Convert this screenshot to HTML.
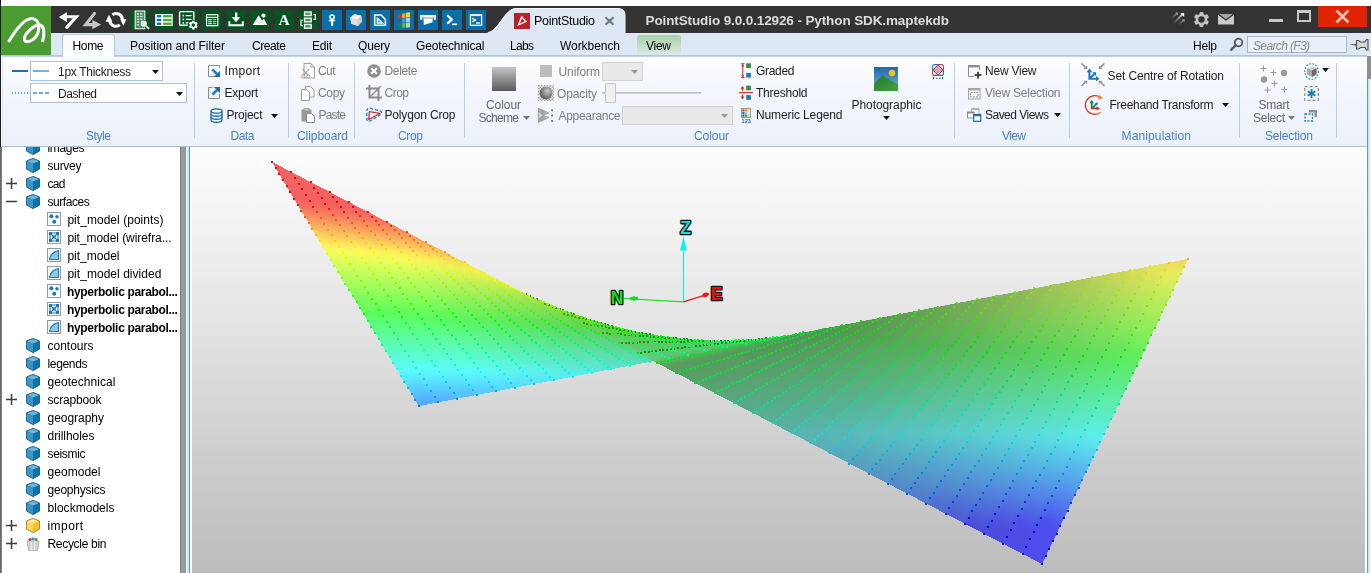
<!DOCTYPE html><html><head><meta charset="utf-8"><title>PointStudio</title><style>
html,body{margin:0;padding:0}
body{width:1371px;height:573px;position:relative;overflow:hidden;background:#fff;font-family:"Liberation Sans",sans-serif;font-size:12px}
.b,.i,.t{position:absolute}
.i{overflow:visible}
.t{white-space:pre;line-height:16px;height:16px}
</style></head><body>
<div class="b" style="left:192px;top:151px;width:1173px;height:422px;background:linear-gradient(#fdfdfd 0%,#e4e4e4 40%,#cfcfcf 70%,#bcbcbc 100%)"></div>
<svg class="i" style="left:192px;top:151px" width="1173" height="422" viewBox="0 0 1173 422"><defs><filter id="bl" x="-5%" y="-5%" width="110%" height="110%"><feGaussianBlur stdDeviation="3"/></filter><clipPath id="cp"><polygon points="80.0,11.0 314.8,133.6 322.1,137.4 329.5,141.0 336.8,144.5 344.1,147.9 351.5,151.1 358.8,154.2 366.1,157.2 373.5,160.0 380.8,162.8 388.1,165.3 395.5,167.8 402.8,170.1 410.1,172.3 417.5,174.4 424.8,176.3 432.1,178.1 439.5,179.8 446.8,181.3 454.1,182.7 461.5,184.0 468.8,185.2 476.1,186.2 483.4,187.1 490.8,187.8 498.1,188.5 505.4,189.0 512.8,189.3 520.1,189.6 527.4,189.7 534.7,189.6 542.1,189.5 549.4,189.2 556.7,188.8 564.1,188.2 571.4,187.5 578.7,186.7 586.0,185.8 593.4,184.7 600.7,183.5 608.0,182.2 996.0,108.0 850.0,413.0 461.0,209.0 227.0,255.0"/></clipPath></defs>
<g id="sf" shape-rendering="crispEdges">
<polygon points="80.0,11.0 99.2,21.0 102.9,26.8 83.7,17.1" fill="#ef6464"/>
<polygon points="83.7,17.1 102.9,26.8 106.6,32.6 87.3,23.2" fill="#ef6464"/>
<polygon points="87.3,23.2 106.6,32.6 110.3,38.3 91.0,29.3" fill="#f06363"/>
<polygon points="91.0,29.3 110.3,38.3 113.9,44.1 94.7,35.4" fill="#f16363"/>
<polygon points="94.7,35.4 113.9,44.1 117.6,49.8 98.4,41.5" fill="#f26262"/>
<polygon points="98.4,41.5 117.6,49.8 121.3,55.6 102.0,47.6" fill="#f36161"/>
<polygon points="102.0,47.6 121.3,55.6 125.0,61.3 105.7,53.7" fill="#f46a61"/>
<polygon points="105.7,53.7 125.0,61.3 128.6,67.1 109.4,59.8" fill="#f67d60"/>
<polygon points="109.4,59.8 128.6,67.1 132.3,72.9 113.1,65.9" fill="#f7905f"/>
<polygon points="113.1,65.9 132.3,72.9 136.0,78.6 116.8,72.0" fill="#f8a45f"/>
<polygon points="116.8,72.0 136.0,78.6 139.7,84.4 120.4,78.1" fill="#f9b85e"/>
<polygon points="120.4,78.1 139.7,84.4 143.3,90.1 124.1,84.2" fill="#facd5d"/>
<polygon points="124.1,84.2 143.3,90.1 147.0,95.9 127.8,90.3" fill="#fbe25d"/>
<polygon points="127.8,90.3 147.0,95.9 150.7,101.6 131.4,96.4" fill="#fcf75c"/>
<polygon points="131.4,96.4 150.7,101.6 154.4,107.4 135.1,102.5" fill="#f0fc5c"/>
<polygon points="135.1,102.5 154.4,107.4 158.0,113.2 138.8,108.6" fill="#e1fc5c"/>
<polygon points="138.8,108.6 158.0,113.2 161.7,118.9 142.5,114.7" fill="#d3fc5c"/>
<polygon points="142.5,114.7 161.7,118.9 165.4,124.7 146.2,120.8" fill="#c4fc5c"/>
<polygon points="146.2,120.8 165.4,124.7 169.1,130.4 149.8,126.9" fill="#b5fc5c"/>
<polygon points="149.8,126.9 169.1,130.4 172.7,136.2 153.5,133.0" fill="#a6fc5c"/>
<polygon points="153.5,133.0 172.7,136.2 176.4,141.9 157.2,139.1" fill="#97fc5c"/>
<polygon points="157.2,139.1 176.4,141.9 180.1,147.7 160.9,145.2" fill="#88fc5c"/>
<polygon points="160.9,145.2 180.1,147.7 183.8,153.5 164.5,151.3" fill="#79fc5c"/>
<polygon points="164.5,151.3 183.8,153.5 187.4,159.2 168.2,157.4" fill="#6afc5c"/>
<polygon points="168.2,157.4 187.4,159.2 191.1,165.0 171.9,163.5" fill="#5cfc5c"/>
<polygon points="171.9,163.5 191.1,165.0 194.8,170.7 175.6,169.6" fill="#5cfc6d"/>
<polygon points="175.6,169.6 194.8,170.7 198.5,176.5 179.2,175.7" fill="#5cfc7d"/>
<polygon points="179.2,175.7 198.5,176.5 202.1,182.2 182.9,181.8" fill="#5cfc8e"/>
<polygon points="182.9,181.8 202.1,182.2 205.8,188.0 186.6,187.9" fill="#5cfc9e"/>
<polygon points="186.6,187.9 205.8,188.0 209.5,193.8 190.2,194.0" fill="#5cfcaf"/>
<polygon points="190.2,194.0 209.5,193.8 213.2,199.5 193.9,200.1" fill="#5cfcbf"/>
<polygon points="193.9,200.1 213.2,199.5 216.8,205.3 197.6,206.2" fill="#5cfcd0"/>
<polygon points="197.6,206.2 216.8,205.3 220.5,211.0 201.3,212.3" fill="#5cfce0"/>
<polygon points="201.3,212.3 220.5,211.0 224.2,216.8 204.9,218.4" fill="#5cfcf0"/>
<polygon points="204.9,218.4 224.2,216.8 227.9,222.5 208.6,224.5" fill="#5cf8fc"/>
<polygon points="208.6,224.5 227.9,222.5 231.5,228.3 212.3,230.6" fill="#5ae9fc"/>
<polygon points="212.3,230.6 231.5,228.3 235.2,234.1 216.0,236.7" fill="#59dafc"/>
<polygon points="216.0,236.7 235.2,234.1 238.9,239.8 219.6,242.8" fill="#58cbfc"/>
<polygon points="219.6,242.8 238.9,239.8 242.6,245.6 223.3,248.9" fill="#56bbfc"/>
<polygon points="223.3,248.9 242.6,245.6 246.2,251.3 227.0,255.0" fill="#55abfc"/>
<polygon points="99.2,21.0 118.5,31.1 122.2,36.5 102.9,26.8" fill="#f06464"/>
<polygon points="102.9,26.8 122.2,36.5 125.8,41.9 106.6,32.6" fill="#f16363"/>
<polygon points="106.6,32.6 125.8,41.9 129.5,47.3 110.3,38.3" fill="#f26363"/>
<polygon points="110.3,38.3 129.5,47.3 133.2,52.8 113.9,44.1" fill="#f36262"/>
<polygon points="113.9,44.1 133.2,52.8 136.9,58.2 117.6,49.8" fill="#f36161"/>
<polygon points="117.6,49.8 136.9,58.2 140.5,63.6 121.3,55.6" fill="#f46a61"/>
<polygon points="121.3,55.6 140.5,63.6 144.2,69.0 125.0,61.3" fill="#f57c60"/>
<polygon points="125.0,61.3 144.2,69.0 147.9,74.4 128.6,67.1" fill="#f68e5f"/>
<polygon points="128.6,67.1 147.9,74.4 151.6,79.8 132.3,72.9" fill="#f7a15f"/>
<polygon points="132.3,72.9 151.6,79.8 155.2,85.2 136.0,78.6" fill="#f8b45e"/>
<polygon points="136.0,78.6 155.2,85.2 158.9,90.7 139.7,84.4" fill="#f9c75e"/>
<polygon points="139.7,84.4 158.9,90.7 162.6,96.1 143.3,90.1" fill="#fadb5d"/>
<polygon points="143.3,90.1 162.6,96.1 166.3,101.5 147.0,95.9" fill="#fbf05c"/>
<polygon points="147.0,95.9 166.3,101.5 169.9,106.9 150.7,101.6" fill="#f6fc5c"/>
<polygon points="150.7,101.6 169.9,106.9 173.6,112.3 154.4,107.4" fill="#e8fc5c"/>
<polygon points="154.4,107.4 173.6,112.3 177.3,117.7 158.0,113.2" fill="#dafc5c"/>
<polygon points="158.0,113.2 177.3,117.7 181.0,123.1 161.7,118.9" fill="#ccfc5c"/>
<polygon points="161.7,118.9 181.0,123.1 184.6,128.5 165.4,124.7" fill="#befc5c"/>
<polygon points="165.4,124.7 184.6,128.5 188.3,134.0 169.1,130.4" fill="#b0fc5c"/>
<polygon points="169.1,130.4 188.3,134.0 192.0,139.4 172.7,136.2" fill="#a1fc5c"/>
<polygon points="172.7,136.2 192.0,139.4 195.6,144.8 176.4,141.9" fill="#93fc5c"/>
<polygon points="176.4,141.9 195.6,144.8 199.3,150.2 180.1,147.7" fill="#85fc5c"/>
<polygon points="180.1,147.7 199.3,150.2 203.0,155.6 183.8,153.5" fill="#77fc5c"/>
<polygon points="183.8,153.5 203.0,155.6 206.7,161.0 187.4,159.2" fill="#69fc5c"/>
<polygon points="187.4,159.2 206.7,161.0 210.3,166.4 191.1,165.0" fill="#5cfc5d"/>
<polygon points="191.1,165.0 210.3,166.4 214.0,171.9 194.8,170.7" fill="#5cfc6d"/>
<polygon points="194.8,170.7 214.0,171.9 217.7,177.3 198.5,176.5" fill="#5cfc7d"/>
<polygon points="198.5,176.5 217.7,177.3 221.4,182.7 202.1,182.2" fill="#5cfc8c"/>
<polygon points="202.1,182.2 221.4,182.7 225.0,188.1 205.8,188.0" fill="#5cfc9c"/>
<polygon points="205.8,188.0 225.0,188.1 228.7,193.5 209.5,193.8" fill="#5cfcac"/>
<polygon points="209.5,193.8 228.7,193.5 232.4,198.9 213.2,199.5" fill="#5cfcbb"/>
<polygon points="213.2,199.5 232.4,198.9 236.1,204.3 216.8,205.3" fill="#5cfccb"/>
<polygon points="216.8,205.3 236.1,204.3 239.7,209.8 220.5,211.0" fill="#5cfcda"/>
<polygon points="220.5,211.0 239.7,209.8 243.4,215.2 224.2,216.8" fill="#5cfcea"/>
<polygon points="224.2,216.8 243.4,215.2 247.1,220.6 227.9,222.5" fill="#5cfcfa"/>
<polygon points="227.9,222.5 247.1,220.6 250.8,226.0 231.5,228.3" fill="#5bf0fc"/>
<polygon points="231.5,228.3 250.8,226.0 254.4,231.4 235.2,234.1" fill="#5ae2fc"/>
<polygon points="235.2,234.1 254.4,231.4 258.1,236.8 238.9,239.8" fill="#58d3fc"/>
<polygon points="238.9,239.8 258.1,236.8 261.8,242.2 242.6,245.6" fill="#57c5fc"/>
<polygon points="242.6,245.6 261.8,242.2 265.4,247.6 246.2,251.3" fill="#56b6fc"/>
<polygon points="118.5,31.1 137.8,41.1 141.4,46.2 122.2,36.5" fill="#f16363"/>
<polygon points="122.2,36.5 141.4,46.2 145.1,51.3 125.8,41.9" fill="#f26262"/>
<polygon points="125.8,41.9 145.1,51.3 148.8,56.4 129.5,47.3" fill="#f36262"/>
<polygon points="129.5,47.3 148.8,56.4 152.4,61.4 133.2,52.8" fill="#f46161"/>
<polygon points="133.2,52.8 152.4,61.4 156.1,66.5 136.9,58.2" fill="#f56b61"/>
<polygon points="136.9,58.2 156.1,66.5 159.8,71.6 140.5,63.6" fill="#f67c60"/>
<polygon points="140.5,63.6 159.8,71.6 163.5,76.6 144.2,69.0" fill="#f68e5f"/>
<polygon points="144.2,69.0 163.5,76.6 167.1,81.7 147.9,74.4" fill="#f7a05f"/>
<polygon points="147.9,74.4 167.1,81.7 170.8,86.8 151.6,79.8" fill="#f8b25e"/>
<polygon points="151.6,79.8 170.8,86.8 174.5,91.9 155.2,85.2" fill="#f9c45e"/>
<polygon points="155.2,85.2 174.5,91.9 178.2,96.9 158.9,90.7" fill="#fad75d"/>
<polygon points="158.9,90.7 178.2,96.9 181.8,102.0 162.6,96.1" fill="#fbea5d"/>
<polygon points="162.6,96.1 181.8,102.0 185.5,107.1 166.3,101.5" fill="#fbfc5c"/>
<polygon points="166.3,101.5 185.5,107.1 189.2,112.1 169.9,106.9" fill="#edfc5c"/>
<polygon points="169.9,106.9 189.2,112.1 192.8,117.2 173.6,112.3" fill="#e0fc5c"/>
<polygon points="173.6,112.3 192.8,117.2 196.5,122.3 177.3,117.7" fill="#d3fc5c"/>
<polygon points="177.3,117.7 196.5,122.3 200.2,127.4 181.0,123.1" fill="#c5fc5c"/>
<polygon points="181.0,123.1 200.2,127.4 203.9,132.4 184.6,128.5" fill="#b8fc5c"/>
<polygon points="184.6,128.5 203.9,132.4 207.5,137.5 188.3,134.0" fill="#aafc5c"/>
<polygon points="188.3,134.0 207.5,137.5 211.2,142.6 192.0,139.4" fill="#9dfc5c"/>
<polygon points="192.0,139.4 211.2,142.6 214.9,147.6 195.6,144.8" fill="#90fc5c"/>
<polygon points="195.6,144.8 214.9,147.6 218.6,152.7 199.3,150.2" fill="#82fc5c"/>
<polygon points="199.3,150.2 218.6,152.7 222.2,157.8 203.0,155.6" fill="#75fc5c"/>
<polygon points="203.0,155.6 222.2,157.8 225.9,162.8 206.7,161.0" fill="#67fc5c"/>
<polygon points="206.7,161.0 225.9,162.8 229.6,167.9 210.3,166.4" fill="#5cfc5e"/>
<polygon points="210.3,166.4 229.6,167.9 233.3,173.0 214.0,171.9" fill="#5cfc6d"/>
<polygon points="214.0,171.9 233.3,173.0 236.9,178.1 217.7,177.3" fill="#5cfc7c"/>
<polygon points="217.7,177.3 236.9,178.1 240.6,183.1 221.4,182.7" fill="#5cfc8b"/>
<polygon points="221.4,182.7 240.6,183.1 244.3,188.2 225.0,188.1" fill="#5cfc9a"/>
<polygon points="225.0,188.1 244.3,188.2 247.9,193.3 228.7,193.5" fill="#5cfca8"/>
<polygon points="228.7,193.5 247.9,193.3 251.6,198.3 232.4,198.9" fill="#5cfcb7"/>
<polygon points="232.4,198.9 251.6,198.3 255.3,203.4 236.1,204.3" fill="#5cfcc6"/>
<polygon points="236.1,204.3 255.3,203.4 259.0,208.5 239.7,209.8" fill="#5cfcd5"/>
<polygon points="239.7,209.8 259.0,208.5 262.6,213.6 243.4,215.2" fill="#5cfce4"/>
<polygon points="243.4,215.2 262.6,213.6 266.3,218.6 247.1,220.6" fill="#5cfcf3"/>
<polygon points="247.1,220.6 266.3,218.6 270.0,223.7 250.8,226.0" fill="#5cf7fc"/>
<polygon points="250.8,226.0 270.0,223.7 273.7,228.8 254.4,231.4" fill="#5aeafc"/>
<polygon points="254.4,231.4 273.7,228.8 277.3,233.8 258.1,236.8" fill="#59dcfc"/>
<polygon points="258.1,236.8 277.3,233.8 281.0,238.9 261.8,242.2" fill="#58cffc"/>
<polygon points="261.8,242.2 281.0,238.9 284.7,244.0 265.4,247.6" fill="#57c1fc"/>
<polygon points="137.8,41.1 157.0,51.2 160.7,55.9 141.4,46.2" fill="#f26262"/>
<polygon points="141.4,46.2 160.7,55.9 164.3,60.7 145.1,51.3" fill="#f36262"/>
<polygon points="145.1,51.3 164.3,60.7 168.0,65.4 148.8,56.4" fill="#f46161"/>
<polygon points="148.8,56.4 168.0,65.4 171.7,70.1 152.4,61.4" fill="#f56f61"/>
<polygon points="152.4,61.4 171.7,70.1 175.4,74.8 156.1,66.5" fill="#f67f60"/>
<polygon points="156.1,66.5 175.4,74.8 179.0,79.6 159.8,71.6" fill="#f7905f"/>
<polygon points="159.8,71.6 179.0,79.6 182.7,84.3 163.5,76.6" fill="#f7a05f"/>
<polygon points="163.5,76.6 182.7,84.3 186.4,89.0 167.1,81.7" fill="#f8b25e"/>
<polygon points="167.1,81.7 186.4,89.0 190.1,93.7 170.8,86.8" fill="#f9c35e"/>
<polygon points="170.8,86.8 190.1,93.7 193.7,98.5 174.5,91.9" fill="#fad55d"/>
<polygon points="174.5,91.9 193.7,98.5 197.4,103.2 178.2,96.9" fill="#fbe75d"/>
<polygon points="178.2,96.9 197.4,103.2 201.1,107.9 181.8,102.0" fill="#fcf95c"/>
<polygon points="181.8,102.0 201.1,107.9 204.7,112.7 185.5,107.1" fill="#f1fc5c"/>
<polygon points="185.5,107.1 204.7,112.7 208.4,117.4 189.2,112.1" fill="#e4fc5c"/>
<polygon points="189.2,112.1 208.4,117.4 212.1,122.1 192.8,117.2" fill="#d8fc5c"/>
<polygon points="192.8,117.2 212.1,122.1 215.8,126.8 196.5,122.3" fill="#cbfc5c"/>
<polygon points="196.5,122.3 215.8,126.8 219.4,131.6 200.2,127.4" fill="#befc5c"/>
<polygon points="200.2,127.4 219.4,131.6 223.1,136.3 203.9,132.4" fill="#b2fc5c"/>
<polygon points="203.9,132.4 223.1,136.3 226.8,141.0 207.5,137.5" fill="#a5fc5c"/>
<polygon points="207.5,137.5 226.8,141.0 230.5,145.8 211.2,142.6" fill="#98fc5c"/>
<polygon points="211.2,142.6 230.5,145.8 234.1,150.5 214.9,147.6" fill="#8cfc5c"/>
<polygon points="214.9,147.6 234.1,150.5 237.8,155.2 218.6,152.7" fill="#7ffc5c"/>
<polygon points="218.6,152.7 237.8,155.2 241.5,159.9 222.2,157.8" fill="#72fc5c"/>
<polygon points="222.2,157.8 241.5,159.9 245.1,164.7 225.9,162.8" fill="#66fc5c"/>
<polygon points="225.9,162.8 245.1,164.7 248.8,169.4 229.6,167.9" fill="#5cfc5f"/>
<polygon points="229.6,167.9 248.8,169.4 252.5,174.1 233.3,173.0" fill="#5cfc6d"/>
<polygon points="233.3,173.0 252.5,174.1 256.2,178.8 236.9,178.1" fill="#5cfc7b"/>
<polygon points="236.9,178.1 256.2,178.8 259.8,183.6 240.6,183.1" fill="#5cfc89"/>
<polygon points="240.6,183.1 259.8,183.6 263.5,188.3 244.3,188.2" fill="#5cfc97"/>
<polygon points="244.3,188.2 263.5,188.3 267.2,193.0 247.9,193.3" fill="#5cfca5"/>
<polygon points="247.9,193.3 267.2,193.0 270.8,197.8 251.6,198.3" fill="#5cfcb3"/>
<polygon points="251.6,198.3 270.8,197.8 274.5,202.5 255.3,203.4" fill="#5cfcc1"/>
<polygon points="255.3,203.4 274.5,202.5 278.2,207.2 259.0,208.5" fill="#5cfccf"/>
<polygon points="259.0,208.5 278.2,207.2 281.9,211.9 262.6,213.6" fill="#5cfcdd"/>
<polygon points="262.6,213.6 281.9,211.9 285.5,216.7 266.3,218.6" fill="#5cfceb"/>
<polygon points="266.3,218.6 285.5,216.7 289.2,221.4 270.0,223.7" fill="#5cfcf9"/>
<polygon points="270.0,223.7 289.2,221.4 292.9,226.1 273.7,228.8" fill="#5bf2fc"/>
<polygon points="273.7,228.8 292.9,226.1 296.6,230.8 277.3,233.8" fill="#5ae5fc"/>
<polygon points="277.3,233.8 296.6,230.8 300.2,235.6 281.0,238.9" fill="#59d8fc"/>
<polygon points="281.0,238.9 300.2,235.6 303.9,240.3 284.7,244.0" fill="#58cbfc"/>
<polygon points="157.0,51.2 176.2,61.2 179.9,65.6 160.7,55.9" fill="#f36161"/>
<polygon points="160.7,55.9 179.9,65.6 183.6,70.0 164.3,60.7" fill="#f46561"/>
<polygon points="164.3,60.7 183.6,70.0 187.3,74.4 168.0,65.4" fill="#f57460"/>
<polygon points="168.0,65.4 187.3,74.4 190.9,78.8 171.7,70.1" fill="#f68460"/>
<polygon points="171.7,70.1 190.9,78.8 194.6,83.2 175.4,74.8" fill="#f7935f"/>
<polygon points="175.4,74.8 194.6,83.2 198.3,87.6 179.0,79.6" fill="#f8a35f"/>
<polygon points="179.0,79.6 198.3,87.6 202.0,91.9 182.7,84.3" fill="#f8b35e"/>
<polygon points="182.7,84.3 202.0,91.9 205.6,96.3 186.4,89.0" fill="#f9c45e"/>
<polygon points="186.4,89.0 205.6,96.3 209.3,100.7 190.1,93.7" fill="#fad55d"/>
<polygon points="190.1,93.7 209.3,100.7 213.0,105.1 193.7,98.5" fill="#fbe65d"/>
<polygon points="193.7,98.5 213.0,105.1 216.6,109.5 197.4,103.2" fill="#fcf75c"/>
<polygon points="197.4,103.2 216.6,109.5 220.3,113.9 201.1,107.9" fill="#f3fc5c"/>
<polygon points="201.1,107.9 220.3,113.9 224.0,118.2 204.7,112.7" fill="#e7fc5c"/>
<polygon points="204.7,112.7 224.0,118.2 227.7,122.6 208.4,117.4" fill="#dbfc5c"/>
<polygon points="208.4,117.4 227.7,122.6 231.3,127.0 212.1,122.1" fill="#cffb5c"/>
<polygon points="212.1,122.1 231.3,127.0 235.0,131.4 215.8,126.8" fill="#c3fb5c"/>
<polygon points="215.8,126.8 235.0,131.4 238.7,135.8 219.4,131.6" fill="#b7fa5c"/>
<polygon points="219.4,131.6 238.7,135.8 242.3,140.2 223.1,136.3" fill="#abfa5c"/>
<polygon points="223.1,136.3 242.3,140.2 246.0,144.6 226.8,141.0" fill="#9ff95c"/>
<polygon points="226.8,141.0 246.0,144.6 249.7,148.9 230.5,145.8" fill="#93f95c"/>
<polygon points="230.5,145.8 249.7,148.9 253.4,153.3 234.1,150.5" fill="#87f95c"/>
<polygon points="234.1,150.5 253.4,153.3 257.0,157.7 237.8,155.2" fill="#7bf85c"/>
<polygon points="237.8,155.2 257.0,157.7 260.7,162.1 241.5,159.9" fill="#70f85c"/>
<polygon points="241.5,159.9 260.7,162.1 264.4,166.5 245.1,164.7" fill="#64f85c"/>
<polygon points="245.1,164.7 264.4,166.5 268.0,170.9 248.8,169.4" fill="#5cf860"/>
<polygon points="248.8,169.4 268.0,170.9 271.7,175.2 252.5,174.1" fill="#5cf86d"/>
<polygon points="252.5,174.1 271.7,175.2 275.4,179.6 256.2,178.8" fill="#5cf87a"/>
<polygon points="256.2,178.8 275.4,179.6 279.1,184.0 259.8,183.6" fill="#5cf887"/>
<polygon points="259.8,183.6 279.1,184.0 282.7,188.4 263.5,188.3" fill="#5cf894"/>
<polygon points="263.5,188.3 282.7,188.4 286.4,192.8 267.2,193.0" fill="#5cf8a0"/>
<polygon points="267.2,193.0 286.4,192.8 290.1,197.2 270.8,197.8" fill="#5cf8ad"/>
<polygon points="270.8,197.8 290.1,197.2 293.8,201.6 274.5,202.5" fill="#5cf8ba"/>
<polygon points="274.5,202.5 293.8,201.6 297.4,205.9 278.2,207.2" fill="#5cf9c8"/>
<polygon points="278.2,207.2 297.4,205.9 301.1,210.3 281.9,211.9" fill="#5cf9d5"/>
<polygon points="281.9,211.9 301.1,210.3 304.8,214.7 285.5,216.7" fill="#5cf9e2"/>
<polygon points="285.5,216.7 304.8,214.7 308.4,219.1 289.2,221.4" fill="#5cfaef"/>
<polygon points="289.2,221.4 308.4,219.1 312.1,223.5 292.9,226.1" fill="#5cf8fa"/>
<polygon points="292.9,226.1 312.1,223.5 315.8,227.9 296.6,230.8" fill="#5bedfb"/>
<polygon points="296.6,230.8 315.8,227.9 319.5,232.2 300.2,235.6" fill="#5ae1fb"/>
<polygon points="300.2,235.6 319.5,232.2 323.1,236.6 303.9,240.3" fill="#59d6fc"/>
<polygon points="176.2,61.2 195.5,71.3 199.2,75.3 179.9,65.6" fill="#f56d61"/>
<polygon points="179.9,65.6 199.2,75.3 202.8,79.4 183.6,70.0" fill="#f57c60"/>
<polygon points="183.6,70.0 202.8,79.4 206.5,83.4 187.3,74.4" fill="#f68a60"/>
<polygon points="187.3,74.4 206.5,83.4 210.2,87.5 190.9,78.8" fill="#f7995f"/>
<polygon points="190.9,78.8 210.2,87.5 213.9,91.5 194.6,83.2" fill="#f8a85f"/>
<polygon points="194.6,83.2 213.9,91.5 217.5,95.5 198.3,87.6" fill="#f9b75e"/>
<polygon points="198.3,87.6 217.5,95.5 221.2,99.6 202.0,91.9" fill="#f9c75e"/>
<polygon points="202.0,91.9 221.2,99.6 224.9,103.6 205.6,96.3" fill="#fad75d"/>
<polygon points="205.6,96.3 224.9,103.6 228.5,107.7 209.3,100.7" fill="#fae65d"/>
<polygon points="209.3,100.7 228.5,107.7 232.2,111.7 213.0,105.1" fill="#faf65c"/>
<polygon points="213.0,105.1 232.2,111.7 235.9,115.8 216.6,109.5" fill="#f2fa5c"/>
<polygon points="216.6,109.5 235.9,115.8 239.6,119.8 220.3,113.9" fill="#e7f95c"/>
<polygon points="220.3,113.9 239.6,119.8 243.2,123.8 224.0,118.2" fill="#dbf85c"/>
<polygon points="224.0,118.2 243.2,123.8 246.9,127.9 227.7,122.6" fill="#cff85c"/>
<polygon points="227.7,122.6 246.9,127.9 250.6,131.9 231.3,127.0" fill="#c4f75c"/>
<polygon points="231.3,127.0 250.6,131.9 254.2,136.0 235.0,131.4" fill="#b9f75c"/>
<polygon points="235.0,131.4 254.2,136.0 257.9,140.0 238.7,135.8" fill="#aef65c"/>
<polygon points="238.7,135.8 257.9,140.0 261.6,144.0 242.3,140.2" fill="#a3f65c"/>
<polygon points="242.3,140.2 261.6,144.0 265.3,148.1 246.0,144.6" fill="#98f55c"/>
<polygon points="246.0,144.6 265.3,148.1 268.9,152.1 249.7,148.9" fill="#8df55c"/>
<polygon points="249.7,148.9 268.9,152.1 272.6,156.2 253.4,153.3" fill="#82f45c"/>
<polygon points="253.4,153.3 272.6,156.2 276.3,160.2 257.0,157.7" fill="#78f45c"/>
<polygon points="257.0,157.7 276.3,160.2 279.9,164.2 260.7,162.1" fill="#6df45c"/>
<polygon points="260.7,162.1 279.9,164.2 283.6,168.3 264.4,166.5" fill="#62f45c"/>
<polygon points="264.4,166.5 283.6,168.3 287.3,172.3 268.0,170.9" fill="#5cf461"/>
<polygon points="268.0,170.9 287.3,172.3 291.0,176.4 271.7,175.2" fill="#5cf46d"/>
<polygon points="271.7,175.2 291.0,176.4 294.6,180.4 275.4,179.6" fill="#5cf378"/>
<polygon points="275.4,179.6 294.6,180.4 298.3,184.5 279.1,184.0" fill="#5cf484"/>
<polygon points="279.1,184.0 298.3,184.5 302.0,188.5 282.7,188.4" fill="#5cf490"/>
<polygon points="282.7,188.4 302.0,188.5 305.6,192.5 286.4,192.8" fill="#5cf49c"/>
<polygon points="286.4,192.8 305.6,192.5 309.3,196.6 290.1,197.2" fill="#5cf4a7"/>
<polygon points="290.1,197.2 309.3,196.6 313.0,200.6 293.8,201.6" fill="#5cf4b3"/>
<polygon points="293.8,201.6 313.0,200.6 316.7,204.7 297.4,205.9" fill="#5cf5bf"/>
<polygon points="297.4,205.9 316.7,204.7 320.3,208.7 301.1,210.3" fill="#5cf5cb"/>
<polygon points="301.1,210.3 320.3,208.7 324.0,212.7 304.8,214.7" fill="#5cf5d8"/>
<polygon points="304.8,214.7 324.0,212.7 327.7,216.8 308.4,219.1" fill="#5cf6e4"/>
<polygon points="308.4,219.1 327.7,216.8 331.3,220.8 312.1,223.5" fill="#5cf6f0"/>
<polygon points="312.1,223.5 331.3,220.8 335.0,224.9 315.8,227.9" fill="#5bf2f7"/>
<polygon points="315.8,227.9 335.0,224.9 338.7,228.9 319.5,232.2" fill="#5ae7f7"/>
<polygon points="319.5,232.2 338.7,228.9 342.3,232.9 323.1,236.6" fill="#59ddf8"/>
<polygon points="195.5,71.3 214.8,81.3 218.4,85.0 199.2,75.3" fill="#f68560"/>
<polygon points="199.2,75.3 218.4,85.0 222.1,88.7 202.8,79.4" fill="#f7935f"/>
<polygon points="202.8,79.4 222.1,88.7 225.8,92.4 206.5,83.4" fill="#f7a15f"/>
<polygon points="206.5,83.4 225.8,92.4 229.4,96.1 210.2,87.5" fill="#f8af5e"/>
<polygon points="210.2,87.5 229.4,96.1 233.1,99.8 213.9,91.5" fill="#f8bd5e"/>
<polygon points="213.9,91.5 233.1,99.8 236.8,103.5 217.5,95.5" fill="#f8cb5d"/>
<polygon points="217.5,95.5 236.8,103.5 240.4,107.2 221.2,99.6" fill="#f8d95d"/>
<polygon points="221.2,99.6 240.4,107.2 244.1,110.9 224.9,103.6" fill="#f8e75d"/>
<polygon points="224.9,103.6 244.1,110.9 247.8,114.6 228.5,107.7" fill="#f8f55c"/>
<polygon points="228.5,107.7 247.8,114.6 251.5,118.3 232.2,111.7" fill="#eff75c"/>
<polygon points="232.2,111.7 251.5,118.3 255.1,122.0 235.9,115.8" fill="#e4f65c"/>
<polygon points="235.9,115.8 255.1,122.0 258.8,125.7 239.6,119.8" fill="#d9f55c"/>
<polygon points="239.6,119.8 258.8,125.7 262.5,129.4 243.2,123.8" fill="#cff45c"/>
<polygon points="243.2,123.8 262.5,129.4 266.1,133.1 246.9,127.9" fill="#c4f45c"/>
<polygon points="246.9,127.9 266.1,133.1 269.8,136.8 250.6,131.9" fill="#baf35c"/>
<polygon points="250.6,131.9 269.8,136.8 273.5,140.5 254.2,136.0" fill="#aff25c"/>
<polygon points="254.2,136.0 273.5,140.5 277.2,144.2 257.9,140.0" fill="#a5f25c"/>
<polygon points="257.9,140.0 277.2,144.2 280.8,147.9 261.6,144.0" fill="#9bf15c"/>
<polygon points="261.6,144.0 280.8,147.9 284.5,151.6 265.3,148.1" fill="#91f15c"/>
<polygon points="265.3,148.1 284.5,151.6 288.2,155.3 268.9,152.1" fill="#87f05c"/>
<polygon points="268.9,152.1 288.2,155.3 291.8,159.0 272.6,156.2" fill="#7ef05c"/>
<polygon points="272.6,156.2 291.8,159.0 295.5,162.7 276.3,160.2" fill="#74f05c"/>
<polygon points="276.3,160.2 295.5,162.7 299.2,166.4 279.9,164.2" fill="#6aef5c"/>
<polygon points="279.9,164.2 299.2,166.4 302.8,170.1 283.6,168.3" fill="#61ef5c"/>
<polygon points="283.6,168.3 302.8,170.1 306.5,173.8 287.3,172.3" fill="#5cef62"/>
<polygon points="287.3,172.3 306.5,173.8 310.2,177.5 291.0,176.4" fill="#5cef6c"/>
<polygon points="291.0,176.4 310.2,177.5 313.9,181.2 294.6,180.4" fill="#5cef77"/>
<polygon points="294.6,180.4 313.9,181.2 317.5,184.9 298.3,184.5" fill="#5cef81"/>
<polygon points="298.3,184.5 317.5,184.9 321.2,188.6 302.0,188.5" fill="#5cef8c"/>
<polygon points="302.0,188.5 321.2,188.6 324.9,192.3 305.6,192.5" fill="#5cef97"/>
<polygon points="305.6,192.5 324.9,192.3 328.5,196.0 309.3,196.6" fill="#5cf0a2"/>
<polygon points="309.3,196.6 328.5,196.0 332.2,199.7 313.0,200.6" fill="#5cf0ac"/>
<polygon points="313.0,200.6 332.2,199.7 335.9,203.4 316.7,204.7" fill="#5cf0b7"/>
<polygon points="316.7,204.7 335.9,203.4 339.6,207.1 320.3,208.7" fill="#5cf1c2"/>
<polygon points="320.3,208.7 339.6,207.1 343.2,210.8 324.0,212.7" fill="#5cf1ce"/>
<polygon points="324.0,212.7 343.2,210.8 346.9,214.5 327.7,216.8" fill="#5cf2d9"/>
<polygon points="327.7,216.8 346.9,214.5 350.6,218.2 331.3,220.8" fill="#5cf2e4"/>
<polygon points="331.3,220.8 350.6,218.2 354.2,221.9 335.0,224.9" fill="#5cf3f0"/>
<polygon points="335.0,224.9 354.2,221.9 357.9,225.6 338.7,228.9" fill="#5becf3"/>
<polygon points="338.7,228.9 357.9,225.6 361.6,229.3 342.3,232.9" fill="#5ae3f4"/>
<polygon points="214.8,81.3 234.0,91.4 237.7,94.8 218.4,85.0" fill="#f79d5f"/>
<polygon points="218.4,85.0 237.7,94.8 241.3,98.1 222.1,88.7" fill="#f7aa5f"/>
<polygon points="222.1,88.7 241.3,98.1 245.0,101.5 225.8,92.4" fill="#f7b75e"/>
<polygon points="225.8,92.4 245.0,101.5 248.7,104.8 229.4,96.1" fill="#f7c35e"/>
<polygon points="229.4,96.1 248.7,104.8 252.3,108.2 233.1,99.8" fill="#f6d05d"/>
<polygon points="233.1,99.8 252.3,108.2 256.0,111.5 236.8,103.5" fill="#f6dd5d"/>
<polygon points="236.8,103.5 256.0,111.5 259.7,114.9 240.4,107.2" fill="#f5e95c"/>
<polygon points="240.4,107.2 259.7,114.9 263.4,118.2 244.1,110.9" fill="#f4f55c"/>
<polygon points="244.1,110.9 263.4,118.2 267.0,121.6 247.8,114.6" fill="#eaf45c"/>
<polygon points="247.8,114.6 267.0,121.6 270.7,124.9 251.5,118.3" fill="#e0f35c"/>
<polygon points="251.5,118.3 270.7,124.9 274.4,128.3 255.1,122.0" fill="#d6f25c"/>
<polygon points="255.1,122.0 274.4,128.3 278.0,131.7 258.8,125.7" fill="#ccf15c"/>
<polygon points="258.8,125.7 278.0,131.7 281.7,135.0 262.5,129.4" fill="#c3f05c"/>
<polygon points="262.5,129.4 281.7,135.0 285.4,138.4 266.1,133.1" fill="#b9f05c"/>
<polygon points="266.1,133.1 285.4,138.4 289.1,141.7 269.8,136.8" fill="#b0ef5c"/>
<polygon points="269.8,136.8 289.1,141.7 292.7,145.1 273.5,140.5" fill="#a6ee5c"/>
<polygon points="273.5,140.5 292.7,145.1 296.4,148.4 277.2,144.2" fill="#9ded5c"/>
<polygon points="277.2,144.2 296.4,148.4 300.1,151.8 280.8,147.9" fill="#94ed5c"/>
<polygon points="280.8,147.9 300.1,151.8 303.7,155.1 284.5,151.6" fill="#8bec5c"/>
<polygon points="284.5,151.6 303.7,155.1 307.4,158.5 288.2,155.3" fill="#82ec5c"/>
<polygon points="288.2,155.3 307.4,158.5 311.1,161.9 291.8,159.0" fill="#79eb5c"/>
<polygon points="291.8,159.0 311.1,161.9 314.7,165.2 295.5,162.7" fill="#70eb5c"/>
<polygon points="295.5,162.7 314.7,165.2 318.4,168.6 299.2,166.4" fill="#68eb5c"/>
<polygon points="299.2,166.4 318.4,168.6 322.1,171.9 302.8,170.1" fill="#5fea5c"/>
<polygon points="302.8,170.1 322.1,171.9 325.8,175.3 306.5,173.8" fill="#5cea62"/>
<polygon points="306.5,173.8 325.8,175.3 329.4,178.6 310.2,177.5" fill="#5cea6c"/>
<polygon points="310.2,177.5 329.4,178.6 333.1,182.0 313.9,181.2" fill="#5cea75"/>
<polygon points="313.9,181.2 333.1,182.0 336.8,185.3 317.5,184.9" fill="#5cea7f"/>
<polygon points="317.5,184.9 336.8,185.3 340.4,188.7 321.2,188.6" fill="#5cea89"/>
<polygon points="321.2,188.6 340.4,188.7 344.1,192.1 324.9,192.3" fill="#5ceb92"/>
<polygon points="324.9,192.3 344.1,192.1 347.8,195.4 328.5,196.0" fill="#5ceb9c"/>
<polygon points="328.5,196.0 347.8,195.4 351.4,198.8 332.2,199.7" fill="#5ceba6"/>
<polygon points="332.2,199.7 351.4,198.8 355.1,202.1 335.9,203.4" fill="#5cecb0"/>
<polygon points="335.9,203.4 355.1,202.1 358.8,205.5 339.6,207.1" fill="#5cecba"/>
<polygon points="339.6,207.1 358.8,205.5 362.5,208.8 343.2,210.8" fill="#5cedc4"/>
<polygon points="343.2,210.8 362.5,208.8 366.1,212.2 346.9,214.5" fill="#5cedce"/>
<polygon points="346.9,214.5 366.1,212.2 369.8,215.5 350.6,218.2" fill="#5ceed8"/>
<polygon points="350.6,218.2 369.8,215.5 373.5,218.9 354.2,221.9" fill="#5ceee3"/>
<polygon points="354.2,221.9 373.5,218.9 377.1,222.2 357.9,225.6" fill="#5cefed"/>
<polygon points="357.9,225.6 377.1,222.2 380.8,225.6 361.6,229.3" fill="#5be9f0"/>
<polygon points="234.0,91.4 253.2,101.4 256.9,104.5 237.7,94.8" fill="#f6b55e"/>
<polygon points="237.7,94.8 256.9,104.5 260.6,107.5 241.3,98.1" fill="#f6c05e"/>
<polygon points="241.3,98.1 260.6,107.5 264.3,110.5 245.0,101.5" fill="#f5cc5d"/>
<polygon points="245.0,101.5 264.3,110.5 267.9,113.5 248.7,104.8" fill="#f4d75d"/>
<polygon points="248.7,104.8 267.9,113.5 271.6,116.5 252.3,108.2" fill="#f4e35d"/>
<polygon points="252.3,108.2 271.6,116.5 275.3,119.5 256.0,111.5" fill="#f3ee5c"/>
<polygon points="256.0,111.5 275.3,119.5 278.9,122.5 259.7,114.9" fill="#eef25c"/>
<polygon points="259.7,114.9 278.9,122.5 282.6,125.5 263.4,118.2" fill="#e4f15c"/>
<polygon points="263.4,118.2 282.6,125.5 286.3,128.6 267.0,121.6" fill="#dbf05c"/>
<polygon points="267.0,121.6 286.3,128.6 289.9,131.6 270.7,124.9" fill="#d2ef5c"/>
<polygon points="270.7,124.9 289.9,131.6 293.6,134.6 274.4,128.3" fill="#c9ee5c"/>
<polygon points="274.4,128.3 293.6,134.6 297.3,137.6 278.0,131.7" fill="#c0ed5c"/>
<polygon points="278.0,131.7 297.3,137.6 301.0,140.6 281.7,135.0" fill="#b7ec5c"/>
<polygon points="281.7,135.0 301.0,140.6 304.6,143.6 285.4,138.4" fill="#aeeb5c"/>
<polygon points="285.4,138.4 304.6,143.6 308.3,146.6 289.1,141.7" fill="#a6ea5c"/>
<polygon points="289.1,141.7 308.3,146.6 312.0,149.6 292.7,145.1" fill="#9dea5c"/>
<polygon points="292.7,145.1 312.0,149.6 315.6,152.7 296.4,148.4" fill="#95e95c"/>
<polygon points="296.4,148.4 315.6,152.7 319.3,155.7 300.1,151.8" fill="#8de85c"/>
<polygon points="300.1,151.8 319.3,155.7 323.0,158.7 303.7,155.1" fill="#85e85c"/>
<polygon points="303.7,155.1 323.0,158.7 326.6,161.7 307.4,158.5" fill="#7de75c"/>
<polygon points="307.4,158.5 326.6,161.7 330.3,164.7 311.1,161.9" fill="#75e75c"/>
<polygon points="311.1,161.9 330.3,164.7 334.0,167.7 314.7,165.2" fill="#6de65c"/>
<polygon points="314.7,165.2 334.0,167.7 337.6,170.7 318.4,168.6" fill="#65e65c"/>
<polygon points="318.4,168.6 337.6,170.7 341.3,173.7 322.1,171.9" fill="#5ee65c"/>
<polygon points="322.1,171.9 341.3,173.7 345.0,176.7 325.8,175.3" fill="#5ce563"/>
<polygon points="325.8,175.3 345.0,176.7 348.7,179.8 329.4,178.6" fill="#5ce56b"/>
<polygon points="329.4,178.6 348.7,179.8 352.3,182.8 333.1,182.0" fill="#5ce574"/>
<polygon points="333.1,182.0 352.3,182.8 356.0,185.8 336.8,185.3" fill="#5ce57c"/>
<polygon points="336.8,185.3 356.0,185.8 359.7,188.8 340.4,188.7" fill="#5ce585"/>
<polygon points="340.4,188.7 359.7,188.8 363.3,191.8 344.1,192.1" fill="#5ce68e"/>
<polygon points="344.1,192.1 363.3,191.8 367.0,194.8 347.8,195.4" fill="#5ce696"/>
<polygon points="347.8,195.4 367.0,194.8 370.7,197.8 351.4,198.8" fill="#5ce69f"/>
<polygon points="351.4,198.8 370.7,197.8 374.3,200.8 355.1,202.1" fill="#5ce7a8"/>
<polygon points="355.1,202.1 374.3,200.8 378.0,203.9 358.8,205.5" fill="#5ce7b1"/>
<polygon points="358.8,205.5 378.0,203.9 381.7,206.9 362.5,208.8" fill="#5ce8ba"/>
<polygon points="362.5,208.8 381.7,206.9 385.3,209.9 366.1,212.2" fill="#5ce9c3"/>
<polygon points="366.1,212.2 385.3,209.9 389.0,212.9 369.8,215.5" fill="#5ce9cc"/>
<polygon points="369.8,215.5 389.0,212.9 392.7,215.9 373.5,218.9" fill="#5cead6"/>
<polygon points="373.5,218.9 392.7,215.9 396.4,218.9 377.1,222.2" fill="#5cebe0"/>
<polygon points="377.1,222.2 396.4,218.9 400.0,221.9 380.8,225.6" fill="#5cece9"/>
<polygon points="253.2,101.4 272.5,111.5 276.2,114.2 256.9,104.5" fill="#f4cc5d"/>
<polygon points="256.9,104.5 276.2,114.2 279.8,116.8 260.6,107.5" fill="#f4d65d"/>
<polygon points="260.6,107.5 279.8,116.8 283.5,119.5 264.3,110.5" fill="#f3e05d"/>
<polygon points="264.3,110.5 283.5,119.5 287.2,122.2 267.9,113.5" fill="#f2eb5c"/>
<polygon points="267.9,113.5 287.2,122.2 290.8,124.8 271.6,116.5" fill="#eff15c"/>
<polygon points="271.6,116.5 290.8,124.8 294.5,127.5 275.3,119.5" fill="#e6f05c"/>
<polygon points="275.3,119.5 294.5,127.5 298.2,130.2 278.9,122.5" fill="#ddef5c"/>
<polygon points="278.9,122.5 298.2,130.2 301.8,132.8 282.6,125.5" fill="#d5ed5c"/>
<polygon points="282.6,125.5 301.8,132.8 305.5,135.5 286.3,128.6" fill="#ccec5c"/>
<polygon points="286.3,128.6 305.5,135.5 309.2,138.2 289.9,131.6" fill="#c4eb5c"/>
<polygon points="289.9,131.6 309.2,138.2 312.9,140.9 293.6,134.6" fill="#bcea5c"/>
<polygon points="293.6,134.6 312.9,140.9 316.5,143.5 297.3,137.6" fill="#b4e95c"/>
<polygon points="297.3,137.6 316.5,143.5 320.2,146.2 301.0,140.6" fill="#ace85c"/>
<polygon points="301.0,140.6 320.2,146.2 323.9,148.9 304.6,143.6" fill="#a4e75c"/>
<polygon points="304.6,143.6 323.9,148.9 327.5,151.5 308.3,146.6" fill="#9ce65c"/>
<polygon points="308.3,146.6 327.5,151.5 331.2,154.2 312.0,149.6" fill="#95e55c"/>
<polygon points="312.0,149.6 331.2,154.2 334.9,156.9 315.6,152.7" fill="#8de45c"/>
<polygon points="315.6,152.7 334.9,156.9 338.5,159.5 319.3,155.7" fill="#86e35c"/>
<polygon points="319.3,155.7 338.5,159.5 342.2,162.2 323.0,158.7" fill="#7fe35c"/>
<polygon points="323.0,158.7 342.2,162.2 345.9,164.9 326.6,161.7" fill="#78e25c"/>
<polygon points="326.6,161.7 345.9,164.9 349.5,167.5 330.3,164.7" fill="#71e25c"/>
<polygon points="330.3,164.7 349.5,167.5 353.2,170.2 334.0,167.7" fill="#6ae15c"/>
<polygon points="334.0,167.7 353.2,170.2 356.9,172.9 337.6,170.7" fill="#63e15c"/>
<polygon points="337.6,170.7 356.9,172.9 360.5,175.6 341.3,173.7" fill="#5ce05c"/>
<polygon points="341.3,173.7 360.5,175.6 364.2,178.2 345.0,176.7" fill="#5ce063"/>
<polygon points="345.0,176.7 364.2,178.2 367.9,180.9 348.7,179.8" fill="#5ce06b"/>
<polygon points="348.7,179.8 367.9,180.9 371.6,183.6 352.3,182.8" fill="#5ce072"/>
<polygon points="352.3,182.8 371.6,183.6 375.2,186.2 356.0,185.8" fill="#5ce07a"/>
<polygon points="356.0,185.8 375.2,186.2 378.9,188.9 359.7,188.8" fill="#5ce082"/>
<polygon points="359.7,188.8 378.9,188.9 382.6,191.6 363.3,191.8" fill="#5ce189"/>
<polygon points="363.3,191.8 382.6,191.6 386.2,194.2 367.0,194.8" fill="#5ce191"/>
<polygon points="367.0,194.8 386.2,194.2 389.9,196.9 370.7,197.8" fill="#5ce199"/>
<polygon points="370.7,197.8 389.9,196.9 393.6,199.6 374.3,200.8" fill="#5ce2a1"/>
<polygon points="374.3,200.8 393.6,199.6 397.2,202.2 378.0,203.9" fill="#5ce2a9"/>
<polygon points="378.0,203.9 397.2,202.2 400.9,204.9 381.7,206.9" fill="#5ce3b1"/>
<polygon points="381.7,206.9 400.9,204.9 404.6,207.6 385.3,209.9" fill="#5ce4b9"/>
<polygon points="385.3,209.9 404.6,207.6 408.2,210.2 389.0,212.9" fill="#5ce5c1"/>
<polygon points="389.0,212.9 408.2,210.2 411.9,212.9 392.7,215.9" fill="#5ce5ca"/>
<polygon points="392.7,215.9 411.9,212.9 415.6,215.6 396.4,218.9" fill="#5ce6d2"/>
<polygon points="396.4,218.9 415.6,215.6 419.2,218.2 400.0,221.9" fill="#5ce7db"/>
<polygon points="272.5,111.5 291.8,121.6 295.4,123.9 276.2,114.2" fill="#f3e35d"/>
<polygon points="276.2,114.2 295.4,123.9 299.1,126.2 279.8,116.8" fill="#f2ec5c"/>
<polygon points="279.8,116.8 299.1,126.2 302.8,128.5 283.5,119.5" fill="#eef15c"/>
<polygon points="283.5,119.5 302.8,128.5 306.4,130.9 287.2,122.2" fill="#e5ef5c"/>
<polygon points="287.2,122.2 306.4,130.9 310.1,133.2 290.8,124.8" fill="#ddee5c"/>
<polygon points="290.8,124.8 310.1,133.2 313.8,135.5 294.5,127.5" fill="#d5ec5c"/>
<polygon points="294.5,127.5 313.8,135.5 317.4,137.8 298.2,130.2" fill="#cdeb5c"/>
<polygon points="298.2,130.2 317.4,137.8 321.1,140.2 301.8,132.8" fill="#c6ea5c"/>
<polygon points="301.8,132.8 321.1,140.2 324.8,142.5 305.5,135.5" fill="#bee85c"/>
<polygon points="305.5,135.5 324.8,142.5 328.4,144.8 309.2,138.2" fill="#b7e75c"/>
<polygon points="309.2,138.2 328.4,144.8 332.1,147.1 312.9,140.9" fill="#afe65c"/>
<polygon points="312.9,140.9 332.1,147.1 335.8,149.5 316.5,143.5" fill="#a8e55c"/>
<polygon points="316.5,143.5 335.8,149.5 339.4,151.8 320.2,146.2" fill="#a1e35c"/>
<polygon points="320.2,146.2 339.4,151.8 343.1,154.1 323.9,148.9" fill="#9ae25c"/>
<polygon points="323.9,148.9 343.1,154.1 346.8,156.4 327.5,151.5" fill="#93e15c"/>
<polygon points="327.5,151.5 346.8,156.4 350.4,158.8 331.2,154.2" fill="#8de05c"/>
<polygon points="331.2,154.2 350.4,158.8 354.1,161.1 334.9,156.9" fill="#86df5c"/>
<polygon points="334.9,156.9 354.1,161.1 357.8,163.4 338.5,159.5" fill="#80de5c"/>
<polygon points="338.5,159.5 357.8,163.4 361.4,165.7 342.2,162.2" fill="#79de5c"/>
<polygon points="342.2,162.2 361.4,165.7 365.1,168.1 345.9,164.9" fill="#73dd5c"/>
<polygon points="345.9,164.9 365.1,168.1 368.8,170.4 349.5,167.5" fill="#6ddc5c"/>
<polygon points="349.5,167.5 368.8,170.4 372.4,172.7 353.2,170.2" fill="#67dc5c"/>
<polygon points="353.2,170.2 372.4,172.7 376.1,175.0 356.9,172.9" fill="#61db5c"/>
<polygon points="356.9,172.9 376.1,175.0 379.8,177.4 360.5,175.6" fill="#5cdb5d"/>
<polygon points="360.5,175.6 379.8,177.4 383.5,179.7 364.2,178.2" fill="#5cdb64"/>
<polygon points="364.2,178.2 383.5,179.7 387.1,182.0 367.9,180.9" fill="#5cdb6a"/>
<polygon points="367.9,180.9 387.1,182.0 390.8,184.3 371.6,183.6" fill="#5cdb71"/>
<polygon points="371.6,183.6 390.8,184.3 394.5,186.7 375.2,186.2" fill="#5cdb78"/>
<polygon points="375.2,186.2 394.5,186.7 398.1,189.0 378.9,188.9" fill="#5cdb7e"/>
<polygon points="378.9,188.9 398.1,189.0 401.8,191.3 382.6,191.6" fill="#5cdb85"/>
<polygon points="382.6,191.6 401.8,191.3 405.5,193.6 386.2,194.2" fill="#5cdc8c"/>
<polygon points="386.2,194.2 405.5,193.6 409.1,196.0 389.9,196.9" fill="#5cdc93"/>
<polygon points="389.9,196.9 409.1,196.0 412.8,198.3 393.6,199.6" fill="#5cdd9a"/>
<polygon points="393.6,199.6 412.8,198.3 416.5,200.6 397.2,202.2" fill="#5cdda1"/>
<polygon points="397.2,202.2 416.5,200.6 420.1,202.9 400.9,204.9" fill="#5cdea8"/>
<polygon points="400.9,204.9 420.1,202.9 423.8,205.3 404.6,207.6" fill="#5cdfaf"/>
<polygon points="404.6,207.6 423.8,205.3 427.5,207.6 408.2,210.2" fill="#5ce0b6"/>
<polygon points="408.2,210.2 427.5,207.6 431.1,209.9 411.9,212.9" fill="#5ce1be"/>
<polygon points="411.9,212.9 431.1,209.9 434.8,212.2 415.6,215.6" fill="#5ce2c6"/>
<polygon points="415.6,215.6 434.8,212.2 438.5,214.6 419.2,218.2" fill="#5ce3ce"/>
<polygon points="291.8,121.6 311.0,131.6 314.7,133.6 295.4,123.9" fill="#ebf05c"/>
<polygon points="295.4,123.9 314.7,133.6 318.3,135.6 299.1,126.2" fill="#e3ef5c"/>
<polygon points="299.1,126.2 318.3,135.6 322.0,137.5 302.8,128.5" fill="#dbed5c"/>
<polygon points="302.8,128.5 322.0,137.5 325.7,139.5 306.4,130.9" fill="#d4ec5c"/>
<polygon points="306.4,130.9 325.7,139.5 329.3,141.5 310.1,133.2" fill="#ccea5c"/>
<polygon points="310.1,133.2 329.3,141.5 333.0,143.5 313.8,135.5" fill="#c5e95c"/>
<polygon points="313.8,135.5 333.0,143.5 336.7,145.5 317.4,137.8" fill="#bee75c"/>
<polygon points="317.4,137.8 336.7,145.5 340.3,147.5 321.1,140.2" fill="#b7e65c"/>
<polygon points="321.1,140.2 340.3,147.5 344.0,149.4 324.8,142.5" fill="#b1e45c"/>
<polygon points="324.8,142.5 344.0,149.4 347.7,151.4 328.4,144.8" fill="#aae35c"/>
<polygon points="328.4,144.8 347.7,151.4 351.3,153.4 332.1,147.1" fill="#a3e25c"/>
<polygon points="332.1,147.1 351.3,153.4 355.0,155.4 335.8,149.5" fill="#9de05c"/>
<polygon points="335.8,149.5 355.0,155.4 358.7,157.4 339.4,151.8" fill="#97df5c"/>
<polygon points="339.4,151.8 358.7,157.4 362.3,159.4 343.1,154.1" fill="#91de5c"/>
<polygon points="343.1,154.1 362.3,159.4 366.0,161.3 346.8,156.4" fill="#8bdd5c"/>
<polygon points="346.8,156.4 366.0,161.3 369.7,163.3 350.4,158.8" fill="#85db5c"/>
<polygon points="350.4,158.8 369.7,163.3 373.3,165.3 354.1,161.1" fill="#7fda5c"/>
<polygon points="354.1,161.1 373.3,165.3 377.0,167.3 357.8,163.4" fill="#7ad95c"/>
<polygon points="357.8,163.4 377.0,167.3 380.7,169.3 361.4,165.7" fill="#74d95c"/>
<polygon points="361.4,165.7 380.7,169.3 384.3,171.2 365.1,168.1" fill="#6fd85c"/>
<polygon points="365.1,168.1 384.3,171.2 388.0,173.2 368.8,170.4" fill="#69d75c"/>
<polygon points="368.8,170.4 388.0,173.2 391.7,175.2 372.4,172.7" fill="#64d65c"/>
<polygon points="372.4,172.7 391.7,175.2 395.4,177.2 376.1,175.0" fill="#5fd65c"/>
<polygon points="376.1,175.0 395.4,177.2 399.0,179.2 379.8,177.4" fill="#5cd65e"/>
<polygon points="379.8,177.4 399.0,179.2 402.7,181.2 383.5,179.7" fill="#5cd564"/>
<polygon points="383.5,179.7 402.7,181.2 406.4,183.1 387.1,182.0" fill="#5cd56a"/>
<polygon points="387.1,182.0 406.4,183.1 410.0,185.1 390.8,184.3" fill="#5cd570"/>
<polygon points="390.8,184.3 410.0,185.1 413.7,187.1 394.5,186.7" fill="#5cd575"/>
<polygon points="394.5,186.7 413.7,187.1 417.4,189.1 398.1,189.0" fill="#5cd57b"/>
<polygon points="398.1,189.0 417.4,189.1 421.0,191.1 401.8,191.3" fill="#5cd681"/>
<polygon points="401.8,191.3 421.0,191.1 424.7,193.1 405.5,193.6" fill="#5cd687"/>
<polygon points="405.5,193.6 424.7,193.1 428.4,195.0 409.1,196.0" fill="#5cd78d"/>
<polygon points="409.1,196.0 428.4,195.0 432.0,197.0 412.8,198.3" fill="#5cd793"/>
<polygon points="412.8,198.3 432.0,197.0 435.7,199.0 416.5,200.6" fill="#5cd899"/>
<polygon points="416.5,200.6 435.7,199.0 439.4,201.0 420.1,202.9" fill="#5cd99f"/>
<polygon points="420.1,202.9 439.4,201.0 443.0,203.0 423.8,205.3" fill="#5cdaa6"/>
<polygon points="423.8,205.3 443.0,203.0 446.7,205.0 427.5,207.6" fill="#5cdbac"/>
<polygon points="427.5,207.6 446.7,205.0 450.4,206.9 431.1,209.9" fill="#5cdcb3"/>
<polygon points="431.1,209.9 450.4,206.9 454.0,208.9 434.8,212.2" fill="#5cddba"/>
<polygon points="434.8,212.2 454.0,208.9 457.7,210.9 438.5,214.6" fill="#5cdec1"/>
<polygon points="318.3,135.6 337.6,144.9 341.3,146.6 322.0,137.5" fill="#c9ea5c"/>
<polygon points="322.0,137.5 341.3,146.6 344.9,148.2 325.7,139.5" fill="#c3e95c"/>
<polygon points="325.7,139.5 344.9,148.2 348.6,149.8 329.3,141.5" fill="#bce75c"/>
<polygon points="329.3,141.5 348.6,149.8 352.3,151.5 333.0,143.5" fill="#b6e55c"/>
<polygon points="333.0,143.5 352.3,151.5 355.9,153.1 336.7,145.5" fill="#b0e45c"/>
<polygon points="336.7,145.5 355.9,153.1 359.6,154.8 340.3,147.5" fill="#aae25c"/>
<polygon points="340.3,147.5 359.6,154.8 363.3,156.4 344.0,149.4" fill="#a4e05c"/>
<polygon points="344.0,149.4 363.3,156.4 366.9,158.0 347.7,151.4" fill="#9edf5c"/>
<polygon points="347.7,151.4 366.9,158.0 370.6,159.7 351.3,153.4" fill="#98dd5c"/>
<polygon points="351.3,153.4 370.6,159.7 374.3,161.3 355.0,155.4" fill="#93dc5c"/>
<polygon points="355.0,155.4 374.3,161.3 377.9,163.0 358.7,157.4" fill="#8dda5c"/>
<polygon points="358.7,157.4 377.9,163.0 381.6,164.6 362.3,159.4" fill="#88d95c"/>
<polygon points="362.3,159.4 381.6,164.6 385.3,166.2 366.0,161.3" fill="#83d85c"/>
<polygon points="366.0,161.3 385.3,166.2 388.9,167.9 369.7,163.3" fill="#7ed65c"/>
<polygon points="369.7,163.3 388.9,167.9 392.6,169.5 373.3,165.3" fill="#79d55c"/>
<polygon points="373.3,165.3 392.6,169.5 396.3,171.2 377.0,167.3" fill="#74d45c"/>
<polygon points="377.0,167.3 396.3,171.2 399.9,172.8 380.7,169.3" fill="#6fd35c"/>
<polygon points="380.7,169.3 399.9,172.8 403.6,174.4 384.3,171.2" fill="#6bd25c"/>
<polygon points="384.3,171.2 403.6,174.4 407.3,176.1 388.0,173.2" fill="#66d25c"/>
<polygon points="388.0,173.2 407.3,176.1 410.9,177.7 391.7,175.2" fill="#62d15c"/>
<polygon points="391.7,175.2 410.9,177.7 414.6,179.4 395.4,177.2" fill="#5dd05c"/>
<polygon points="395.4,177.2 414.6,179.4 418.3,181.0 399.0,179.2" fill="#5cd060"/>
<polygon points="399.0,179.2 418.3,181.0 421.9,182.6 402.7,181.2" fill="#5cd064"/>
<polygon points="402.7,181.2 421.9,182.6 425.6,184.3 406.4,183.1" fill="#5ccf69"/>
<polygon points="406.4,183.1 425.6,184.3 429.3,185.9 410.0,185.1" fill="#5ccf6e"/>
<polygon points="410.0,185.1 429.3,185.9 432.9,187.6 413.7,187.1" fill="#5cd073"/>
<polygon points="413.7,187.1 432.9,187.6 436.6,189.2 417.4,189.1" fill="#5cd078"/>
<polygon points="417.4,189.1 436.6,189.2 440.3,190.8 421.0,191.1" fill="#5cd07d"/>
<polygon points="421.0,191.1 440.3,190.8 443.9,192.5 424.7,193.1" fill="#5cd182"/>
<polygon points="424.7,193.1 443.9,192.5 447.6,194.1 428.4,195.0" fill="#5cd187"/>
<polygon points="428.4,195.0 447.6,194.1 451.3,195.7 432.0,197.0" fill="#5cd28c"/>
<polygon points="432.0,197.0 451.3,195.7 454.9,197.4 435.7,199.0" fill="#5cd392"/>
<polygon points="435.7,199.0 454.9,197.4 458.6,199.0 439.4,201.0" fill="#5cd497"/>
<polygon points="439.4,201.0 458.6,199.0 462.3,200.7 443.0,203.0" fill="#5cd59d"/>
<polygon points="443.0,203.0 462.3,200.7 465.9,202.3 446.7,205.0" fill="#5cd6a2"/>
<polygon points="446.7,205.0 465.9,202.3 469.6,203.9 450.4,206.9" fill="#5cd7a8"/>
<polygon points="450.4,206.9 469.6,203.9 473.3,205.6 454.0,208.9" fill="#5cd8ae"/>
<polygon points="454.0,208.9 473.3,205.6 476.9,207.2 457.7,210.9" fill="#5cdab4"/>
<polygon points="355.9,153.1 375.2,160.8 378.8,162.1 359.6,154.8" fill="#9dde5c"/>
<polygon points="359.6,154.8 378.8,162.1 382.5,163.4 363.3,156.4" fill="#98dd5c"/>
<polygon points="363.3,156.4 382.5,163.4 386.2,164.7 366.9,158.0" fill="#93db5c"/>
<polygon points="366.9,158.0 386.2,164.7 389.8,166.0 370.6,159.7" fill="#8ed95c"/>
<polygon points="370.6,159.7 389.8,166.0 393.5,167.3 374.3,161.3" fill="#89d85c"/>
<polygon points="374.3,161.3 393.5,167.3 397.2,168.6 377.9,163.0" fill="#84d65c"/>
<polygon points="377.9,163.0 397.2,168.6 400.8,169.8 381.6,164.6" fill="#80d45c"/>
<polygon points="381.6,164.6 400.8,169.8 404.5,171.1 385.3,166.2" fill="#7bd35c"/>
<polygon points="385.3,166.2 404.5,171.1 408.2,172.4 388.9,167.9" fill="#77d25c"/>
<polygon points="388.9,167.9 408.2,172.4 411.8,173.7 392.6,169.5" fill="#73d05c"/>
<polygon points="392.6,169.5 411.8,173.7 415.5,175.0 396.3,171.2" fill="#6fcf5c"/>
<polygon points="396.3,171.2 415.5,175.0 419.2,176.3 399.9,172.8" fill="#6bce5c"/>
<polygon points="399.9,172.8 419.2,176.3 422.8,177.6 403.6,174.4" fill="#67cd5c"/>
<polygon points="403.6,174.4 422.8,177.6 426.5,178.9 407.3,176.1" fill="#63cc5c"/>
<polygon points="407.3,176.1 426.5,178.9 430.2,180.2 410.9,177.7" fill="#5fcb5c"/>
<polygon points="410.9,177.7 430.2,180.2 433.8,181.5 414.6,179.4" fill="#5ccb5d"/>
<polygon points="414.6,179.4 433.8,181.5 437.5,182.8 418.3,181.0" fill="#5cca61"/>
<polygon points="418.3,181.0 437.5,182.8 441.2,184.1 421.9,182.6" fill="#5cca65"/>
<polygon points="421.9,182.6 441.2,184.1 444.8,185.4 425.6,184.3" fill="#5cca69"/>
<polygon points="425.6,184.3 444.8,185.4 448.5,186.7 429.3,185.9" fill="#5cca6d"/>
<polygon points="429.3,185.9 448.5,186.7 452.2,188.0 432.9,187.6" fill="#5cca71"/>
<polygon points="432.9,187.6 452.2,188.0 455.8,189.3 436.6,189.2" fill="#5cca75"/>
<polygon points="436.6,189.2 455.8,189.3 459.5,190.6 440.3,190.8" fill="#5cca79"/>
<polygon points="440.3,190.8 459.5,190.6 463.2,191.9 443.9,192.5" fill="#5ccb7d"/>
<polygon points="443.9,192.5 463.2,191.9 466.8,193.2 447.6,194.1" fill="#5ccc82"/>
<polygon points="447.6,194.1 466.8,193.2 470.5,194.5 451.3,195.7" fill="#5ccc86"/>
<polygon points="451.3,195.7 470.5,194.5 474.2,195.8 454.9,197.4" fill="#5ccd8b"/>
<polygon points="454.9,197.4 474.2,195.8 477.8,197.1 458.6,199.0" fill="#5ccf8f"/>
<polygon points="458.6,199.0 477.8,197.1 481.5,198.4 462.3,200.7" fill="#5cd094"/>
<polygon points="462.3,200.7 481.5,198.4 485.2,199.7 465.9,202.3" fill="#5cd199"/>
<polygon points="465.9,202.3 485.2,199.7 488.8,201.0 469.6,203.9" fill="#5cd29e"/>
<polygon points="469.6,203.9 488.8,201.0 492.5,202.3 473.3,205.6" fill="#5cd4a3"/>
<polygon points="473.3,205.6 492.5,202.3 496.1,203.6 476.9,207.2" fill="#5cd5a9"/>
<polygon points="393.5,167.3 412.7,173.2 416.4,174.1 397.2,168.6" fill="#7cd25c"/>
<polygon points="397.2,168.6 416.4,174.1 420.1,175.1 400.8,169.8" fill="#78d05c"/>
<polygon points="400.8,169.8 420.1,175.1 423.7,176.0 404.5,171.1" fill="#74ce5c"/>
<polygon points="404.5,171.1 423.7,176.0 427.4,177.0 408.2,172.4" fill="#71cd5c"/>
<polygon points="408.2,172.4 427.4,177.0 431.1,178.0 411.8,173.7" fill="#6dcb5c"/>
<polygon points="411.8,173.7 431.1,178.0 434.7,178.9 415.5,175.0" fill="#6aca5c"/>
<polygon points="415.5,175.0 434.7,178.9 438.4,179.9 419.2,176.3" fill="#66c95c"/>
<polygon points="419.2,176.3 438.4,179.9 442.1,180.8 422.8,177.6" fill="#63c75c"/>
<polygon points="422.8,177.6 442.1,180.8 445.7,181.8 426.5,178.9" fill="#60c65c"/>
<polygon points="426.5,178.9 445.7,181.8 449.4,182.7 430.2,180.2" fill="#5dc55c"/>
<polygon points="430.2,180.2 449.4,182.7 453.1,183.7 433.8,181.5" fill="#5cc55e"/>
<polygon points="433.8,181.5 453.1,183.7 456.7,184.6 437.5,182.8" fill="#5cc462"/>
<polygon points="437.5,182.8 456.7,184.6 460.4,185.6 441.2,184.1" fill="#5cc465"/>
<polygon points="441.2,184.1 460.4,185.6 464.1,186.5 444.8,185.4" fill="#5cc368"/>
<polygon points="444.8,185.4 464.1,186.5 467.7,187.5 448.5,186.7" fill="#5cc36b"/>
<polygon points="448.5,186.7 467.7,187.5 471.4,188.4 452.2,188.0" fill="#5cc46f"/>
<polygon points="452.2,188.0 471.4,188.4 475.1,189.4 455.8,189.3" fill="#5cc472"/>
<polygon points="455.8,189.3 475.1,189.4 478.7,190.3 459.5,190.6" fill="#5cc475"/>
<polygon points="459.5,190.6 478.7,190.3 482.4,191.3 463.2,191.9" fill="#5cc579"/>
<polygon points="463.2,191.9 482.4,191.3 486.0,192.2 466.8,193.2" fill="#5cc67d"/>
<polygon points="466.8,193.2 486.0,192.2 489.7,193.2 470.5,194.5" fill="#5cc780"/>
<polygon points="470.5,194.5 489.7,193.2 493.4,194.2 474.2,195.8" fill="#5cc884"/>
<polygon points="474.2,195.8 493.4,194.2 497.0,195.1 477.8,197.1" fill="#5cc988"/>
<polygon points="477.8,197.1 497.0,195.1 500.7,196.1 481.5,198.4" fill="#5ccb8c"/>
<polygon points="481.5,198.4 500.7,196.1 504.4,197.0 485.2,199.7" fill="#5ccc90"/>
<polygon points="485.2,199.7 504.4,197.0 508.0,198.0 488.8,201.0" fill="#5cce95"/>
<polygon points="488.8,201.0 508.0,198.0 511.7,198.9 492.5,202.3" fill="#5ccf99"/>
<polygon points="492.5,202.3 511.7,198.9 515.4,199.9 496.1,203.6" fill="#5cd19e"/>
<polygon points="431.1,178.0 450.3,182.2 454.0,182.8 434.7,178.9" fill="#65c55c"/>
<polygon points="434.7,178.9 454.0,182.8 457.6,183.4 438.4,179.9" fill="#63c35c"/>
<polygon points="438.4,179.9 457.6,183.4 461.3,184.0 442.1,180.8" fill="#60c25c"/>
<polygon points="442.1,180.8 461.3,184.0 465.0,184.6 445.7,181.8" fill="#5ec15c"/>
<polygon points="445.7,181.8 465.0,184.6 468.6,185.2 449.4,182.7" fill="#5cc05d"/>
<polygon points="449.4,182.7 468.6,185.2 472.3,185.8 453.1,183.7" fill="#5cbf60"/>
<polygon points="453.1,183.7 472.3,185.8 476.0,186.4 456.7,184.6" fill="#5cbe62"/>
<polygon points="456.7,184.6 476.0,186.4 479.6,187.1 460.4,185.6" fill="#5cbd65"/>
<polygon points="460.4,185.6 479.6,187.1 483.3,187.7 464.1,186.5" fill="#5cbd67"/>
<polygon points="464.1,186.5 483.3,187.7 487.0,188.3 467.7,187.5" fill="#5cbd6a"/>
<polygon points="467.7,187.5 487.0,188.3 490.6,188.9 471.4,188.4" fill="#5cbd6d"/>
<polygon points="471.4,188.4 490.6,188.9 494.3,189.5 475.1,189.4" fill="#5cbe6f"/>
<polygon points="475.1,189.4 494.3,189.5 498.0,190.1 478.7,190.3" fill="#5cbe72"/>
<polygon points="478.7,190.3 498.0,190.1 501.6,190.7 482.4,191.3" fill="#5cbf75"/>
<polygon points="482.4,191.3 501.6,190.7 505.3,191.3 486.0,192.2" fill="#5cc078"/>
<polygon points="486.0,192.2 505.3,191.3 508.9,191.9 489.7,193.2" fill="#5cc17b"/>
<polygon points="489.7,193.2 508.9,191.9 512.6,192.5 493.4,194.2" fill="#5cc37e"/>
<polygon points="493.4,194.2 512.6,192.5 516.3,193.1 497.0,195.1" fill="#5cc481"/>
<polygon points="497.0,195.1 516.3,193.1 519.9,193.8 500.7,196.1" fill="#5cc685"/>
<polygon points="500.7,196.1 519.9,193.8 523.6,194.4 504.4,197.0" fill="#5cc788"/>
<polygon points="504.4,197.0 523.6,194.4 527.3,195.0 508.0,198.0" fill="#5cc98c"/>
<polygon points="508.0,198.0 527.3,195.0 530.9,195.6 511.7,198.9" fill="#5ccb90"/>
<polygon points="511.7,198.9 530.9,195.6 534.6,196.2 515.4,199.9" fill="#5ccd93"/>
<polygon points="472.3,185.8 491.5,188.0 495.2,188.3 476.0,186.4" fill="#5cb863"/>
<polygon points="476.0,186.4 495.2,188.3 498.9,188.5 479.6,187.1" fill="#5cb765"/>
<polygon points="479.6,187.1 498.9,188.5 502.5,188.8 483.3,187.7" fill="#5cb767"/>
<polygon points="483.3,187.7 502.5,188.8 506.2,189.1 487.0,188.3" fill="#5cb769"/>
<polygon points="487.0,188.3 506.2,189.1 509.9,189.3 490.6,188.9" fill="#5cb76b"/>
<polygon points="490.6,188.9 509.9,189.3 513.5,189.6 494.3,189.5" fill="#5cb76d"/>
<polygon points="494.3,189.5 513.5,189.6 517.2,189.9 498.0,190.1" fill="#5cb86f"/>
<polygon points="498.0,190.1 517.2,189.9 520.8,190.1 501.6,190.7" fill="#5cb971"/>
<polygon points="501.6,190.7 520.8,190.1 524.5,190.4 505.3,191.3" fill="#5cba73"/>
<polygon points="505.3,191.3 524.5,190.4 528.2,190.7 508.9,191.9" fill="#5cbc76"/>
<polygon points="508.9,191.9 528.2,190.7 531.8,190.9 512.6,192.5" fill="#5cbd78"/>
<polygon points="512.6,192.5 531.8,190.9 535.5,191.2 516.3,193.1" fill="#5cbf7b"/>
<polygon points="516.3,193.1 535.5,191.2 539.2,191.5 519.9,193.8" fill="#5cc17e"/>
<polygon points="519.9,193.8 539.2,191.5 542.8,191.7 523.6,194.4" fill="#5cc381"/>
<polygon points="523.6,194.4 542.8,191.7 546.5,192.0 527.3,195.0" fill="#5cc584"/>
<polygon points="527.3,195.0 546.5,192.0 550.2,192.3 530.9,195.6" fill="#5cc787"/>
<polygon points="530.9,195.6 550.2,192.3 553.8,192.5 534.6,196.2" fill="#5cc98a"/>
<polygon points="509.9,189.3 529.1,189.8 532.7,189.7 513.5,189.6" fill="#5cb16a"/>
<polygon points="513.5,189.6 532.7,189.7 536.4,189.6 517.2,189.9" fill="#5cb26c"/>
<polygon points="517.2,189.9 536.4,189.6 540.1,189.5 520.8,190.1" fill="#5cb36e"/>
<polygon points="520.8,190.1 540.1,189.5 543.7,189.5 524.5,190.4" fill="#5cb56f"/>
<polygon points="524.5,190.4 543.7,189.5 547.4,189.4 528.2,190.7" fill="#5cb671"/>
<polygon points="528.2,190.7 547.4,189.4 551.1,189.3 531.8,190.9" fill="#5cb873"/>
<polygon points="531.8,190.9 551.1,189.3 554.7,189.2 535.5,191.2" fill="#5cba75"/>
<polygon points="535.5,191.2 554.7,189.2 558.4,189.2 539.2,191.5" fill="#5cbc77"/>
<polygon points="539.2,191.5 558.4,189.2 562.1,189.1 542.8,191.7" fill="#5cbe7a"/>
<polygon points="542.8,191.7 562.1,189.1 565.7,189.0 546.5,192.0" fill="#5cc17c"/>
<polygon points="546.5,192.0 565.7,189.0 569.4,188.9 550.2,192.3" fill="#5cc37f"/>
<polygon points="550.2,192.3 569.4,188.9 573.1,188.9 553.8,192.5" fill="#5cc581"/>
<polygon points="547.4,189.4 566.6,188.1 570.3,187.7 551.1,189.3" fill="#5cb46f"/>
<polygon points="551.1,189.3 570.3,187.7 574.0,187.3 554.7,189.2" fill="#5cb670"/>
<polygon points="554.7,189.2 574.0,187.3 577.6,186.9 558.4,189.2" fill="#5cb872"/>
<polygon points="558.4,189.2 577.6,186.9 581.3,186.4 562.1,189.1" fill="#5cbb73"/>
<polygon points="562.1,189.1 581.3,186.4 584.9,186.0 565.7,189.0" fill="#5cbd75"/>
<polygon points="565.7,189.0 584.9,186.0 588.6,185.6 569.4,188.9" fill="#5cc077"/>
<polygon points="569.4,188.9 588.6,185.6 592.3,185.2 573.1,188.9" fill="#5cc279"/>
<polygon points="584.9,186.0 604.2,183.0 607.8,182.3 588.6,185.6" fill="#5cbe70"/>
<polygon points="588.6,185.6 607.8,182.3 611.5,181.5 592.3,185.2" fill="#5cc071"/>
<polygon points="311.0,131.6 330.2,141.7 333.9,143.3 314.7,133.6" fill="#b4c45c"/>
<polygon points="314.7,133.6 333.9,143.3 337.6,144.9 318.3,135.6" fill="#b0c45c"/>
<polygon points="330.2,141.7 349.5,151.7 353.2,153.0 333.9,143.3" fill="#a8c45c"/>
<polygon points="333.9,143.3 353.2,153.0 356.8,154.3 337.6,144.9" fill="#a4c45c"/>
<polygon points="337.6,144.9 356.8,154.3 360.5,155.6 341.3,146.6" fill="#a1c45c"/>
<polygon points="341.3,146.6 360.5,155.6 364.2,156.9 344.9,148.2" fill="#9ec45c"/>
<polygon points="344.9,148.2 364.2,156.9 367.8,158.2 348.6,149.8" fill="#9ac45c"/>
<polygon points="348.6,149.8 367.8,158.2 371.5,159.5 352.3,151.5" fill="#97c45c"/>
<polygon points="352.3,151.5 371.5,159.5 375.2,160.8 355.9,153.1" fill="#93c45c"/>
<polygon points="349.5,151.7 368.8,161.8 372.4,162.7 353.2,153.0" fill="#9cc45c"/>
<polygon points="353.2,153.0 372.4,162.7 376.1,163.7 356.8,154.3" fill="#99c45c"/>
<polygon points="356.8,154.3 376.1,163.7 379.7,164.6 360.5,155.6" fill="#96c45c"/>
<polygon points="360.5,155.6 379.7,164.6 383.4,165.6 364.2,156.9" fill="#93c45c"/>
<polygon points="364.2,156.9 383.4,165.6 387.1,166.5 367.8,158.2" fill="#90c45c"/>
<polygon points="367.8,158.2 387.1,166.5 390.7,167.5 371.5,159.5" fill="#8dc45c"/>
<polygon points="371.5,159.5 390.7,167.5 394.4,168.4 375.2,160.8" fill="#8ac45c"/>
<polygon points="375.2,160.8 394.4,168.4 398.1,169.4 378.8,162.1" fill="#87c45c"/>
<polygon points="378.8,162.1 398.1,169.4 401.7,170.3 382.5,163.4" fill="#84c45c"/>
<polygon points="382.5,163.4 401.7,170.3 405.4,171.3 386.2,164.7" fill="#81c45c"/>
<polygon points="386.2,164.7 405.4,171.3 409.1,172.2 389.8,166.0" fill="#7ec45c"/>
<polygon points="389.8,166.0 409.1,172.2 412.7,173.2 393.5,167.3" fill="#7bc45c"/>
<polygon points="368.8,161.8 388.0,171.8 391.7,172.4 372.4,162.7" fill="#90c45c"/>
<polygon points="372.4,162.7 391.7,172.4 395.3,173.0 376.1,163.7" fill="#8dc45c"/>
<polygon points="376.1,163.7 395.3,173.0 399.0,173.6 379.7,164.6" fill="#8bc45c"/>
<polygon points="379.7,164.6 399.0,173.6 402.7,174.2 383.4,165.6" fill="#88c45c"/>
<polygon points="383.4,165.6 402.7,174.2 406.3,174.8 387.1,166.5" fill="#86c45c"/>
<polygon points="387.1,166.5 406.3,174.8 410.0,175.5 390.7,167.5" fill="#83c45c"/>
<polygon points="390.7,167.5 410.0,175.5 413.7,176.1 394.4,168.4" fill="#81c45c"/>
<polygon points="394.4,168.4 413.7,176.1 417.3,176.7 398.1,169.4" fill="#7ec45c"/>
<polygon points="398.1,169.4 417.3,176.7 421.0,177.3 401.7,170.3" fill="#7cc45c"/>
<polygon points="401.7,170.3 421.0,177.3 424.7,177.9 405.4,171.3" fill="#79c45c"/>
<polygon points="405.4,171.3 424.7,177.9 428.3,178.5 409.1,172.2" fill="#77c45c"/>
<polygon points="409.1,172.2 428.3,178.5 432.0,179.1 412.7,173.2" fill="#74c45c"/>
<polygon points="412.7,173.2 432.0,179.1 435.6,179.7 416.4,174.1" fill="#72c45c"/>
<polygon points="416.4,174.1 435.6,179.7 439.3,180.3 420.1,175.1" fill="#6fc45c"/>
<polygon points="420.1,175.1 439.3,180.3 443.0,181.0 423.7,176.0" fill="#6dc45c"/>
<polygon points="423.7,176.0 443.0,181.0 446.6,181.6 427.4,177.0" fill="#6ac45c"/>
<polygon points="427.4,177.0 446.6,181.6 450.3,182.2 431.1,178.0" fill="#68c45c"/>
<polygon points="388.0,171.8 407.2,181.8 410.9,182.1 391.7,172.4" fill="#84c45c"/>
<polygon points="391.7,172.4 410.9,182.1 414.6,182.4 395.3,173.0" fill="#82c45c"/>
<polygon points="395.3,173.0 414.6,182.4 418.2,182.7 399.0,173.6" fill="#80c45c"/>
<polygon points="399.0,173.6 418.2,182.7 421.9,182.9 402.7,174.2" fill="#7ec45c"/>
<polygon points="402.7,174.2 421.9,182.9 425.6,183.2 406.3,174.8" fill="#7cc45c"/>
<polygon points="406.3,174.8 425.6,183.2 429.2,183.5 410.0,175.5" fill="#7ac45c"/>
<polygon points="410.0,175.5 429.2,183.5 432.9,183.7 413.7,176.1" fill="#78c45c"/>
<polygon points="413.7,176.1 432.9,183.7 436.6,184.0 417.3,176.7" fill="#76c45c"/>
<polygon points="417.3,176.7 436.6,184.0 440.2,184.3 421.0,177.3" fill="#74c45c"/>
<polygon points="421.0,177.3 440.2,184.3 443.9,184.5 424.7,177.9" fill="#72c45c"/>
<polygon points="424.7,177.9 443.9,184.5 447.6,184.8 428.3,178.5" fill="#70c45c"/>
<polygon points="428.3,178.5 447.6,184.8 451.2,185.1 432.0,179.1" fill="#6dc45c"/>
<polygon points="432.0,179.1 451.2,185.1 454.9,185.3 435.6,179.7" fill="#6bc45c"/>
<polygon points="435.6,179.7 454.9,185.3 458.6,185.6 439.3,180.3" fill="#69c45c"/>
<polygon points="439.3,180.3 458.6,185.6 462.2,185.9 443.0,181.0" fill="#67c45c"/>
<polygon points="443.0,181.0 462.2,185.9 465.9,186.1 446.6,181.6" fill="#65c45c"/>
<polygon points="446.6,181.6 465.9,186.1 469.5,186.4 450.3,182.2" fill="#63c45c"/>
<polygon points="450.3,182.2 469.5,186.4 473.2,186.7 454.0,182.8" fill="#61c45c"/>
<polygon points="454.0,182.8 473.2,186.7 476.9,186.9 457.6,183.4" fill="#5fc45c"/>
<polygon points="457.6,183.4 476.9,186.9 480.5,187.2 461.3,184.0" fill="#5dc45c"/>
<polygon points="461.3,184.0 480.5,187.2 484.2,187.5 465.0,184.6" fill="#5cc45d"/>
<polygon points="465.0,184.6 484.2,187.5 487.9,187.7 468.6,185.2" fill="#5cc45f"/>
<polygon points="468.6,185.2 487.9,187.7 491.5,188.0 472.3,185.8" fill="#5cc462"/>
<polygon points="407.2,181.8 426.5,191.9 430.2,191.8 410.9,182.1" fill="#78c45c"/>
<polygon points="410.9,182.1 430.2,191.8 433.8,191.7 414.6,182.4" fill="#76c45c"/>
<polygon points="414.6,182.4 433.8,191.7 437.5,191.7 418.2,182.7" fill="#75c45c"/>
<polygon points="418.2,182.7 437.5,191.7 441.2,191.6 421.9,182.9" fill="#73c45c"/>
<polygon points="421.9,182.9 441.2,191.6 444.8,191.5 425.6,183.2" fill="#72c45c"/>
<polygon points="425.6,183.2 444.8,191.5 448.5,191.4 429.2,183.5" fill="#70c45c"/>
<polygon points="429.2,183.5 448.5,191.4 452.1,191.4 432.9,183.7" fill="#6fc45c"/>
<polygon points="432.9,183.7 452.1,191.4 455.8,191.3 436.6,184.0" fill="#6dc45c"/>
<polygon points="436.6,184.0 455.8,191.3 459.5,191.2 440.2,184.3" fill="#6bc45c"/>
<polygon points="440.2,184.3 459.5,191.2 463.1,191.1 443.9,184.5" fill="#6ac45c"/>
<polygon points="443.9,184.5 463.1,191.1 466.8,191.1 447.6,184.8" fill="#68c45c"/>
<polygon points="447.6,184.8 466.8,191.1 470.5,191.0 451.2,185.1" fill="#67c45c"/>
<polygon points="451.2,185.1 470.5,191.0 474.1,190.9 454.9,185.3" fill="#65c45c"/>
<polygon points="454.9,185.3 474.1,190.9 477.8,190.8 458.6,185.6" fill="#64c45c"/>
<polygon points="458.6,185.6 477.8,190.8 481.5,190.8 462.2,185.9" fill="#62c45c"/>
<polygon points="462.2,185.9 481.5,190.8 485.1,190.7 465.9,186.1" fill="#60c45c"/>
<polygon points="465.9,186.1 485.1,190.7 488.8,190.6 469.5,186.4" fill="#5fc45c"/>
<polygon points="469.5,186.4 488.8,190.6 492.4,190.5 473.2,186.7" fill="#5dc45c"/>
<polygon points="473.2,186.7 492.4,190.5 496.1,190.5 476.9,186.9" fill="#5cc45c"/>
<polygon points="476.9,186.9 496.1,190.5 499.8,190.4 480.5,187.2" fill="#5cc45e"/>
<polygon points="480.5,187.2 499.8,190.4 503.4,190.3 484.2,187.5" fill="#5cc460"/>
<polygon points="484.2,187.5 503.4,190.3 507.1,190.2 487.9,187.7" fill="#5cc461"/>
<polygon points="487.9,187.7 507.1,190.2 510.8,190.1 491.5,188.0" fill="#5cc463"/>
<polygon points="491.5,188.0 510.8,190.1 514.4,190.1 495.2,188.3" fill="#5cc465"/>
<polygon points="495.2,188.3 514.4,190.1 518.1,190.0 498.9,188.5" fill="#5cc467"/>
<polygon points="498.9,188.5 518.1,190.0 521.8,189.9 502.5,188.8" fill="#5cc468"/>
<polygon points="502.5,188.8 521.8,189.9 525.4,189.8 506.2,189.1" fill="#5cc46a"/>
<polygon points="506.2,189.1 525.4,189.8 529.1,189.8 509.9,189.3" fill="#5cc46c"/>
<polygon points="426.5,191.9 445.8,201.9 449.4,201.5 430.2,191.8" fill="#6cc45c"/>
<polygon points="430.2,191.8 449.4,201.5 453.1,201.1 433.8,191.7" fill="#6bc45c"/>
<polygon points="433.8,191.7 453.1,201.1 456.7,200.7 437.5,191.7" fill="#6ac45c"/>
<polygon points="437.5,191.7 456.7,200.7 460.4,200.3 441.2,191.6" fill="#69c45c"/>
<polygon points="441.2,191.6 460.4,200.3 464.1,199.9 444.8,191.5" fill="#68c45c"/>
<polygon points="444.8,191.5 464.1,199.9 467.7,199.4 448.5,191.4" fill="#67c45c"/>
<polygon points="448.5,191.4 467.7,199.4 471.4,199.0 452.1,191.4" fill="#65c45c"/>
<polygon points="452.1,191.4 471.4,199.0 475.1,198.6 455.8,191.3" fill="#64c45c"/>
<polygon points="455.8,191.3 475.1,198.6 478.7,198.2 459.5,191.2" fill="#63c45c"/>
<polygon points="459.5,191.2 478.7,198.2 482.4,197.8 463.1,191.1" fill="#62c45c"/>
<polygon points="463.1,191.1 482.4,197.8 486.0,197.3 466.8,191.1" fill="#61c45c"/>
<polygon points="466.8,191.1 486.0,197.3 489.7,196.9 470.5,191.0" fill="#60c45c"/>
<polygon points="470.5,191.0 489.7,196.9 493.4,196.5 474.1,190.9" fill="#5fc45c"/>
<polygon points="474.1,190.9 493.4,196.5 497.0,196.1 477.8,190.8" fill="#5ec45c"/>
<polygon points="477.8,190.8 497.0,196.1 500.7,195.7 481.5,190.8" fill="#5dc45c"/>
<polygon points="481.5,190.8 500.7,195.7 504.4,195.2 485.1,190.7" fill="#5cc45c"/>
<polygon points="485.1,190.7 504.4,195.2 508.0,194.8 488.8,190.6" fill="#5cc45e"/>
<polygon points="488.8,190.6 508.0,194.8 511.7,194.4 492.4,190.5" fill="#5cc45f"/>
<polygon points="492.4,190.5 511.7,194.4 515.3,194.0 496.1,190.5" fill="#5cc460"/>
<polygon points="496.1,190.5 515.3,194.0 519.0,193.6 499.8,190.4" fill="#5cc461"/>
<polygon points="499.8,190.4 519.0,193.6 522.7,193.1 503.4,190.3" fill="#5cc462"/>
<polygon points="503.4,190.3 522.7,193.1 526.3,192.7 507.1,190.2" fill="#5cc464"/>
<polygon points="507.1,190.2 526.3,192.7 530.0,192.3 510.8,190.1" fill="#5cc465"/>
<polygon points="510.8,190.1 530.0,192.3 533.7,191.9 514.4,190.1" fill="#5cc466"/>
<polygon points="514.4,190.1 533.7,191.9 537.3,191.5 518.1,190.0" fill="#5cc467"/>
<polygon points="518.1,190.0 537.3,191.5 541.0,191.0 521.8,189.9" fill="#5cc468"/>
<polygon points="521.8,189.9 541.0,191.0 544.7,190.6 525.4,189.8" fill="#5cc46a"/>
<polygon points="525.4,189.8 544.7,190.6 548.3,190.2 529.1,189.8" fill="#5cc46b"/>
<polygon points="529.1,189.8 548.3,190.2 552.0,189.8 532.7,189.7" fill="#5cc46c"/>
<polygon points="532.7,189.7 552.0,189.8 555.6,189.4 536.4,189.6" fill="#5cc46d"/>
<polygon points="536.4,189.6 555.6,189.4 559.3,188.9 540.1,189.5" fill="#5cc46e"/>
<polygon points="540.1,189.5 559.3,188.9 563.0,188.5 543.7,189.5" fill="#5cc470"/>
<polygon points="543.7,189.5 563.0,188.5 566.6,188.1 547.4,189.4" fill="#5cc471"/>
<polygon points="445.8,201.9 465.0,212.0 468.7,211.2 449.4,201.5" fill="#60c45c"/>
<polygon points="449.4,201.5 468.7,211.2 472.3,210.5 453.1,201.1" fill="#5fc45c"/>
<polygon points="453.1,201.1 472.3,210.5 476.0,209.7 456.7,200.7" fill="#5fc45c"/>
<polygon points="456.7,200.7 476.0,209.7 479.7,209.0 460.4,200.3" fill="#5ec45c"/>
<polygon points="460.4,200.3 479.7,209.0 483.3,208.2 464.1,199.9" fill="#5ec45c"/>
<polygon points="464.1,199.9 483.3,208.2 487.0,207.4 467.7,199.4" fill="#5dc45c"/>
<polygon points="467.7,199.4 487.0,207.4 490.6,206.7 471.4,199.0" fill="#5cc45c"/>
<polygon points="471.4,199.0 490.6,206.7 494.3,205.9 475.1,198.6" fill="#5cc45c"/>
<polygon points="475.1,198.6 494.3,205.9 498.0,205.1 478.7,198.2" fill="#5cc45d"/>
<polygon points="478.7,198.2 498.0,205.1 501.6,204.4 482.4,197.8" fill="#5cc45e"/>
<polygon points="482.4,197.8 501.6,204.4 505.3,203.6 486.0,197.3" fill="#5cc45e"/>
<polygon points="486.0,197.3 505.3,203.6 509.0,202.8 489.7,196.9" fill="#5cc45f"/>
<polygon points="489.7,196.9 509.0,202.8 512.6,202.1 493.4,196.5" fill="#5cc460"/>
<polygon points="493.4,196.5 512.6,202.1 516.3,201.3 497.0,196.1" fill="#5cc460"/>
<polygon points="497.0,196.1 516.3,201.3 519.9,200.6 500.7,195.7" fill="#5cc461"/>
<polygon points="500.7,195.7 519.9,200.6 523.6,199.8 504.4,195.2" fill="#5cc462"/>
<polygon points="504.4,195.2 523.6,199.8 527.3,199.0 508.0,194.8" fill="#5cc462"/>
<polygon points="508.0,194.8 527.3,199.0 530.9,198.3 511.7,194.4" fill="#5cc463"/>
<polygon points="511.7,194.4 530.9,198.3 534.6,197.5 515.3,194.0" fill="#5cc464"/>
<polygon points="515.3,194.0 534.6,197.5 538.2,196.8 519.0,193.6" fill="#5cc464"/>
<polygon points="519.0,193.6 538.2,196.8 541.9,196.0 522.7,193.1" fill="#5cc465"/>
<polygon points="522.7,193.1 541.9,196.0 545.6,195.2 526.3,192.7" fill="#5cc466"/>
<polygon points="526.3,192.7 545.6,195.2 549.2,194.5 530.0,192.3" fill="#5cc466"/>
<polygon points="530.0,192.3 549.2,194.5 552.9,193.7 533.7,191.9" fill="#5cc467"/>
<polygon points="533.7,191.9 552.9,193.7 556.6,192.9 537.3,191.5" fill="#5cc468"/>
<polygon points="537.3,191.5 556.6,192.9 560.2,192.2 541.0,191.0" fill="#5cc469"/>
<polygon points="541.0,191.0 560.2,192.2 563.9,191.4 544.7,190.6" fill="#5cc469"/>
<polygon points="544.7,190.6 563.9,191.4 567.5,190.6 548.3,190.2" fill="#5cc46a"/>
<polygon points="548.3,190.2 567.5,190.6 571.2,189.9 552.0,189.8" fill="#5cc46b"/>
<polygon points="552.0,189.8 571.2,189.9 574.9,189.1 555.6,189.4" fill="#5cc46b"/>
<polygon points="555.6,189.4 574.9,189.1 578.5,188.4 559.3,188.9" fill="#5cc46c"/>
<polygon points="559.3,188.9 578.5,188.4 582.2,187.6 563.0,188.5" fill="#5cc46d"/>
<polygon points="563.0,188.5 582.2,187.6 585.9,186.8 566.6,188.1" fill="#5cc46d"/>
<polygon points="566.6,188.1 585.9,186.8 589.5,186.1 570.3,187.7" fill="#5cc46e"/>
<polygon points="570.3,187.7 589.5,186.1 593.2,185.3 574.0,187.3" fill="#5cc46f"/>
<polygon points="574.0,187.3 593.2,185.3 596.9,184.6 577.6,186.9" fill="#5cc46f"/>
<polygon points="577.6,186.9 596.9,184.6 600.5,183.8 581.3,186.4" fill="#5cc470"/>
<polygon points="581.3,186.4 600.5,183.8 604.2,183.0 584.9,186.0" fill="#5cc471"/>
<polygon points="465.0,212.0 484.2,222.1 487.9,220.9 468.7,211.2" fill="#589d5e"/>
<polygon points="468.7,211.2 487.9,220.9 491.6,219.8 472.3,210.5" fill="#589d5e"/>
<polygon points="472.3,210.5 491.6,219.8 495.2,218.7 476.0,209.7" fill="#589c5e"/>
<polygon points="476.0,209.7 495.2,218.7 498.9,217.6 479.7,209.0" fill="#589c5e"/>
<polygon points="479.7,209.0 498.9,217.6 502.6,216.5 483.3,208.2" fill="#589b5e"/>
<polygon points="483.3,208.2 502.6,216.5 506.2,215.4 487.0,207.4" fill="#589b5e"/>
<polygon points="487.0,207.4 506.2,215.4 509.9,214.3 490.6,206.7" fill="#589b5e"/>
<polygon points="490.6,206.7 509.9,214.3 513.5,213.2 494.3,205.9" fill="#589a5e"/>
<polygon points="494.3,205.9 513.5,213.2 517.2,212.1 498.0,205.1" fill="#589a5e"/>
<polygon points="498.0,205.1 517.2,212.1 520.9,211.0 501.6,204.4" fill="#57995e"/>
<polygon points="501.6,204.4 520.9,211.0 524.5,209.9 505.3,203.6" fill="#57995e"/>
<polygon points="505.3,203.6 524.5,209.9 528.2,208.8 509.0,202.8" fill="#57995e"/>
<polygon points="509.0,202.8 528.2,208.8 531.9,207.7 512.6,202.1" fill="#57985e"/>
<polygon points="512.6,202.1 531.9,207.7 535.5,206.6 516.3,201.3" fill="#57985e"/>
<polygon points="516.3,201.3 535.5,206.6 539.2,205.5 519.9,200.6" fill="#57985e"/>
<polygon points="519.9,200.6 539.2,205.5 542.8,204.4 523.6,199.8" fill="#57975e"/>
<polygon points="523.6,199.8 542.8,204.4 546.5,203.3 527.3,199.0" fill="#57975e"/>
<polygon points="527.3,199.0 546.5,203.3 550.2,202.1 530.9,198.3" fill="#57965e"/>
<polygon points="530.9,198.3 550.2,202.1 553.8,201.0 534.6,197.5" fill="#57965e"/>
<polygon points="534.6,197.5 553.8,201.0 557.5,199.9 538.2,196.8" fill="#57965e"/>
<polygon points="538.2,196.8 557.5,199.9 561.1,198.8 541.9,196.0" fill="#57955e"/>
<polygon points="541.9,196.0 561.1,198.8 564.8,197.7 545.6,195.2" fill="#57955e"/>
<polygon points="545.6,195.2 564.8,197.7 568.5,196.6 549.2,194.5" fill="#57945e"/>
<polygon points="549.2,194.5 568.5,196.6 572.1,195.5 552.9,193.7" fill="#57945e"/>
<polygon points="552.9,193.7 572.1,195.5 575.8,194.4 556.6,192.9" fill="#57945e"/>
<polygon points="556.6,192.9 575.8,194.4 579.5,193.3 560.2,192.2" fill="#57935e"/>
<polygon points="560.2,192.2 579.5,193.3 583.1,192.2 563.9,191.4" fill="#57935e"/>
<polygon points="563.9,191.4 583.1,192.2 586.8,191.1 567.5,190.6" fill="#57935e"/>
<polygon points="567.5,190.6 586.8,191.1 590.4,190.0 571.2,189.9" fill="#57925e"/>
<polygon points="571.2,189.9 590.4,190.0 594.1,188.9 574.9,189.1" fill="#57925e"/>
<polygon points="574.9,189.1 594.1,188.9 597.8,187.8 578.5,188.4" fill="#57925e"/>
<polygon points="578.5,188.4 597.8,187.8 601.4,186.7 582.2,187.6" fill="#57915e"/>
<polygon points="582.2,187.6 601.4,186.7 605.1,185.6 585.9,186.8" fill="#57915e"/>
<polygon points="585.9,186.8 605.1,185.6 608.8,184.5 589.5,186.1" fill="#57905e"/>
<polygon points="589.5,186.1 608.8,184.5 612.4,183.4 593.2,185.3" fill="#56905e"/>
<polygon points="593.2,185.3 612.4,183.4 616.1,182.2 596.9,184.6" fill="#56905e"/>
<polygon points="596.9,184.6 616.1,182.2 619.7,181.1 600.5,183.8" fill="#56905e"/>
<polygon points="600.5,183.8 619.7,181.1 623.4,180.0 604.2,183.0" fill="#568f5e"/>
<polygon points="604.2,183.0 623.4,180.0 627.1,178.9 607.8,182.3" fill="#568f5e"/>
<polygon points="607.8,182.3 627.1,178.9 630.7,177.8 611.5,181.5" fill="#568f5e"/>
<polygon points="484.2,222.1 503.5,232.1 507.2,230.7 487.9,220.9" fill="#58a067"/>
<polygon points="487.9,220.9 507.2,230.7 510.8,229.2 491.6,219.8" fill="#589f67"/>
<polygon points="491.6,219.8 510.8,229.2 514.5,227.8 495.2,218.7" fill="#589f66"/>
<polygon points="495.2,218.7 514.5,227.8 518.1,226.3 498.9,217.6" fill="#589f66"/>
<polygon points="498.9,217.6 518.1,226.3 521.8,224.9 502.6,216.5" fill="#589e66"/>
<polygon points="502.6,216.5 521.8,224.9 525.5,223.4 506.2,215.4" fill="#589e65"/>
<polygon points="506.2,215.4 525.5,223.4 529.1,222.0 509.9,214.3" fill="#589d65"/>
<polygon points="509.9,214.3 529.1,222.0 532.8,220.5 513.5,213.2" fill="#589d65"/>
<polygon points="513.5,213.2 532.8,220.5 536.5,219.1 517.2,212.1" fill="#589d64"/>
<polygon points="517.2,212.1 536.5,219.1 540.1,217.6 520.9,211.0" fill="#589c64"/>
<polygon points="520.9,211.0 540.1,217.6 543.8,216.2 524.5,209.9" fill="#589c64"/>
<polygon points="524.5,209.9 543.8,216.2 547.4,214.7 528.2,208.8" fill="#589c63"/>
<polygon points="528.2,208.8 547.4,214.7 551.1,213.3 531.9,207.7" fill="#589b63"/>
<polygon points="531.9,207.7 551.1,213.3 554.8,211.8 535.5,206.6" fill="#589b63"/>
<polygon points="535.5,206.6 554.8,211.8 558.4,210.4 539.2,205.5" fill="#589a62"/>
<polygon points="539.2,205.5 558.4,210.4 562.1,208.9 542.8,204.4" fill="#589a62"/>
<polygon points="542.8,204.4 562.1,208.9 565.7,207.5 546.5,203.3" fill="#579962"/>
<polygon points="546.5,203.3 565.7,207.5 569.4,206.0 550.2,202.1" fill="#579961"/>
<polygon points="550.2,202.1 569.4,206.0 573.1,204.6 553.8,201.0" fill="#579961"/>
<polygon points="553.8,201.0 573.1,204.6 576.7,203.1 557.5,199.9" fill="#579861"/>
<polygon points="557.5,199.9 576.7,203.1 580.4,201.7 561.1,198.8" fill="#579860"/>
<polygon points="561.1,198.8 580.4,201.7 584.0,200.2 564.8,197.7" fill="#579760"/>
<polygon points="564.8,197.7 584.0,200.2 587.7,198.8 568.5,196.6" fill="#579760"/>
<polygon points="568.5,196.6 587.7,198.8 591.4,197.3 572.1,195.5" fill="#57975f"/>
<polygon points="572.1,195.5 591.4,197.3 595.0,195.9 575.8,194.4" fill="#57965f"/>
<polygon points="575.8,194.4 595.0,195.9 598.7,194.4 579.5,193.3" fill="#57965f"/>
<polygon points="579.5,193.3 598.7,194.4 602.4,193.0 583.1,192.2" fill="#57955f"/>
<polygon points="583.1,192.2 602.4,193.0 606.0,191.5 586.8,191.1" fill="#57955e"/>
<polygon points="586.8,191.1 606.0,191.5 609.7,190.1 590.4,190.0" fill="#57955e"/>
<polygon points="590.4,190.0 609.7,190.1 613.3,188.6 594.1,188.9" fill="#57945e"/>
<polygon points="594.1,188.9 613.3,188.6 617.0,187.2 597.8,187.8" fill="#57945d"/>
<polygon points="597.8,187.8 617.0,187.2 620.7,185.7 601.4,186.7" fill="#57935d"/>
<polygon points="601.4,186.7 620.7,185.7 624.3,184.3 605.1,185.6" fill="#57935d"/>
<polygon points="605.1,185.6 624.3,184.3 628.0,182.8 608.8,184.5" fill="#57935c"/>
<polygon points="608.8,184.5 628.0,182.8 631.6,181.4 612.4,183.4" fill="#57925c"/>
<polygon points="612.4,183.4 631.6,181.4 635.3,179.9 616.1,182.2" fill="#57925c"/>
<polygon points="616.1,182.2 635.3,179.9 639.0,178.5 619.7,181.1" fill="#57915c"/>
<polygon points="619.7,181.1 639.0,178.5 642.6,177.0 623.4,180.0" fill="#57915b"/>
<polygon points="623.4,180.0 642.6,177.0 646.3,175.6 627.1,178.9" fill="#57915b"/>
<polygon points="627.1,178.9 646.3,175.6 650.0,174.1 630.7,177.8" fill="#57905b"/>
<polygon points="503.5,232.1 522.8,242.1 526.4,240.4 507.2,230.7" fill="#58a372"/>
<polygon points="507.2,230.7 526.4,240.4 530.1,238.6 510.8,229.2" fill="#58a271"/>
<polygon points="510.8,229.2 530.1,238.6 533.7,236.8 514.5,227.8" fill="#58a270"/>
<polygon points="514.5,227.8 533.7,236.8 537.4,235.0 518.1,226.3" fill="#58a26f"/>
<polygon points="518.1,226.3 537.4,235.0 541.1,233.2 521.8,224.9" fill="#58a16e"/>
<polygon points="521.8,224.9 541.1,233.2 544.7,231.4 525.5,223.4" fill="#58a16e"/>
<polygon points="525.5,223.4 544.7,231.4 548.4,229.6 529.1,222.0" fill="#58a16d"/>
<polygon points="529.1,222.0 548.4,229.6 552.0,227.8 532.8,220.5" fill="#58a06c"/>
<polygon points="532.8,220.5 552.0,227.8 555.7,226.0 536.5,219.1" fill="#58a06b"/>
<polygon points="536.5,219.1 555.7,226.0 559.4,224.2 540.1,217.6" fill="#589f6b"/>
<polygon points="540.1,217.6 559.4,224.2 563.0,222.4 543.8,216.2" fill="#589f6a"/>
<polygon points="543.8,216.2 563.0,222.4 566.7,220.6 547.4,214.7" fill="#589f69"/>
<polygon points="547.4,214.7 566.7,220.6 570.3,218.9 551.1,213.3" fill="#589e68"/>
<polygon points="551.1,213.3 570.3,218.9 574.0,217.1 554.8,211.8" fill="#589e68"/>
<polygon points="554.8,211.8 574.0,217.1 577.7,215.3 558.4,210.4" fill="#589d67"/>
<polygon points="558.4,210.4 577.7,215.3 581.3,213.5 562.1,208.9" fill="#589d66"/>
<polygon points="562.1,208.9 581.3,213.5 585.0,211.7 565.7,207.5" fill="#589c66"/>
<polygon points="565.7,207.5 585.0,211.7 588.6,209.9 569.4,206.0" fill="#589c65"/>
<polygon points="569.4,206.0 588.6,209.9 592.3,208.1 573.1,204.6" fill="#589c64"/>
<polygon points="573.1,204.6 592.3,208.1 596.0,206.3 576.7,203.1" fill="#589b63"/>
<polygon points="576.7,203.1 596.0,206.3 599.6,204.5 580.4,201.7" fill="#589b63"/>
<polygon points="580.4,201.7 599.6,204.5 603.3,202.7 584.0,200.2" fill="#589a62"/>
<polygon points="584.0,200.2 603.3,202.7 606.9,200.9 587.7,198.8" fill="#589a61"/>
<polygon points="587.7,198.8 606.9,200.9 610.6,199.1 591.4,197.3" fill="#579961"/>
<polygon points="591.4,197.3 610.6,199.1 614.3,197.4 595.0,195.9" fill="#579960"/>
<polygon points="595.0,195.9 614.3,197.4 617.9,195.6 598.7,194.4" fill="#57995f"/>
<polygon points="598.7,194.4 617.9,195.6 621.6,193.8 602.4,193.0" fill="#57985f"/>
<polygon points="602.4,193.0 621.6,193.8 625.2,192.0 606.0,191.5" fill="#57985e"/>
<polygon points="606.0,191.5 625.2,192.0 628.9,190.2 609.7,190.1" fill="#57975e"/>
<polygon points="609.7,190.1 628.9,190.2 632.6,188.4 613.3,188.6" fill="#57975d"/>
<polygon points="613.3,188.6 632.6,188.4 636.2,186.6 617.0,187.2" fill="#57965c"/>
<polygon points="617.0,187.2 636.2,186.6 639.9,184.8 620.7,185.7" fill="#57965c"/>
<polygon points="620.7,185.7 639.9,184.8 643.6,183.0 624.3,184.3" fill="#57965b"/>
<polygon points="624.3,184.3 643.6,183.0 647.2,181.2 628.0,182.8" fill="#57955a"/>
<polygon points="628.0,182.8 647.2,181.2 650.9,179.4 631.6,181.4" fill="#57955a"/>
<polygon points="631.6,181.4 650.9,179.4 654.5,177.6 635.3,179.9" fill="#579459"/>
<polygon points="635.3,179.9 654.5,177.6 658.2,175.9 639.0,178.5" fill="#579459"/>
<polygon points="639.0,178.5 658.2,175.9 661.9,174.1 642.6,177.0" fill="#579358"/>
<polygon points="642.6,177.0 661.9,174.1 665.5,172.3 646.3,175.6" fill="#579357"/>
<polygon points="646.3,175.6 665.5,172.3 669.2,170.5 650.0,174.1" fill="#579357"/>
<polygon points="522.8,242.1 542.0,252.2 545.7,250.1 526.4,240.4" fill="#58a67d"/>
<polygon points="526.4,240.4 545.7,250.1 549.3,247.9 530.1,238.6" fill="#58a67b"/>
<polygon points="530.1,238.6 549.3,247.9 553.0,245.8 533.7,236.8" fill="#58a57a"/>
<polygon points="533.7,236.8 553.0,245.8 556.6,243.7 537.4,235.0" fill="#58a579"/>
<polygon points="537.4,235.0 556.6,243.7 560.3,241.5 541.1,233.2" fill="#58a578"/>
<polygon points="541.1,233.2 560.3,241.5 564.0,239.4 544.7,231.4" fill="#58a476"/>
<polygon points="544.7,231.4 564.0,239.4 567.6,237.3 548.4,229.6" fill="#58a475"/>
<polygon points="548.4,229.6 567.6,237.3 571.3,235.1 552.0,227.8" fill="#58a374"/>
<polygon points="552.0,227.8 571.3,235.1 574.9,233.0 555.7,226.0" fill="#58a373"/>
<polygon points="555.7,226.0 574.9,233.0 578.6,230.9 559.4,224.2" fill="#58a372"/>
<polygon points="559.4,224.2 578.6,230.9 582.3,228.7 563.0,222.4" fill="#58a271"/>
<polygon points="563.0,222.4 582.3,228.7 585.9,226.6 566.7,220.6" fill="#58a26f"/>
<polygon points="566.7,220.6 585.9,226.6 589.6,224.4 570.3,218.9" fill="#58a16e"/>
<polygon points="570.3,218.9 589.6,224.4 593.2,222.3 574.0,217.1" fill="#58a16d"/>
<polygon points="574.0,217.1 593.2,222.3 596.9,220.2 577.7,215.3" fill="#58a16c"/>
<polygon points="577.7,215.3 596.9,220.2 600.6,218.0 581.3,213.5" fill="#58a06b"/>
<polygon points="581.3,213.5 600.6,218.0 604.2,215.9 585.0,211.7" fill="#58a06a"/>
<polygon points="585.0,211.7 604.2,215.9 607.9,213.8 588.6,209.9" fill="#589f69"/>
<polygon points="588.6,209.9 607.9,213.8 611.5,211.6 592.3,208.1" fill="#589f67"/>
<polygon points="592.3,208.1 611.5,211.6 615.2,209.5 596.0,206.3" fill="#589e66"/>
<polygon points="596.0,206.3 615.2,209.5 618.9,207.4 599.6,204.5" fill="#589e65"/>
<polygon points="599.6,204.5 618.9,207.4 622.5,205.2 603.3,202.7" fill="#589e64"/>
<polygon points="603.3,202.7 622.5,205.2 626.2,203.1 606.9,200.9" fill="#589d63"/>
<polygon points="606.9,200.9 626.2,203.1 629.8,201.0 610.6,199.1" fill="#589d62"/>
<polygon points="610.6,199.1 629.8,201.0 633.5,198.8 614.3,197.4" fill="#589c61"/>
<polygon points="614.3,197.4 633.5,198.8 637.2,196.7 617.9,195.6" fill="#589c60"/>
<polygon points="617.9,195.6 637.2,196.7 640.8,194.6 621.6,193.8" fill="#589b5f"/>
<polygon points="621.6,193.8 640.8,194.6 644.5,192.4 625.2,192.0" fill="#589b5e"/>
<polygon points="625.2,192.0 644.5,192.4 648.1,190.3 628.9,190.2" fill="#589a5d"/>
<polygon points="628.9,190.2 648.1,190.3 651.8,188.1 632.6,188.4" fill="#589a5c"/>
<polygon points="632.6,188.4 651.8,188.1 655.5,186.0 636.2,186.6" fill="#57995b"/>
<polygon points="636.2,186.6 655.5,186.0 659.1,183.9 639.9,184.8" fill="#57995a"/>
<polygon points="639.9,184.8 659.1,183.9 662.8,181.7 643.6,183.0" fill="#579959"/>
<polygon points="643.6,183.0 662.8,181.7 666.4,179.6 647.2,181.2" fill="#579858"/>
<polygon points="647.2,181.2 666.4,179.6 670.1,177.5 650.9,179.4" fill="#579857"/>
<polygon points="650.9,179.4 670.1,177.5 673.8,175.3 654.5,177.6" fill="#589757"/>
<polygon points="654.5,177.6 673.8,175.3 677.4,173.2 658.2,175.9" fill="#599757"/>
<polygon points="658.2,175.9 677.4,173.2 681.1,171.1 661.9,174.1" fill="#5a9657"/>
<polygon points="661.9,174.1 681.1,171.1 684.7,168.9 665.5,172.3" fill="#5a9657"/>
<polygon points="665.5,172.3 684.7,168.9 688.4,166.8 669.2,170.5" fill="#5b9557"/>
<polygon points="542.0,252.2 561.2,262.2 564.9,259.8 545.7,250.1" fill="#59a989"/>
<polygon points="545.7,250.1 564.9,259.8 568.6,257.3 549.3,247.9" fill="#59a987"/>
<polygon points="549.3,247.9 568.6,257.3 572.2,254.8 553.0,245.8" fill="#59a985"/>
<polygon points="553.0,245.8 572.2,254.8 575.9,252.3 556.6,243.7" fill="#59a883"/>
<polygon points="556.6,243.7 575.9,252.3 579.5,249.9 560.3,241.5" fill="#59a882"/>
<polygon points="560.3,241.5 579.5,249.9 583.2,247.4 564.0,239.4" fill="#59a880"/>
<polygon points="564.0,239.4 583.2,247.4 586.9,244.9 567.6,237.3" fill="#58a77e"/>
<polygon points="567.6,237.3 586.9,244.9 590.5,242.4 571.3,235.1" fill="#58a77d"/>
<polygon points="571.3,235.1 590.5,242.4 594.2,239.9 574.9,233.0" fill="#58a67b"/>
<polygon points="574.9,233.0 594.2,239.9 597.8,237.5 578.6,230.9" fill="#58a679"/>
<polygon points="578.6,230.9 597.8,237.5 601.5,235.0 582.3,228.7" fill="#58a678"/>
<polygon points="582.3,228.7 601.5,235.0 605.2,232.5 585.9,226.6" fill="#58a576"/>
<polygon points="585.9,226.6 605.2,232.5 608.8,230.0 589.6,224.4" fill="#58a575"/>
<polygon points="589.6,224.4 608.8,230.0 612.5,227.6 593.2,222.3" fill="#58a473"/>
<polygon points="593.2,222.3 612.5,227.6 616.1,225.1 596.9,220.2" fill="#58a471"/>
<polygon points="596.9,220.2 616.1,225.1 619.8,222.6 600.6,218.0" fill="#58a470"/>
<polygon points="600.6,218.0 619.8,222.6 623.5,220.1 604.2,215.9" fill="#58a36e"/>
<polygon points="604.2,215.9 623.5,220.1 627.1,217.6 607.9,213.8" fill="#58a36d"/>
<polygon points="607.9,213.8 627.1,217.6 630.8,215.2 611.5,211.6" fill="#58a26b"/>
<polygon points="611.5,211.6 630.8,215.2 634.4,212.7 615.2,209.5" fill="#58a26a"/>
<polygon points="615.2,209.5 634.4,212.7 638.1,210.2 618.9,207.4" fill="#58a168"/>
<polygon points="618.9,207.4 638.1,210.2 641.8,207.7 622.5,205.2" fill="#58a167"/>
<polygon points="622.5,205.2 641.8,207.7 645.4,205.3 626.2,203.1" fill="#58a065"/>
<polygon points="626.2,203.1 645.4,205.3 649.1,202.8 629.8,201.0" fill="#58a064"/>
<polygon points="629.8,201.0 649.1,202.8 652.7,200.3 633.5,198.8" fill="#58a062"/>
<polygon points="633.5,198.8 652.7,200.3 656.4,197.8 637.2,196.7" fill="#589f61"/>
<polygon points="637.2,196.7 656.4,197.8 660.1,195.3 640.8,194.6" fill="#589f5f"/>
<polygon points="640.8,194.6 660.1,195.3 663.7,192.9 644.5,192.4" fill="#589e5e"/>
<polygon points="644.5,192.4 663.7,192.9 667.4,190.4 648.1,190.3" fill="#589e5d"/>
<polygon points="648.1,190.3 667.4,190.4 671.0,187.9 651.8,188.1" fill="#589d5b"/>
<polygon points="651.8,188.1 671.0,187.9 674.7,185.4 655.5,186.0" fill="#589d5a"/>
<polygon points="655.5,186.0 674.7,185.4 678.4,182.9 659.1,183.9" fill="#589c59"/>
<polygon points="659.1,183.9 678.4,182.9 682.0,180.5 662.8,181.7" fill="#589c58"/>
<polygon points="662.8,181.7 682.0,180.5 685.7,178.0 666.4,179.6" fill="#599b58"/>
<polygon points="666.4,179.6 685.7,178.0 689.3,175.5 670.1,177.5" fill="#5a9b58"/>
<polygon points="670.1,177.5 689.3,175.5 693.0,173.0 673.8,175.3" fill="#5b9a58"/>
<polygon points="673.8,175.3 693.0,173.0 696.6,170.6 677.4,173.2" fill="#5c9a58"/>
<polygon points="677.4,173.2 696.6,170.6 700.3,168.1 681.1,171.1" fill="#5e9957"/>
<polygon points="681.1,171.1 700.3,168.1 704.0,165.6 684.7,168.9" fill="#5f9957"/>
<polygon points="684.7,168.9 704.0,165.6 707.6,163.1 688.4,166.8" fill="#609957"/>
<polygon points="561.2,262.2 580.5,272.3 584.2,269.5 564.9,259.8" fill="#59ad96"/>
<polygon points="564.9,259.8 584.2,269.5 587.8,266.7 568.6,257.3" fill="#59ad93"/>
<polygon points="568.6,257.3 587.8,266.7 591.5,263.8 572.2,254.8" fill="#59ac91"/>
<polygon points="572.2,254.8 591.5,263.8 595.1,261.0 575.9,252.3" fill="#59ac8f"/>
<polygon points="575.9,252.3 595.1,261.0 598.8,258.2 579.5,249.9" fill="#59ac8d"/>
<polygon points="579.5,249.9 598.8,258.2 602.5,255.4 583.2,247.4" fill="#59ab8a"/>
<polygon points="583.2,247.4 602.5,255.4 606.1,252.6 586.9,244.9" fill="#59ab88"/>
<polygon points="586.9,244.9 606.1,252.6 609.8,249.7 590.5,242.4" fill="#59aa86"/>
<polygon points="590.5,242.4 609.8,249.7 613.4,246.9 594.2,239.9" fill="#59aa84"/>
<polygon points="594.2,239.9 613.4,246.9 617.1,244.1 597.8,237.5" fill="#59aa82"/>
<polygon points="597.8,237.5 617.1,244.1 620.7,241.3 601.5,235.0" fill="#59a980"/>
<polygon points="601.5,235.0 620.7,241.3 624.4,238.4 605.2,232.5" fill="#59a97d"/>
<polygon points="605.2,232.5 624.4,238.4 628.1,235.6 608.8,230.0" fill="#59a87b"/>
<polygon points="608.8,230.0 628.1,235.6 631.7,232.8 612.5,227.6" fill="#59a879"/>
<polygon points="612.5,227.6 631.7,232.8 635.4,230.0 616.1,225.1" fill="#59a877"/>
<polygon points="616.1,225.1 635.4,230.0 639.0,227.2 619.8,222.6" fill="#58a775"/>
<polygon points="619.8,222.6 639.0,227.2 642.7,224.3 623.5,220.1" fill="#58a773"/>
<polygon points="623.5,220.1 642.7,224.3 646.4,221.5 627.1,217.6" fill="#58a671"/>
<polygon points="627.1,217.6 646.4,221.5 650.0,218.7 630.8,215.2" fill="#58a66f"/>
<polygon points="630.8,215.2 650.0,218.7 653.7,215.9 634.4,212.7" fill="#58a56d"/>
<polygon points="634.4,212.7 653.7,215.9 657.3,213.1 638.1,210.2" fill="#58a56b"/>
<polygon points="638.1,210.2 657.3,213.1 661.0,210.2 641.8,207.7" fill="#58a569"/>
<polygon points="641.8,207.7 661.0,210.2 664.7,207.4 645.4,205.3" fill="#58a467"/>
<polygon points="645.4,205.3 664.7,207.4 668.3,204.6 649.1,202.8" fill="#58a465"/>
<polygon points="649.1,202.8 668.3,204.6 672.0,201.8 652.7,200.3" fill="#58a363"/>
<polygon points="652.7,200.3 672.0,201.8 675.6,198.9 656.4,197.8" fill="#58a362"/>
<polygon points="656.4,197.8 675.6,198.9 679.3,196.1 660.1,195.3" fill="#58a260"/>
<polygon points="660.1,195.3 679.3,196.1 682.9,193.3 663.7,192.9" fill="#58a25e"/>
<polygon points="663.7,192.9 682.9,193.3 686.6,190.5 667.4,190.4" fill="#58a15c"/>
<polygon points="667.4,190.4 686.6,190.5 690.3,187.7 671.0,187.9" fill="#58a15a"/>
<polygon points="671.0,187.9 690.3,187.7 693.9,184.8 674.7,185.4" fill="#58a058"/>
<polygon points="674.7,185.4 693.9,184.8 697.6,182.0 678.4,182.9" fill="#59a058"/>
<polygon points="678.4,182.9 697.6,182.0 701.2,179.2 682.0,180.5" fill="#5ba058"/>
<polygon points="682.0,180.5 701.2,179.2 704.9,176.4 685.7,178.0" fill="#5c9f58"/>
<polygon points="685.7,178.0 704.9,176.4 708.6,173.6 689.3,175.5" fill="#5e9f58"/>
<polygon points="689.3,175.5 708.6,173.6 712.2,170.7 693.0,173.0" fill="#5f9e58"/>
<polygon points="693.0,173.0 712.2,170.7 715.9,167.9 696.6,170.6" fill="#609e58"/>
<polygon points="696.6,170.6 715.9,167.9 719.5,165.1 700.3,168.1" fill="#629d58"/>
<polygon points="700.3,168.1 719.5,165.1 723.2,162.3 704.0,165.6" fill="#639d58"/>
<polygon points="704.0,165.6 723.2,162.3 726.9,159.4 707.6,163.1" fill="#659c58"/>
<polygon points="580.5,272.3 599.8,282.4 603.4,279.2 584.2,269.5" fill="#59b1a3"/>
<polygon points="584.2,269.5 603.4,279.2 607.1,276.0 587.8,266.7" fill="#59b0a1"/>
<polygon points="587.8,266.7 607.1,276.0 610.7,272.9 591.5,263.8" fill="#59b09e"/>
<polygon points="591.5,263.8 610.7,272.9 614.4,269.7 595.1,261.0" fill="#59b09b"/>
<polygon points="595.1,261.0 614.4,269.7 618.0,266.5 598.8,258.2" fill="#59af98"/>
<polygon points="598.8,258.2 618.0,266.5 621.7,263.4 602.5,255.4" fill="#59af95"/>
<polygon points="602.5,255.4 621.7,263.4 625.4,260.2 606.1,252.6" fill="#59af93"/>
<polygon points="606.1,252.6 625.4,260.2 629.0,257.0 609.8,249.7" fill="#59ae90"/>
<polygon points="609.8,249.7 629.0,257.0 632.7,253.9 613.4,246.9" fill="#59ae8d"/>
<polygon points="613.4,246.9 632.7,253.9 636.3,250.7 617.1,244.1" fill="#59ad8b"/>
<polygon points="617.1,244.1 636.3,250.7 640.0,247.5 620.7,241.3" fill="#59ad88"/>
<polygon points="620.7,241.3 640.0,247.5 643.6,244.4 624.4,238.4" fill="#59ad85"/>
<polygon points="624.4,238.4 643.6,244.4 647.3,241.2 628.1,235.6" fill="#59ac83"/>
<polygon points="628.1,235.6 647.3,241.2 651.0,238.0 631.7,232.8" fill="#59ac80"/>
<polygon points="631.7,232.8 651.0,238.0 654.6,234.9 635.4,230.0" fill="#59ab7d"/>
<polygon points="635.4,230.0 654.6,234.9 658.3,231.7 639.0,227.2" fill="#59ab7b"/>
<polygon points="639.0,227.2 658.3,231.7 661.9,228.6 642.7,224.3" fill="#59ab78"/>
<polygon points="642.7,224.3 661.9,228.6 665.6,225.4 646.4,221.5" fill="#59aa76"/>
<polygon points="646.4,221.5 665.6,225.4 669.3,222.2 650.0,218.7" fill="#59aa73"/>
<polygon points="650.0,218.7 669.3,222.2 672.9,219.1 653.7,215.9" fill="#59a971"/>
<polygon points="653.7,215.9 672.9,219.1 676.6,215.9 657.3,213.1" fill="#59a96e"/>
<polygon points="657.3,213.1 676.6,215.9 680.2,212.7 661.0,210.2" fill="#59a86c"/>
<polygon points="661.0,210.2 680.2,212.7 683.9,209.6 664.7,207.4" fill="#59a869"/>
<polygon points="664.7,207.4 683.9,209.6 687.5,206.4 668.3,204.6" fill="#59a867"/>
<polygon points="668.3,204.6 687.5,206.4 691.2,203.2 672.0,201.8" fill="#58a765"/>
<polygon points="672.0,201.8 691.2,203.2 694.9,200.1 675.6,198.9" fill="#58a762"/>
<polygon points="675.6,198.9 694.9,200.1 698.5,196.9 679.3,196.1" fill="#58a660"/>
<polygon points="679.3,196.1 698.5,196.9 702.2,193.7 682.9,193.3" fill="#58a65e"/>
<polygon points="682.9,193.3 702.2,193.7 705.8,190.6 686.6,190.5" fill="#58a55b"/>
<polygon points="686.6,190.5 705.8,190.6 709.5,187.4 690.3,187.7" fill="#58a559"/>
<polygon points="690.3,187.7 709.5,187.4 713.2,184.3 693.9,184.8" fill="#5aa458"/>
<polygon points="693.9,184.8 713.2,184.3 716.8,181.1 697.6,182.0" fill="#5ca458"/>
<polygon points="697.6,182.0 716.8,181.1 720.5,177.9 701.2,179.2" fill="#5da358"/>
<polygon points="701.2,179.2 720.5,177.9 724.1,174.8 704.9,176.4" fill="#5fa358"/>
<polygon points="704.9,176.4 724.1,174.8 727.8,171.6 708.6,173.6" fill="#61a258"/>
<polygon points="708.6,173.6 727.8,171.6 731.4,168.4 712.2,170.7" fill="#63a258"/>
<polygon points="712.2,170.7 731.4,168.4 735.1,165.3 715.9,167.9" fill="#65a158"/>
<polygon points="715.9,167.9 735.1,165.3 738.8,162.1 719.5,165.1" fill="#67a158"/>
<polygon points="719.5,165.1 738.8,162.1 742.4,158.9 723.2,162.3" fill="#68a058"/>
<polygon points="723.2,162.3 742.4,158.9 746.1,155.8 726.9,159.4" fill="#6aa058"/>
<polygon points="599.8,282.4 619.0,292.4 622.7,288.9 603.4,279.2" fill="#59b5b2"/>
<polygon points="603.4,279.2 622.7,288.9 626.3,285.4 607.1,276.0" fill="#59b4af"/>
<polygon points="607.1,276.0 626.3,285.4 630.0,281.9 610.7,272.9" fill="#59b4ac"/>
<polygon points="610.7,272.9 630.0,281.9 633.6,278.4 614.4,269.7" fill="#59b3a8"/>
<polygon points="614.4,269.7 633.6,278.4 637.3,274.9 618.0,266.5" fill="#59b3a5"/>
<polygon points="618.0,266.5 637.3,274.9 640.9,271.4 621.7,263.4" fill="#59b3a1"/>
<polygon points="621.7,263.4 640.9,271.4 644.6,267.8 625.4,260.2" fill="#59b29e"/>
<polygon points="625.4,260.2 644.6,267.8 648.3,264.3 629.0,257.0" fill="#59b29b"/>
<polygon points="629.0,257.0 648.3,264.3 651.9,260.8 632.7,253.9" fill="#59b298"/>
<polygon points="632.7,253.9 651.9,260.8 655.6,257.3 636.3,250.7" fill="#59b194"/>
<polygon points="636.3,250.7 655.6,257.3 659.2,253.8 640.0,247.5" fill="#59b191"/>
<polygon points="640.0,247.5 659.2,253.8 662.9,250.3 643.6,244.4" fill="#59b18e"/>
<polygon points="643.6,244.4 662.9,250.3 666.5,246.8 647.3,241.2" fill="#59b08b"/>
<polygon points="647.3,241.2 666.5,246.8 670.2,243.3 651.0,238.0" fill="#59b087"/>
<polygon points="651.0,238.0 670.2,243.3 673.9,239.8 654.6,234.9" fill="#59af84"/>
<polygon points="654.6,234.9 673.9,239.8 677.5,236.3 658.3,231.7" fill="#59af81"/>
<polygon points="658.3,231.7 677.5,236.3 681.2,232.8 661.9,228.6" fill="#59af7e"/>
<polygon points="661.9,228.6 681.2,232.8 684.8,229.3 665.6,225.4" fill="#59ae7b"/>
<polygon points="665.6,225.4 684.8,229.3 688.5,225.8 669.3,222.2" fill="#59ae78"/>
<polygon points="669.3,222.2 688.5,225.8 692.1,222.2 672.9,219.1" fill="#59ad75"/>
<polygon points="672.9,219.1 692.1,222.2 695.8,218.7 676.6,215.9" fill="#59ad72"/>
<polygon points="676.6,215.9 695.8,218.7 699.5,215.2 680.2,212.7" fill="#59ad6f"/>
<polygon points="680.2,212.7 699.5,215.2 703.1,211.7 683.9,209.6" fill="#59ac6c"/>
<polygon points="683.9,209.6 703.1,211.7 706.8,208.2 687.5,206.4" fill="#59ac69"/>
<polygon points="687.5,206.4 706.8,208.2 710.4,204.7 691.2,203.2" fill="#59ab66"/>
<polygon points="691.2,203.2 710.4,204.7 714.1,201.2 694.9,200.1" fill="#59ab63"/>
<polygon points="694.9,200.1 714.1,201.2 717.8,197.7 698.5,196.9" fill="#59aa60"/>
<polygon points="698.5,196.9 717.8,197.7 721.4,194.2 702.2,193.7" fill="#59aa5d"/>
<polygon points="702.2,193.7 721.4,194.2 725.1,190.7 705.8,190.6" fill="#59a95b"/>
<polygon points="705.8,190.6 725.1,190.7 728.7,187.2 709.5,187.4" fill="#59a959"/>
<polygon points="709.5,187.4 728.7,187.2 732.4,183.7 713.2,184.3" fill="#5ca959"/>
<polygon points="713.2,184.3 732.4,183.7 736.0,180.2 716.8,181.1" fill="#5ea859"/>
<polygon points="716.8,181.1 736.0,180.2 739.7,176.7 720.5,177.9" fill="#60a859"/>
<polygon points="720.5,177.9 739.7,176.7 743.4,173.1 724.1,174.8" fill="#63a758"/>
<polygon points="724.1,174.8 743.4,173.1 747.0,169.6 727.8,171.6" fill="#65a758"/>
<polygon points="727.8,171.6 747.0,169.6 750.7,166.1 731.4,168.4" fill="#67a658"/>
<polygon points="731.4,168.4 750.7,166.1 754.3,162.6 735.1,165.3" fill="#6aa658"/>
<polygon points="735.1,165.3 754.3,162.6 758.0,159.1 738.8,162.1" fill="#6ca558"/>
<polygon points="738.8,162.1 758.0,159.1 761.6,155.6 742.4,158.9" fill="#6ea558"/>
<polygon points="742.4,158.9 761.6,155.6 765.3,152.1 746.1,155.8" fill="#70a458"/>
<polygon points="619.0,292.4 638.2,302.4 641.9,298.6 622.7,288.9" fill="#58afb8"/>
<polygon points="622.7,288.9 641.9,298.6 645.6,294.7 626.3,285.4" fill="#59b2b8"/>
<polygon points="626.3,285.4 645.6,294.7 649.2,290.9 630.0,281.9" fill="#59b6b8"/>
<polygon points="630.0,281.9 649.2,290.9 652.9,287.0 633.6,278.4" fill="#59b8b6"/>
<polygon points="633.6,278.4 652.9,287.0 656.5,283.2 637.3,274.9" fill="#59b7b2"/>
<polygon points="637.3,274.9 656.5,283.2 660.2,279.3 640.9,271.4" fill="#59b7ae"/>
<polygon points="640.9,271.4 660.2,279.3 663.8,275.5 644.6,267.8" fill="#59b7aa"/>
<polygon points="644.6,267.8 663.8,275.5 667.5,271.6 648.3,264.3" fill="#59b6a6"/>
<polygon points="648.3,264.3 667.5,271.6 671.2,267.8 651.9,260.8" fill="#59b6a3"/>
<polygon points="651.9,260.8 671.2,267.8 674.8,263.9 655.6,257.3" fill="#59b59f"/>
<polygon points="655.6,257.3 674.8,263.9 678.5,260.1 659.2,253.8" fill="#59b59b"/>
<polygon points="659.2,253.8 678.5,260.1 682.1,256.2 662.9,250.3" fill="#59b597"/>
<polygon points="662.9,250.3 682.1,256.2 685.8,252.4 666.5,246.8" fill="#59b493"/>
<polygon points="666.5,246.8 685.8,252.4 689.4,248.5 670.2,243.3" fill="#59b48f"/>
<polygon points="670.2,243.3 689.4,248.5 693.1,244.7 673.9,239.8" fill="#59b48c"/>
<polygon points="673.9,239.8 693.1,244.7 696.8,240.8 677.5,236.3" fill="#59b388"/>
<polygon points="677.5,236.3 696.8,240.8 700.4,237.0 681.2,232.8" fill="#59b384"/>
<polygon points="681.2,232.8 700.4,237.0 704.1,233.1 684.8,229.3" fill="#59b280"/>
<polygon points="684.8,229.3 704.1,233.1 707.7,229.3 688.5,225.8" fill="#59b27d"/>
<polygon points="688.5,225.8 707.7,229.3 711.4,225.4 692.1,222.2" fill="#59b279"/>
<polygon points="692.1,222.2 711.4,225.4 715.0,221.6 695.8,218.7" fill="#59b176"/>
<polygon points="695.8,218.7 715.0,221.6 718.7,217.7 699.5,215.2" fill="#59b172"/>
<polygon points="699.5,215.2 718.7,217.7 722.4,213.9 703.1,211.7" fill="#59b06e"/>
<polygon points="703.1,211.7 722.4,213.9 726.0,210.0 706.8,208.2" fill="#59b06b"/>
<polygon points="706.8,208.2 726.0,210.0 729.7,206.2 710.4,204.7" fill="#59b067"/>
<polygon points="710.4,204.7 729.7,206.2 733.3,202.3 714.1,201.2" fill="#59af64"/>
<polygon points="714.1,201.2 733.3,202.3 737.0,198.5 717.8,197.7" fill="#59af61"/>
<polygon points="717.8,197.7 737.0,198.5 740.6,194.6 721.4,194.2" fill="#59ae5d"/>
<polygon points="721.4,194.2 740.6,194.6 744.3,190.8 725.1,190.7" fill="#59ae5a"/>
<polygon points="725.1,190.7 744.3,190.8 748.0,186.9 728.7,187.2" fill="#5bad59"/>
<polygon points="728.7,187.2 748.0,186.9 751.6,183.1 732.4,183.7" fill="#5ead59"/>
<polygon points="732.4,183.7 751.6,183.1 755.3,179.2 736.0,180.2" fill="#61ad59"/>
<polygon points="736.0,180.2 755.3,179.2 758.9,175.4 739.7,176.7" fill="#64ac59"/>
<polygon points="739.7,176.7 758.9,175.4 762.6,171.5 743.4,173.1" fill="#67ac59"/>
<polygon points="743.4,173.1 762.6,171.5 766.2,167.7 747.0,169.6" fill="#69ab59"/>
<polygon points="747.0,169.6 766.2,167.7 769.9,163.8 750.7,166.1" fill="#6cab59"/>
<polygon points="750.7,166.1 769.9,163.8 773.6,160.0 754.3,162.6" fill="#6faa59"/>
<polygon points="754.3,162.6 773.6,160.0 777.2,156.1 758.0,159.1" fill="#72aa59"/>
<polygon points="758.0,159.1 777.2,156.1 780.9,152.3 761.6,155.6" fill="#74a959"/>
<polygon points="761.6,155.6 780.9,152.3 784.5,148.4 765.3,152.1" fill="#77a959"/>
<polygon points="638.2,302.4 657.5,312.5 661.2,308.3 641.9,298.6" fill="#57a7bb"/>
<polygon points="641.9,298.6 661.2,308.3 664.8,304.1 645.6,294.7" fill="#57abbb"/>
<polygon points="645.6,294.7 664.8,304.1 668.5,299.9 649.2,290.9" fill="#58afbb"/>
<polygon points="649.2,290.9 668.5,299.9 672.1,295.7 652.9,287.0" fill="#58b3bb"/>
<polygon points="652.9,287.0 672.1,295.7 675.8,291.5 656.5,283.2" fill="#59b6bb"/>
<polygon points="656.5,283.2 675.8,291.5 679.4,287.3 660.2,279.3" fill="#5ababb"/>
<polygon points="660.2,279.3 679.4,287.3 683.1,283.1 663.8,275.5" fill="#5abbb7"/>
<polygon points="663.8,275.5 683.1,283.1 686.7,278.9 667.5,271.6" fill="#5abab3"/>
<polygon points="667.5,271.6 686.7,278.9 690.4,274.8 671.2,267.8" fill="#5abaae"/>
<polygon points="671.2,267.8 690.4,274.8 694.1,270.6 674.8,263.9" fill="#5abaaa"/>
<polygon points="674.8,263.9 694.1,270.6 697.7,266.4 678.5,260.1" fill="#5ab9a5"/>
<polygon points="678.5,260.1 697.7,266.4 701.4,262.2 682.1,256.2" fill="#5ab9a1"/>
<polygon points="682.1,256.2 701.4,262.2 705.0,258.0 685.8,252.4" fill="#5ab99c"/>
<polygon points="685.8,252.4 705.0,258.0 708.7,253.8 689.4,248.5" fill="#5ab898"/>
<polygon points="689.4,248.5 708.7,253.8 712.3,249.6 693.1,244.7" fill="#59b893"/>
<polygon points="693.1,244.7 712.3,249.6 716.0,245.4 696.8,240.8" fill="#59b88f"/>
<polygon points="696.8,240.8 716.0,245.4 719.7,241.2 700.4,237.0" fill="#59b78b"/>
<polygon points="700.4,237.0 719.7,241.2 723.3,237.0 704.1,233.1" fill="#59b786"/>
<polygon points="704.1,233.1 723.3,237.0 727.0,232.8 707.7,229.3" fill="#59b782"/>
<polygon points="707.7,229.3 727.0,232.8 730.6,228.6 711.4,225.4" fill="#59b67e"/>
<polygon points="711.4,225.4 730.6,228.6 734.3,224.4 715.0,221.6" fill="#59b67a"/>
<polygon points="715.0,221.6 734.3,224.4 737.9,220.2 718.7,217.7" fill="#59b575"/>
<polygon points="718.7,217.7 737.9,220.2 741.6,216.0 722.4,213.9" fill="#59b571"/>
<polygon points="722.4,213.9 741.6,216.0 745.2,211.9 726.0,210.0" fill="#59b56d"/>
<polygon points="726.0,210.0 745.2,211.9 748.9,207.7 729.7,206.2" fill="#59b469"/>
<polygon points="729.7,206.2 748.9,207.7 752.6,203.5 733.3,202.3" fill="#59b465"/>
<polygon points="733.3,202.3 752.6,203.5 756.2,199.3 737.0,198.5" fill="#59b361"/>
<polygon points="737.0,198.5 756.2,199.3 759.9,195.1 740.6,194.6" fill="#59b35d"/>
<polygon points="740.6,194.6 759.9,195.1 763.5,190.9 744.3,190.8" fill="#59b359"/>
<polygon points="744.3,190.8 763.5,190.9 767.2,186.7 748.0,186.9" fill="#5db259"/>
<polygon points="748.0,186.9 767.2,186.7 770.8,182.5 751.6,183.1" fill="#61b259"/>
<polygon points="751.6,183.1 770.8,182.5 774.5,178.3 755.3,179.2" fill="#64b159"/>
<polygon points="755.3,179.2 774.5,178.3 778.2,174.1 758.9,175.4" fill="#67b159"/>
<polygon points="758.9,175.4 778.2,174.1 781.8,169.9 762.6,171.5" fill="#6bb059"/>
<polygon points="762.6,171.5 781.8,169.9 785.5,165.7 766.2,167.7" fill="#6eb059"/>
<polygon points="766.2,167.7 785.5,165.7 789.1,161.5 769.9,163.8" fill="#71af59"/>
<polygon points="769.9,163.8 789.1,161.5 792.8,157.3 773.6,160.0" fill="#75af59"/>
<polygon points="773.6,160.0 792.8,157.3 796.4,153.1 777.2,156.1" fill="#78ae59"/>
<polygon points="777.2,156.1 796.4,153.1 800.1,148.9 780.9,152.3" fill="#7bae59"/>
<polygon points="780.9,152.3 800.1,148.9 803.8,144.8 784.5,148.4" fill="#7eae59"/>
<polygon points="657.5,312.5 676.8,322.6 680.4,318.0 661.2,308.3" fill="#559ebf"/>
<polygon points="661.2,308.3 680.4,318.0 684.1,313.5 664.8,304.1" fill="#56a2bf"/>
<polygon points="664.8,304.1 684.1,313.5 687.7,308.9 668.5,299.9" fill="#56a7bf"/>
<polygon points="668.5,299.9 687.7,308.9 691.4,304.4 672.1,295.7" fill="#57acbf"/>
<polygon points="672.1,295.7 691.4,304.4 695.0,299.9 675.8,291.5" fill="#58b0bf"/>
<polygon points="675.8,291.5 695.0,299.9 698.7,295.3 679.4,287.3" fill="#58b5bf"/>
<polygon points="679.4,287.3 698.7,295.3 702.3,290.8 683.1,283.1" fill="#59b9bf"/>
<polygon points="683.1,283.1 702.3,290.8 706.0,286.3 686.7,278.9" fill="#5abebf"/>
<polygon points="686.7,278.9 706.0,286.3 709.7,281.7 690.4,274.8" fill="#5abfbb"/>
<polygon points="690.4,274.8 709.7,281.7 713.3,277.2 694.1,270.6" fill="#5abeb6"/>
<polygon points="694.1,270.6 713.3,277.2 717.0,272.6 697.7,266.4" fill="#5abeb1"/>
<polygon points="697.7,266.4 717.0,272.6 720.6,268.1 701.4,262.2" fill="#5abeab"/>
<polygon points="701.4,262.2 720.6,268.1 724.3,263.6 705.0,258.0" fill="#5abda6"/>
<polygon points="705.0,258.0 724.3,263.6 727.9,259.0 708.7,253.8" fill="#5abda1"/>
<polygon points="708.7,253.8 727.9,259.0 731.6,254.5 712.3,249.6" fill="#5abd9c"/>
<polygon points="712.3,249.6 731.6,254.5 735.2,250.0 716.0,245.4" fill="#5abc97"/>
<polygon points="716.0,245.4 735.2,250.0 738.9,245.4 719.7,241.2" fill="#5abc92"/>
<polygon points="719.7,241.2 738.9,245.4 742.6,240.9 723.3,237.0" fill="#5abc8d"/>
<polygon points="723.3,237.0 742.6,240.9 746.2,236.3 727.0,232.8" fill="#5abb88"/>
<polygon points="727.0,232.8 746.2,236.3 749.9,231.8 730.6,228.6" fill="#5abb83"/>
<polygon points="730.6,228.6 749.9,231.8 753.5,227.3 734.3,224.4" fill="#5abb7e"/>
<polygon points="734.3,224.4 753.5,227.3 757.2,222.7 737.9,220.2" fill="#5aba79"/>
<polygon points="737.9,220.2 757.2,222.7 760.8,218.2 741.6,216.0" fill="#5aba74"/>
<polygon points="741.6,216.0 760.8,218.2 764.5,213.7 745.2,211.9" fill="#5ab96f"/>
<polygon points="745.2,211.9 764.5,213.7 768.1,209.1 748.9,207.7" fill="#5ab96b"/>
<polygon points="748.9,207.7 768.1,209.1 771.8,204.6 752.6,203.5" fill="#5ab966"/>
<polygon points="752.6,203.5 771.8,204.6 775.5,200.1 756.2,199.3" fill="#59b861"/>
<polygon points="756.2,199.3 775.5,200.1 779.1,195.5 759.9,195.1" fill="#59b85c"/>
<polygon points="759.9,195.1 779.1,195.5 782.8,191.0 763.5,190.9" fill="#5bb759"/>
<polygon points="763.5,190.9 782.8,191.0 786.4,186.4 767.2,186.7" fill="#5fb759"/>
<polygon points="767.2,186.7 786.4,186.4 790.1,181.9 770.8,182.5" fill="#63b759"/>
<polygon points="770.8,182.5 790.1,181.9 793.7,177.4 774.5,178.3" fill="#67b659"/>
<polygon points="774.5,178.3 793.7,177.4 797.4,172.8 778.2,174.1" fill="#6bb659"/>
<polygon points="778.2,174.1 797.4,172.8 801.0,168.3 781.8,169.9" fill="#6fb559"/>
<polygon points="781.8,169.9 801.0,168.3 804.7,163.8 785.5,165.7" fill="#73b559"/>
<polygon points="785.5,165.7 804.7,163.8 808.4,159.2 789.1,161.5" fill="#77b459"/>
<polygon points="789.1,161.5 808.4,159.2 812.0,154.7 792.8,157.3" fill="#7bb459"/>
<polygon points="792.8,157.3 812.0,154.7 815.7,150.1 796.4,153.1" fill="#7fb459"/>
<polygon points="796.4,153.1 815.7,150.1 819.3,145.6 800.1,148.9" fill="#83b359"/>
<polygon points="800.1,148.9 819.3,145.6 823.0,141.1 803.8,144.8" fill="#86b359"/>
<polygon points="676.8,322.6 696.0,332.6 699.7,327.7 680.4,318.0" fill="#5493c3"/>
<polygon points="680.4,318.0 699.7,327.7 703.3,322.8 684.1,313.5" fill="#5499c3"/>
<polygon points="684.1,313.5 703.3,322.8 707.0,318.0 687.7,308.9" fill="#559ec3"/>
<polygon points="687.7,308.9 707.0,318.0 710.6,313.1 691.4,304.4" fill="#56a4c3"/>
<polygon points="691.4,304.4 710.6,313.1 714.3,308.2 695.0,299.9" fill="#57a9c3"/>
<polygon points="695.0,299.9 714.3,308.2 717.9,303.3 698.7,295.3" fill="#57aec3"/>
<polygon points="698.7,295.3 717.9,303.3 721.6,298.4 702.3,290.8" fill="#58b4c3"/>
<polygon points="702.3,290.8 721.6,298.4 725.2,293.6 706.0,286.3" fill="#59b9c3"/>
<polygon points="706.0,286.3 725.2,293.6 728.9,288.7 709.7,281.7" fill="#59bec3"/>
<polygon points="709.7,281.7 728.9,288.7 732.6,283.8 713.3,277.2" fill="#5ac3c3"/>
<polygon points="713.3,277.2 732.6,283.8 736.2,278.9 717.0,272.6" fill="#5ac3bd"/>
<polygon points="717.0,272.6 736.2,278.9 739.9,274.0 720.6,268.1" fill="#5ac2b7"/>
<polygon points="720.6,268.1 739.9,274.0 743.5,269.2 724.3,263.6" fill="#5ac2b1"/>
<polygon points="724.3,263.6 743.5,269.2 747.2,264.3 727.9,259.0" fill="#5ac2ab"/>
<polygon points="727.9,259.0 747.2,264.3 750.8,259.4 731.6,254.5" fill="#5ac1a5"/>
<polygon points="731.6,254.5 750.8,259.4 754.5,254.5 735.2,250.0" fill="#5ac19f"/>
<polygon points="735.2,250.0 754.5,254.5 758.1,249.6 738.9,245.4" fill="#5ac199"/>
<polygon points="738.9,245.4 758.1,249.6 761.8,244.8 742.6,240.9" fill="#5ac094"/>
<polygon points="742.6,240.9 761.8,244.8 765.4,239.9 746.2,236.3" fill="#5ac08e"/>
<polygon points="746.2,236.3 765.4,239.9 769.1,235.0 749.9,231.8" fill="#5ac088"/>
<polygon points="749.9,231.8 769.1,235.0 772.8,230.1 753.5,227.3" fill="#5abf83"/>
<polygon points="753.5,227.3 772.8,230.1 776.4,225.2 757.2,222.7" fill="#5abf7d"/>
<polygon points="757.2,222.7 776.4,225.2 780.1,220.4 760.8,218.2" fill="#5abf77"/>
<polygon points="760.8,218.2 780.1,220.4 783.7,215.5 764.5,213.7" fill="#5abe72"/>
<polygon points="764.5,213.7 783.7,215.5 787.4,210.6 768.1,209.1" fill="#5abe6c"/>
<polygon points="768.1,209.1 787.4,210.6 791.0,205.7 771.8,204.6" fill="#5abe67"/>
<polygon points="771.8,204.6 791.0,205.7 794.7,200.8 775.5,200.1" fill="#5abd61"/>
<polygon points="775.5,200.1 794.7,200.8 798.3,196.0 779.1,195.5" fill="#5abd5c"/>
<polygon points="779.1,195.5 798.3,196.0 802.0,191.1 782.8,191.0" fill="#5dbd5a"/>
<polygon points="782.8,191.0 802.0,191.1 805.7,186.2 786.4,186.4" fill="#61bc5a"/>
<polygon points="786.4,186.4 805.7,186.2 809.3,181.3 790.1,181.9" fill="#66bc5a"/>
<polygon points="790.1,181.9 809.3,181.3 813.0,176.4 793.7,177.4" fill="#6bbb5a"/>
<polygon points="793.7,177.4 813.0,176.4 816.6,171.6 797.4,172.8" fill="#70bb5a"/>
<polygon points="797.4,172.8 816.6,171.6 820.3,166.7 801.0,168.3" fill="#74bb5a"/>
<polygon points="801.0,168.3 820.3,166.7 823.9,161.8 804.7,163.8" fill="#79ba5a"/>
<polygon points="804.7,163.8 823.9,161.8 827.6,156.9 808.4,159.2" fill="#7dba5a"/>
<polygon points="808.4,159.2 827.6,156.9 831.2,152.0 812.0,154.7" fill="#82b95a"/>
<polygon points="812.0,154.7 831.2,152.0 834.9,147.2 815.7,150.1" fill="#86b95a"/>
<polygon points="815.7,150.1 834.9,147.2 838.5,142.3 819.3,145.6" fill="#8bb85a"/>
<polygon points="819.3,145.6 838.5,142.3 842.2,137.4 823.0,141.1" fill="#8fb859"/>
<polygon points="696.0,332.6 715.2,342.6 718.9,337.4 699.7,327.7" fill="#5288c7"/>
<polygon points="699.7,327.7 718.9,337.4 722.6,332.2 703.3,322.8" fill="#538ec7"/>
<polygon points="703.3,322.8 722.6,332.2 726.2,327.0 707.0,318.0" fill="#5495c7"/>
<polygon points="707.0,318.0 726.2,327.0 729.9,321.8 710.6,313.1" fill="#559bc7"/>
<polygon points="710.6,313.1 729.9,321.8 733.5,316.5 714.3,308.2" fill="#55a1c7"/>
<polygon points="714.3,308.2 733.5,316.5 737.2,311.3 717.9,303.3" fill="#56a8c7"/>
<polygon points="717.9,303.3 737.2,311.3 740.8,306.1 721.6,298.4" fill="#57aec7"/>
<polygon points="721.6,298.4 740.8,306.1 744.5,300.9 725.2,293.6" fill="#58b4c7"/>
<polygon points="725.2,293.6 744.5,300.9 748.1,295.6 728.9,288.7" fill="#58bac7"/>
<polygon points="728.9,288.7 748.1,295.6 751.8,290.4 732.6,283.8" fill="#59c0c7"/>
<polygon points="732.6,283.8 751.8,290.4 755.4,285.2 736.2,278.9" fill="#5ac5c7"/>
<polygon points="736.2,278.9 755.4,285.2 759.1,280.0 739.9,274.0" fill="#5ac7c3"/>
<polygon points="739.9,274.0 759.1,280.0 762.8,274.7 743.5,269.2" fill="#5ac7bc"/>
<polygon points="743.5,269.2 762.8,274.7 766.4,269.5 747.2,264.3" fill="#5ac7b5"/>
<polygon points="747.2,264.3 766.4,269.5 770.1,264.3 750.8,259.4" fill="#5ac6af"/>
<polygon points="750.8,259.4 770.1,264.3 773.7,259.1 754.5,254.5" fill="#5ac6a8"/>
<polygon points="754.5,254.5 773.7,259.1 777.4,253.9 758.1,249.6" fill="#5ac6a2"/>
<polygon points="758.1,249.6 777.4,253.9 781.0,248.6 761.8,244.8" fill="#5ac59b"/>
<polygon points="761.8,244.8 781.0,248.6 784.7,243.4 765.4,239.9" fill="#5ac595"/>
<polygon points="765.4,239.9 784.7,243.4 788.3,238.2 769.1,235.0" fill="#5ac58e"/>
<polygon points="769.1,235.0 788.3,238.2 792.0,233.0 772.8,230.1" fill="#5ac488"/>
<polygon points="772.8,230.1 792.0,233.0 795.6,227.7 776.4,225.2" fill="#5ac481"/>
<polygon points="776.4,225.2 795.6,227.7 799.3,222.5 780.1,220.4" fill="#5ac47b"/>
<polygon points="780.1,220.4 799.3,222.5 803.0,217.3 783.7,215.5" fill="#5ac474"/>
<polygon points="783.7,215.5 803.0,217.3 806.6,212.1 787.4,210.6" fill="#5ac36e"/>
<polygon points="787.4,210.6 806.6,212.1 810.3,206.8 791.0,205.7" fill="#5ac368"/>
<polygon points="791.0,205.7 810.3,206.8 813.9,201.6 794.7,200.8" fill="#5ac361"/>
<polygon points="794.7,200.8 813.9,201.6 817.6,196.4 798.3,196.0" fill="#5ac25b"/>
<polygon points="798.3,196.0 817.6,196.4 821.2,191.2 802.0,191.1" fill="#5ec25a"/>
<polygon points="802.0,191.1 821.2,191.2 824.9,186.0 805.7,186.2" fill="#64c25a"/>
<polygon points="805.7,186.2 824.9,186.0 828.5,180.7 809.3,181.3" fill="#69c15a"/>
<polygon points="809.3,181.3 828.5,180.7 832.2,175.5 813.0,176.4" fill="#6fc15a"/>
<polygon points="813.0,176.4 832.2,175.5 835.8,170.3 816.6,171.6" fill="#74c05a"/>
<polygon points="816.6,171.6 835.8,170.3 839.5,165.1 820.3,166.7" fill="#7ac05a"/>
<polygon points="820.3,166.7 839.5,165.1 843.2,159.8 823.9,161.8" fill="#7fc05a"/>
<polygon points="823.9,161.8 843.2,159.8 846.8,154.6 827.6,156.9" fill="#84bf5a"/>
<polygon points="827.6,156.9 846.8,154.6 850.5,149.4 831.2,152.0" fill="#8abf5a"/>
<polygon points="831.2,152.0 850.5,149.4 854.1,144.2 834.9,147.2" fill="#8fbf5a"/>
<polygon points="834.9,147.2 854.1,144.2 857.8,138.9 838.5,142.3" fill="#94be5a"/>
<polygon points="838.5,142.3 857.8,138.9 861.4,133.7 842.2,137.4" fill="#99be5a"/>
<polygon points="715.2,342.6 734.5,352.7 738.2,347.1 718.9,337.4" fill="#517bcc"/>
<polygon points="718.9,337.4 738.2,347.1 741.8,341.6 722.6,332.2" fill="#5283cc"/>
<polygon points="722.6,332.2 741.8,341.6 745.5,336.0 726.2,327.0" fill="#538acc"/>
<polygon points="726.2,327.0 745.5,336.0 749.1,330.4 729.9,321.8" fill="#5391cc"/>
<polygon points="729.9,321.8 749.1,330.4 752.8,324.9 733.5,316.5" fill="#5499cc"/>
<polygon points="733.5,316.5 752.8,324.9 756.4,319.3 737.2,311.3" fill="#55a0cc"/>
<polygon points="737.2,311.3 756.4,319.3 760.1,313.7 740.8,306.1" fill="#56a7cc"/>
<polygon points="740.8,306.1 760.1,313.7 763.7,308.2 744.5,300.9" fill="#57aecc"/>
<polygon points="744.5,300.9 763.7,308.2 767.4,302.6 748.1,295.6" fill="#58b5cc"/>
<polygon points="748.1,295.6 767.4,302.6 771.0,297.0 751.8,290.4" fill="#58bbcc"/>
<polygon points="751.8,290.4 771.0,297.0 774.7,291.5 755.4,285.2" fill="#59c2cc"/>
<polygon points="755.4,285.2 774.7,291.5 778.3,285.9 759.1,280.0" fill="#5ac9cc"/>
<polygon points="759.1,280.0 778.3,285.9 782.0,280.3 762.8,274.7" fill="#5accc8"/>
<polygon points="762.8,274.7 782.0,280.3 785.7,274.8 766.4,269.5" fill="#5accc1"/>
<polygon points="766.4,269.5 785.7,274.8 789.3,269.2 770.1,264.3" fill="#5acbb9"/>
<polygon points="770.1,264.3 789.3,269.2 793.0,263.6 773.7,259.1" fill="#5acbb2"/>
<polygon points="773.7,259.1 793.0,263.6 796.6,258.1 777.4,253.9" fill="#5acbaa"/>
<polygon points="777.4,253.9 796.6,258.1 800.3,252.5 781.0,248.6" fill="#5acba3"/>
<polygon points="781.0,248.6 800.3,252.5 803.9,246.9 784.7,243.4" fill="#5aca9c"/>
<polygon points="784.7,243.4 803.9,246.9 807.6,241.4 788.3,238.2" fill="#5aca94"/>
<polygon points="788.3,238.2 807.6,241.4 811.2,235.8 792.0,233.0" fill="#5aca8d"/>
<polygon points="792.0,233.0 811.2,235.8 814.9,230.2 795.6,227.7" fill="#5ac986"/>
<polygon points="795.6,227.7 814.9,230.2 818.5,224.7 799.3,222.5" fill="#5ac97e"/>
<polygon points="799.3,222.5 818.5,224.7 822.2,219.1 803.0,217.3" fill="#5ac977"/>
<polygon points="803.0,217.3 822.2,219.1 825.8,213.5 806.6,212.1" fill="#5ac970"/>
<polygon points="806.6,212.1 825.8,213.5 829.5,208.0 810.3,206.8" fill="#5ac869"/>
<polygon points="810.3,206.8 829.5,208.0 833.2,202.4 813.9,201.6" fill="#5ac862"/>
<polygon points="813.9,201.6 833.2,202.4 836.8,196.8 817.6,196.4" fill="#5ac85b"/>
<polygon points="817.6,196.4 836.8,196.8 840.5,191.3 821.2,191.2" fill="#60c75a"/>
<polygon points="821.2,191.2 840.5,191.3 844.1,185.7 824.9,186.0" fill="#67c75a"/>
<polygon points="824.9,186.0 844.1,185.7 847.8,180.1 828.5,180.7" fill="#6dc75a"/>
<polygon points="828.5,180.7 847.8,180.1 851.4,174.6 832.2,175.5" fill="#73c65a"/>
<polygon points="832.2,175.5 851.4,174.6 855.1,169.0 835.8,170.3" fill="#79c65a"/>
<polygon points="835.8,170.3 855.1,169.0 858.7,163.4 839.5,165.1" fill="#7fc65a"/>
<polygon points="839.5,165.1 858.7,163.4 862.4,157.9 843.2,159.8" fill="#86c55a"/>
<polygon points="843.2,159.8 862.4,157.9 866.0,152.3 846.8,154.6" fill="#8cc55a"/>
<polygon points="846.8,154.6 866.0,152.3 869.7,146.7 850.5,149.4" fill="#92c55a"/>
<polygon points="850.5,149.4 869.7,146.7 873.3,141.2 854.1,144.2" fill="#98c45a"/>
<polygon points="854.1,144.2 873.3,141.2 877.0,135.6 857.8,138.9" fill="#9ec45a"/>
<polygon points="857.8,138.9 877.0,135.6 880.6,130.1 861.4,133.7" fill="#a4c45a"/>
<polygon points="734.5,352.7 753.8,362.8 757.4,356.8 738.2,347.1" fill="#4f6dd0"/>
<polygon points="738.2,347.1 757.4,356.8 761.1,350.9 741.8,341.6" fill="#5076d0"/>
<polygon points="741.8,341.6 761.1,350.9 764.7,345.0 745.5,336.0" fill="#517ed0"/>
<polygon points="745.5,336.0 764.7,345.0 768.4,339.1 749.1,330.4" fill="#5287d0"/>
<polygon points="749.1,330.4 768.4,339.1 772.0,333.2 752.8,324.9" fill="#538fd0"/>
<polygon points="752.8,324.9 772.0,333.2 775.7,327.3 756.4,319.3" fill="#5497d0"/>
<polygon points="756.4,319.3 775.7,327.3 779.3,321.4 760.1,313.7" fill="#559fd1"/>
<polygon points="760.1,313.7 779.3,321.4 783.0,315.5 763.7,308.2" fill="#56a7d1"/>
<polygon points="763.7,308.2 783.0,315.5 786.6,309.6 767.4,302.6" fill="#57afd1"/>
<polygon points="767.4,302.6 786.6,309.6 790.3,303.7 771.0,297.0" fill="#58b7d1"/>
<polygon points="771.0,297.0 790.3,303.7 793.9,297.7 774.7,291.5" fill="#58bed1"/>
<polygon points="774.7,291.5 793.9,297.7 797.6,291.8 778.3,285.9" fill="#59c6d1"/>
<polygon points="778.3,285.9 797.6,291.8 801.2,285.9 782.0,280.3" fill="#5acdd1"/>
<polygon points="782.0,280.3 801.2,285.9 804.9,280.0 785.7,274.8" fill="#5bd1cd"/>
<polygon points="785.7,274.8 804.9,280.0 808.5,274.1 789.3,269.2" fill="#5bd1c4"/>
<polygon points="789.3,269.2 808.5,274.1 812.2,268.2 793.0,263.6" fill="#5bd0bc"/>
<polygon points="793.0,263.6 812.2,268.2 815.9,262.3 796.6,258.1" fill="#5bd0b4"/>
<polygon points="796.6,258.1 815.9,262.3 819.5,256.4 800.3,252.5" fill="#5bd0ab"/>
<polygon points="800.3,252.5 819.5,256.4 823.2,250.5 803.9,246.9" fill="#5bd0a3"/>
<polygon points="803.9,246.9 823.2,250.5 826.8,244.6 807.6,241.4" fill="#5bcf9b"/>
<polygon points="807.6,241.4 826.8,244.6 830.5,238.7 811.2,235.8" fill="#5bcf92"/>
<polygon points="811.2,235.8 830.5,238.7 834.1,232.7 814.9,230.2" fill="#5bcf8a"/>
<polygon points="814.9,230.2 834.1,232.7 837.8,226.8 818.5,224.7" fill="#5bcf82"/>
<polygon points="818.5,224.7 837.8,226.8 841.4,220.9 822.2,219.1" fill="#5bce7a"/>
<polygon points="822.2,219.1 841.4,220.9 845.1,215.0 825.8,213.5" fill="#5bce72"/>
<polygon points="825.8,213.5 845.1,215.0 848.7,209.1 829.5,208.0" fill="#5bce6a"/>
<polygon points="829.5,208.0 848.7,209.1 852.4,203.2 833.2,202.4" fill="#5bce62"/>
<polygon points="833.2,202.4 852.4,203.2 856.0,197.3 836.8,196.8" fill="#5bcd5b"/>
<polygon points="836.8,196.8 856.0,197.3 859.7,191.4 840.5,191.3" fill="#62cd5b"/>
<polygon points="840.5,191.3 859.7,191.4 863.3,185.5 844.1,185.7" fill="#6acd5b"/>
<polygon points="844.1,185.7 863.3,185.5 867.0,179.6 847.8,180.1" fill="#71cd5a"/>
<polygon points="847.8,180.1 867.0,179.6 870.7,173.6 851.4,174.6" fill="#78cc5a"/>
<polygon points="851.4,174.6 870.7,173.6 874.3,167.7 855.1,169.0" fill="#7fcc5a"/>
<polygon points="855.1,169.0 874.3,167.7 878.0,161.8 858.7,163.4" fill="#86cc5a"/>
<polygon points="858.7,163.4 878.0,161.8 881.6,155.9 862.4,157.9" fill="#8dcb5a"/>
<polygon points="862.4,157.9 881.6,155.9 885.3,150.0 866.0,152.3" fill="#94cb5a"/>
<polygon points="866.0,152.3 885.3,150.0 888.9,144.1 869.7,146.7" fill="#9bcb5a"/>
<polygon points="869.7,146.7 888.9,144.1 892.6,138.2 873.3,141.2" fill="#a1ca5a"/>
<polygon points="873.3,141.2 892.6,138.2 896.2,132.3 877.0,135.6" fill="#a8ca5a"/>
<polygon points="877.0,135.6 896.2,132.3 899.9,126.4 880.6,130.1" fill="#afca5a"/>
<polygon points="753.8,362.8 773.0,372.8 776.7,366.5 757.4,356.8" fill="#4e5ed5"/>
<polygon points="757.4,356.8 776.7,366.5 780.3,360.3 761.1,350.9" fill="#4f68d5"/>
<polygon points="761.1,350.9 780.3,360.3 784.0,354.0 764.7,345.0" fill="#5071d5"/>
<polygon points="764.7,345.0 784.0,354.0 787.6,347.8 768.4,339.1" fill="#517bd5"/>
<polygon points="768.4,339.1 787.6,347.8 791.3,341.5 772.0,333.2" fill="#5284d5"/>
<polygon points="772.0,333.2 791.3,341.5 794.9,335.3 775.7,327.3" fill="#538dd5"/>
<polygon points="775.7,327.3 794.9,335.3 798.6,329.0 779.3,321.4" fill="#5496d6"/>
<polygon points="779.3,321.4 798.6,329.0 802.2,322.8 783.0,315.5" fill="#559fd6"/>
<polygon points="783.0,315.5 802.2,322.8 805.9,316.5 786.6,309.6" fill="#56a8d6"/>
<polygon points="786.6,309.6 805.9,316.5 809.5,310.3 790.3,303.7" fill="#57b1d6"/>
<polygon points="790.3,303.7 809.5,310.3 813.2,304.0 793.9,297.7" fill="#58bad6"/>
<polygon points="793.9,297.7 813.2,304.0 816.8,297.8 797.6,291.8" fill="#59c2d6"/>
<polygon points="797.6,291.8 816.8,297.8 820.5,291.5 801.2,285.9" fill="#5acbd6"/>
<polygon points="801.2,285.9 820.5,291.5 824.1,285.3 804.9,280.0" fill="#5bd3d6"/>
<polygon points="804.9,280.0 824.1,285.3 827.8,279.0 808.5,274.1" fill="#5bd6d0"/>
<polygon points="808.5,274.1 827.8,279.0 831.4,272.8 812.2,268.2" fill="#5bd6c7"/>
<polygon points="812.2,268.2 831.4,272.8 835.1,266.5 815.9,262.3" fill="#5bd6bd"/>
<polygon points="815.9,262.3 835.1,266.5 838.7,260.3 819.5,256.4" fill="#5bd5b4"/>
<polygon points="819.5,256.4 838.7,260.3 842.4,254.0 823.2,250.5" fill="#5bd5ab"/>
<polygon points="823.2,250.5 842.4,254.0 846.1,247.8 826.8,244.6" fill="#5bd5a2"/>
<polygon points="826.8,244.6 846.1,247.8 849.7,241.5 830.5,238.7" fill="#5bd598"/>
<polygon points="830.5,238.7 849.7,241.5 853.4,235.2 834.1,232.7" fill="#5bd58f"/>
<polygon points="834.1,232.7 853.4,235.2 857.0,229.0 837.8,226.8" fill="#5bd486"/>
<polygon points="837.8,226.8 857.0,229.0 860.7,222.7 841.4,220.9" fill="#5bd47d"/>
<polygon points="841.4,220.9 860.7,222.7 864.3,216.5 845.1,215.0" fill="#5bd474"/>
<polygon points="845.1,215.0 864.3,216.5 868.0,210.2 848.7,209.1" fill="#5bd46b"/>
<polygon points="848.7,209.1 868.0,210.2 871.6,204.0 852.4,203.2" fill="#5bd362"/>
<polygon points="852.4,203.2 871.6,204.0 875.3,197.7 856.0,197.3" fill="#5dd35b"/>
<polygon points="856.0,197.3 875.3,197.7 878.9,191.5 859.7,191.4" fill="#65d35b"/>
<polygon points="859.7,191.4 878.9,191.5 882.6,185.2 863.3,185.5" fill="#6dd35b"/>
<polygon points="863.3,185.5 882.6,185.2 886.2,179.0 867.0,179.6" fill="#75d35b"/>
<polygon points="867.0,179.6 886.2,179.0 889.9,172.7 870.7,173.6" fill="#7dd25b"/>
<polygon points="870.7,173.6 889.9,172.7 893.5,166.5 874.3,167.7" fill="#85d25b"/>
<polygon points="874.3,167.7 893.5,166.5 897.2,160.2 878.0,161.8" fill="#8dd25b"/>
<polygon points="878.0,161.8 897.2,160.2 900.8,154.0 881.6,155.9" fill="#94d25b"/>
<polygon points="881.6,155.9 900.8,154.0 904.5,147.7 885.3,150.0" fill="#9cd15b"/>
<polygon points="885.3,150.0 904.5,147.7 908.1,141.5 888.9,144.1" fill="#a4d15b"/>
<polygon points="888.9,144.1 908.1,141.5 911.8,135.2 892.6,138.2" fill="#acd15b"/>
<polygon points="892.6,138.2 911.8,135.2 915.4,129.0 896.2,132.3" fill="#b4d15b"/>
<polygon points="896.2,132.3 915.4,129.0 919.1,122.7 899.9,126.4" fill="#bbd05b"/>
<polygon points="773.0,372.8 792.2,382.9 795.9,376.3 776.7,366.5" fill="#4c4dda"/>
<polygon points="776.7,366.5 795.9,376.3 799.6,369.7 780.3,360.3" fill="#4d58da"/>
<polygon points="780.3,360.3 799.6,369.7 803.2,363.1 784.0,354.0" fill="#4f63da"/>
<polygon points="784.0,354.0 803.2,363.1 806.9,356.5 787.6,347.8" fill="#506eda"/>
<polygon points="787.6,347.8 806.9,356.5 810.5,349.9 791.3,341.5" fill="#5178db"/>
<polygon points="791.3,341.5 810.5,349.9 814.2,343.3 794.9,335.3" fill="#5283db"/>
<polygon points="794.9,335.3 814.2,343.3 817.8,336.7 798.6,329.0" fill="#538ddb"/>
<polygon points="798.6,329.0 817.8,336.7 821.5,330.1 802.2,322.8" fill="#5497db"/>
<polygon points="802.2,322.8 821.5,330.1 825.1,323.5 805.9,316.5" fill="#55a1db"/>
<polygon points="805.9,316.5 825.1,323.5 828.8,316.9 809.5,310.3" fill="#56abdb"/>
<polygon points="809.5,310.3 828.8,316.9 832.4,310.3 813.2,304.0" fill="#57b5db"/>
<polygon points="813.2,304.0 832.4,310.3 836.1,303.7 816.8,297.8" fill="#58bedb"/>
<polygon points="816.8,297.8 836.1,303.7 839.7,297.1 820.5,291.5" fill="#59c8db"/>
<polygon points="820.5,291.5 839.7,297.1 843.4,290.5 824.1,285.3" fill="#5ad1db"/>
<polygon points="824.1,285.3 843.4,290.5 847.0,283.9 827.8,279.0" fill="#5bdadb"/>
<polygon points="827.8,279.0 847.0,283.9 850.7,277.3 831.4,272.8" fill="#5bdbd2"/>
<polygon points="831.4,272.8 850.7,277.3 854.3,270.7 835.1,266.5" fill="#5bdbc8"/>
<polygon points="835.1,266.5 854.3,270.7 858.0,264.1 838.7,260.3" fill="#5bdbbe"/>
<polygon points="838.7,260.3 858.0,264.1 861.6,257.5 842.4,254.0" fill="#5bdbb3"/>
<polygon points="842.4,254.0 861.6,257.5 865.3,250.9 846.1,247.8" fill="#5bdba9"/>
<polygon points="846.1,247.8 865.3,250.9 868.9,244.3 849.7,241.5" fill="#5bdb9f"/>
<polygon points="849.7,241.5 868.9,244.3 872.6,237.7 853.4,235.2" fill="#5bda95"/>
<polygon points="853.4,235.2 872.6,237.7 876.2,231.2 857.0,229.0" fill="#5bda8a"/>
<polygon points="857.0,229.0 876.2,231.2 879.9,224.6 860.7,222.7" fill="#5bda80"/>
<polygon points="860.7,222.7 879.9,224.6 883.5,218.0 864.3,216.5" fill="#5bda76"/>
<polygon points="864.3,216.5 883.5,218.0 887.2,211.4 868.0,210.2" fill="#5bda6c"/>
<polygon points="868.0,210.2 887.2,211.4 890.9,204.8 871.6,204.0" fill="#5bda62"/>
<polygon points="871.6,204.0 890.9,204.8 894.5,198.2 875.3,197.7" fill="#5ed95b"/>
<polygon points="875.3,197.7 894.5,198.2 898.2,191.6 878.9,191.5" fill="#67d95b"/>
<polygon points="878.9,191.5 898.2,191.6 901.8,185.0 882.6,185.2" fill="#70d95b"/>
<polygon points="882.6,185.2 901.8,185.0 905.5,178.4 886.2,179.0" fill="#79d95b"/>
<polygon points="886.2,179.0 905.5,178.4 909.1,171.8 889.9,172.7" fill="#82d95b"/>
<polygon points="889.9,172.7 909.1,171.8 912.8,165.2 893.5,166.5" fill="#8bd85b"/>
<polygon points="893.5,166.5 912.8,165.2 916.4,158.6 897.2,160.2" fill="#94d85b"/>
<polygon points="897.2,160.2 916.4,158.6 920.1,152.0 900.8,154.0" fill="#9dd85b"/>
<polygon points="900.8,154.0 920.1,152.0 923.7,145.4 904.5,147.7" fill="#a6d85b"/>
<polygon points="904.5,147.7 923.7,145.4 927.4,138.8 908.1,141.5" fill="#afd85b"/>
<polygon points="908.1,141.5 927.4,138.8 931.0,132.2 911.8,135.2" fill="#b7d75b"/>
<polygon points="911.8,135.2 931.0,132.2 934.7,125.6 915.4,129.0" fill="#c0d75b"/>
<polygon points="915.4,129.0 934.7,125.6 938.3,119.0 919.1,122.7" fill="#c9d75b"/>
<polygon points="792.2,382.9 811.5,392.9 815.2,386.0 795.9,376.3" fill="#4c4ce0"/>
<polygon points="795.9,376.3 815.2,386.0 818.8,379.0 799.6,369.7" fill="#4c4ce0"/>
<polygon points="799.6,369.7 818.8,379.0 822.5,372.1 803.2,363.1" fill="#4d53e0"/>
<polygon points="803.2,363.1 822.5,372.1 826.1,365.1 806.9,356.5" fill="#4e5fe0"/>
<polygon points="806.9,356.5 826.1,365.1 829.8,358.2 810.5,349.9" fill="#4f6be0"/>
<polygon points="810.5,349.9 829.8,358.2 833.4,351.3 814.2,343.3" fill="#5177e0"/>
<polygon points="814.2,343.3 833.4,351.3 837.1,344.3 817.8,336.7" fill="#5282e0"/>
<polygon points="817.8,336.7 837.1,344.3 840.7,337.4 821.5,330.1" fill="#538ee0"/>
<polygon points="821.5,330.1 840.7,337.4 844.4,330.5 825.1,323.5" fill="#5499e0"/>
<polygon points="825.1,323.5 844.4,330.5 848.0,323.5 828.8,316.9" fill="#55a4e0"/>
<polygon points="828.8,316.9 848.0,323.5 851.7,316.6 832.4,310.3" fill="#56afe1"/>
<polygon points="832.4,310.3 851.7,316.6 855.3,309.6 836.1,303.7" fill="#57bae1"/>
<polygon points="836.1,303.7 855.3,309.6 859.0,302.7 839.7,297.1" fill="#58c4e1"/>
<polygon points="839.7,297.1 859.0,302.7 862.6,295.8 843.4,290.5" fill="#59cfe1"/>
<polygon points="843.4,290.5 862.6,295.8 866.3,288.8 847.0,283.9" fill="#5bd9e1"/>
<polygon points="847.0,283.9 866.3,288.8 869.9,281.9 850.7,277.3" fill="#5be1de"/>
<polygon points="850.7,277.3 869.9,281.9 873.6,274.9 854.3,270.7" fill="#5be1d3"/>
<polygon points="854.3,270.7 873.6,274.9 877.2,268.0 858.0,264.1" fill="#5be1c8"/>
<polygon points="858.0,264.1 877.2,268.0 880.9,261.1 861.6,257.5" fill="#5be1bc"/>
<polygon points="861.6,257.5 880.9,261.1 884.5,254.1 865.3,250.9" fill="#5be1b1"/>
<polygon points="865.3,250.9 884.5,254.1 888.2,247.2 868.9,244.3" fill="#5be0a6"/>
<polygon points="868.9,244.3 888.2,247.2 891.8,240.2 872.6,237.7" fill="#5be09a"/>
<polygon points="872.6,237.7 891.8,240.2 895.5,233.3 876.2,231.2" fill="#5be08f"/>
<polygon points="876.2,231.2 895.5,233.3 899.1,226.4 879.9,224.6" fill="#5be084"/>
<polygon points="879.9,224.6 899.1,226.4 902.8,219.4 883.5,218.0" fill="#5be078"/>
<polygon points="883.5,218.0 902.8,219.4 906.4,212.5 887.2,211.4" fill="#5be06d"/>
<polygon points="887.2,211.4 906.4,212.5 910.1,205.6 890.9,204.8" fill="#5be062"/>
<polygon points="890.9,204.8 910.1,205.6 913.7,198.6 894.5,198.2" fill="#5fe05b"/>
<polygon points="894.5,198.2 913.7,198.6 917.4,191.7 898.2,191.6" fill="#6adf5b"/>
<polygon points="898.2,191.6 917.4,191.7 921.0,184.7 901.8,185.0" fill="#74df5b"/>
<polygon points="901.8,185.0 921.0,184.7 924.7,177.8 905.5,178.4" fill="#7edf5b"/>
<polygon points="905.5,178.4 924.7,177.8 928.3,170.9 909.1,171.8" fill="#88df5b"/>
<polygon points="909.1,171.8 928.3,170.9 932.0,163.9 912.8,165.2" fill="#92df5b"/>
<polygon points="912.8,165.2 932.0,163.9 935.6,157.0 916.4,158.6" fill="#9cdf5b"/>
<polygon points="916.4,158.6 935.6,157.0 939.3,150.0 920.1,152.0" fill="#a6df5b"/>
<polygon points="920.1,152.0 939.3,150.0 942.9,143.1 923.7,145.4" fill="#b0de5b"/>
<polygon points="923.7,145.4 942.9,143.1 946.6,136.2 927.4,138.8" fill="#bade5b"/>
<polygon points="927.4,138.8 946.6,136.2 950.2,129.2 931.0,132.2" fill="#c4de5b"/>
<polygon points="931.0,132.2 950.2,129.2 953.9,122.3 934.7,125.6" fill="#cdde5b"/>
<polygon points="934.7,125.6 953.9,122.3 957.5,115.4 938.3,119.0" fill="#d7de5b"/>
<polygon points="811.5,392.9 830.7,402.9 834.4,395.7 815.2,386.0" fill="#4d4de5"/>
<polygon points="815.2,386.0 834.4,395.7 838.1,388.4 818.8,379.0" fill="#4d4de5"/>
<polygon points="818.8,379.0 838.1,388.4 841.7,381.1 822.5,372.1" fill="#4d4de5"/>
<polygon points="822.5,372.1 841.7,381.1 845.4,373.8 826.1,365.1" fill="#4d50e5"/>
<polygon points="826.1,365.1 845.4,373.8 849.0,366.5 829.8,358.2" fill="#4e5de5"/>
<polygon points="829.8,358.2 849.0,366.5 852.7,359.3 833.4,351.3" fill="#4f6ae6"/>
<polygon points="833.4,351.3 852.7,359.3 856.3,352.0 837.1,344.3" fill="#5177e6"/>
<polygon points="837.1,344.3 856.3,352.0 860.0,344.7 840.7,337.4" fill="#5283e6"/>
<polygon points="840.7,337.4 860.0,344.7 863.6,337.4 844.4,330.5" fill="#5390e6"/>
<polygon points="844.4,330.5 863.6,337.4 867.3,330.1 848.0,323.5" fill="#549ce6"/>
<polygon points="848.0,323.5 867.3,330.1 870.9,322.8 851.7,316.6" fill="#55a9e6"/>
<polygon points="851.7,316.6 870.9,322.8 874.6,315.6 855.3,309.6" fill="#56b5e6"/>
<polygon points="855.3,309.6 874.6,315.6 878.2,308.3 859.0,302.7" fill="#58c0e6"/>
<polygon points="859.0,302.7 878.2,308.3 881.9,301.0 862.6,295.8" fill="#59cce7"/>
<polygon points="862.6,295.8 881.9,301.0 885.5,293.7 866.3,288.8" fill="#5ad8e7"/>
<polygon points="866.3,288.8 885.5,293.7 889.2,286.4 869.9,281.9" fill="#5be3e7"/>
<polygon points="869.9,281.9 889.2,286.4 892.8,279.2 873.6,274.9" fill="#5ce7df"/>
<polygon points="873.6,274.9 892.8,279.2 896.5,271.9 877.2,268.0" fill="#5ce7d2"/>
<polygon points="877.2,268.0 896.5,271.9 900.1,264.6 880.9,261.1" fill="#5ce7c6"/>
<polygon points="880.9,261.1 900.1,264.6 903.8,257.3 884.5,254.1" fill="#5ce7b9"/>
<polygon points="884.5,254.1 903.8,257.3 907.4,250.0 888.2,247.2" fill="#5ce7ad"/>
<polygon points="888.2,247.2 907.4,250.0 911.1,242.7 891.8,240.2" fill="#5ce6a0"/>
<polygon points="891.8,240.2 911.1,242.7 914.7,235.5 895.5,233.3" fill="#5ce694"/>
<polygon points="895.5,233.3 914.7,235.5 918.4,228.2 899.1,226.4" fill="#5ce687"/>
<polygon points="899.1,226.4 918.4,228.2 922.0,220.9 902.8,219.4" fill="#5ce67b"/>
<polygon points="902.8,219.4 922.0,220.9 925.7,213.6 906.4,212.5" fill="#5ce66e"/>
<polygon points="906.4,212.5 925.7,213.6 929.3,206.3 910.1,205.6" fill="#5ce662"/>
<polygon points="910.1,205.6 929.3,206.3 933.0,199.1 913.7,198.6" fill="#61e65c"/>
<polygon points="913.7,198.6 933.0,199.1 936.6,191.8 917.4,191.7" fill="#6ce65c"/>
<polygon points="917.4,191.7 936.6,191.8 940.3,184.5 921.0,184.7" fill="#78e65c"/>
<polygon points="921.0,184.7 940.3,184.5 943.9,177.2 924.7,177.8" fill="#83e65c"/>
<polygon points="924.7,177.8 943.9,177.2 947.6,169.9 928.3,170.9" fill="#8ee65c"/>
<polygon points="928.3,170.9 947.6,169.9 951.2,162.6 932.0,163.9" fill="#99e65c"/>
<polygon points="932.0,163.9 951.2,162.6 954.9,155.4 935.6,157.0" fill="#a4e55c"/>
<polygon points="935.6,157.0 954.9,155.4 958.5,148.1 939.3,150.0" fill="#afe55c"/>
<polygon points="939.3,150.0 958.5,148.1 962.2,140.8 942.9,143.1" fill="#bae55c"/>
<polygon points="942.9,143.1 962.2,140.8 965.8,133.5 946.6,136.2" fill="#c6e55c"/>
<polygon points="946.6,136.2 965.8,133.5 969.5,126.2 950.2,129.2" fill="#d1e55c"/>
<polygon points="950.2,129.2 969.5,126.2 973.1,119.0 953.9,122.3" fill="#dce55c"/>
<polygon points="953.9,122.3 973.1,119.0 976.8,111.7 957.5,115.4" fill="#e5e25c"/>
<polygon points="830.7,402.9 850.0,413.0 853.6,405.4 834.4,395.7" fill="#4d4deb"/>
<polygon points="834.4,395.7 853.6,405.4 857.3,397.8 838.1,388.4" fill="#4d4deb"/>
<polygon points="838.1,388.4 857.3,397.8 861.0,390.1 841.7,381.1" fill="#4d4deb"/>
<polygon points="841.7,381.1 861.0,390.1 864.6,382.5 845.4,373.8" fill="#4d4deb"/>
<polygon points="845.4,373.8 864.6,382.5 868.2,374.9 849.0,366.5" fill="#4d4deb"/>
<polygon points="849.0,366.5 868.2,374.9 871.9,367.2 852.7,359.3" fill="#4e5ceb"/>
<polygon points="852.7,359.3 871.9,367.2 875.5,359.6 856.3,352.0" fill="#506aec"/>
<polygon points="856.3,352.0 875.5,359.6 879.2,352.0 860.0,344.7" fill="#5178ec"/>
<polygon points="860.0,344.7 879.2,352.0 882.9,344.4 863.6,337.4" fill="#5286ec"/>
<polygon points="863.6,337.4 882.9,344.4 886.5,336.8 867.3,330.1" fill="#5394ec"/>
<polygon points="867.3,330.1 886.5,336.8 890.2,329.1 870.9,322.8" fill="#55a1ec"/>
<polygon points="870.9,322.8 890.2,329.1 893.8,321.5 874.6,315.6" fill="#56afec"/>
<polygon points="874.6,315.6 893.8,321.5 897.5,313.9 878.2,308.3" fill="#57bcec"/>
<polygon points="878.2,308.3 897.5,313.9 901.1,306.2 881.9,301.0" fill="#58c9ed"/>
<polygon points="881.9,301.0 901.1,306.2 904.8,298.6 885.5,293.7" fill="#5ad5ed"/>
<polygon points="885.5,293.7 904.8,298.6 908.4,291.0 889.2,286.4" fill="#5be2ed"/>
<polygon points="889.2,286.4 908.4,291.0 912.0,283.4 892.8,279.2" fill="#5cedeb"/>
<polygon points="892.8,279.2 912.0,283.4 915.7,275.8 896.5,271.9" fill="#5cedde"/>
<polygon points="896.5,271.9 915.7,275.8 919.3,268.1 900.1,264.6" fill="#5cedd0"/>
<polygon points="900.1,264.6 919.3,268.1 923.0,260.5 903.8,257.3" fill="#5cedc2"/>
<polygon points="903.8,257.3 923.0,260.5 926.7,252.9 907.4,250.0" fill="#5cedb4"/>
<polygon points="907.4,250.0 926.7,252.9 930.3,245.2 911.1,242.7" fill="#5ceda7"/>
<polygon points="911.1,242.7 930.3,245.2 933.9,237.6 914.7,235.5" fill="#5ced99"/>
<polygon points="914.7,235.5 933.9,237.6 937.6,230.0 918.4,228.2" fill="#5ced8b"/>
<polygon points="918.4,228.2 937.6,230.0 941.2,222.4 922.0,220.9" fill="#5ced7d"/>
<polygon points="922.0,220.9 941.2,222.4 944.9,214.8 925.7,213.6" fill="#5ced70"/>
<polygon points="925.7,213.6 944.9,214.8 948.6,207.1 929.3,206.3" fill="#5ced62"/>
<polygon points="929.3,206.3 948.6,207.1 952.2,199.5 933.0,199.1" fill="#63ed5c"/>
<polygon points="933.0,199.1 952.2,199.5 955.8,191.9 936.6,191.8" fill="#6fed5c"/>
<polygon points="936.6,191.8 955.8,191.9 959.5,184.2 940.3,184.5" fill="#7ced5c"/>
<polygon points="940.3,184.5 959.5,184.2 963.2,176.6 943.9,177.2" fill="#88ed5c"/>
<polygon points="943.9,177.2 963.2,176.6 966.8,169.0 947.6,169.9" fill="#94ed5c"/>
<polygon points="947.6,169.9 966.8,169.0 970.5,161.4 951.2,162.6" fill="#a1ec5c"/>
<polygon points="951.2,162.6 970.5,161.4 974.1,153.8 954.9,155.4" fill="#adec5c"/>
<polygon points="954.9,155.4 974.1,153.8 977.8,146.1 958.5,148.1" fill="#baec5c"/>
<polygon points="958.5,148.1 977.8,146.1 981.4,138.5 962.2,140.8" fill="#c6ec5c"/>
<polygon points="962.2,140.8 981.4,138.5 985.0,130.9 965.8,133.5" fill="#d2ec5c"/>
<polygon points="965.8,133.5 985.0,130.9 988.7,123.2 969.5,126.2" fill="#dfec5c"/>
<polygon points="969.5,126.2 988.7,123.2 992.3,115.6 973.1,119.0" fill="#ebec5c"/>
<polygon points="973.1,119.0 992.3,115.6 996.0,108.0 976.8,111.7" fill="#ecdc5c"/>
<g opacity=".3">
<polygon points="80.0,11.0 99.2,21.0 102.9,26.8 83.7,17.1" fill="#ef6464"/>
<polygon points="99.2,21.0 118.5,31.1 122.2,36.5 102.9,26.8" fill="#f06464"/>
<polygon points="118.5,31.1 137.8,41.1 141.4,46.2 122.2,36.5" fill="#f16363"/>
<polygon points="137.8,41.1 157.0,51.2 160.7,55.9 141.4,46.2" fill="#f26262"/>
<polygon points="176.2,61.2 195.5,71.3 199.2,75.3 179.9,65.6" fill="#f56d61"/>
<polygon points="195.5,71.3 214.8,81.3 218.4,85.0 199.2,75.3" fill="#f68560"/>
<polygon points="214.8,81.3 234.0,91.4 237.7,94.8 218.4,85.0" fill="#f79d5f"/>
<polygon points="234.0,91.4 253.2,101.4 256.9,104.5 237.7,94.8" fill="#f6b55e"/>
<polygon points="253.2,101.4 272.5,111.5 276.2,114.2 256.9,104.5" fill="#f4cc5d"/>
<polygon points="318.3,135.6 337.6,144.9 341.3,146.6 322.0,137.5" fill="#c9ea5c"/>
<polygon points="322.0,137.5 341.3,146.6 344.9,148.2 325.7,139.5" fill="#c3e95c"/>
<polygon points="325.7,139.5 344.9,148.2 348.6,149.8 329.3,141.5" fill="#bce75c"/>
<polygon points="329.3,141.5 348.6,149.8 352.3,151.5 333.0,143.5" fill="#b6e55c"/>
<polygon points="333.0,143.5 352.3,151.5 355.9,153.1 336.7,145.5" fill="#b0e45c"/>
<polygon points="336.7,145.5 355.9,153.1 359.6,154.8 340.3,147.5" fill="#aae25c"/>
<polygon points="340.3,147.5 359.6,154.8 363.3,156.4 344.0,149.4" fill="#a4e05c"/>
<polygon points="344.0,149.4 363.3,156.4 366.9,158.0 347.7,151.4" fill="#9edf5c"/>
<polygon points="347.7,151.4 366.9,158.0 370.6,159.7 351.3,153.4" fill="#98dd5c"/>
<polygon points="351.3,153.4 370.6,159.7 374.3,161.3 355.0,155.4" fill="#93dc5c"/>
<polygon points="355.0,155.4 374.3,161.3 377.9,163.0 358.7,157.4" fill="#8dda5c"/>
<polygon points="358.7,157.4 377.9,163.0 381.6,164.6 362.3,159.4" fill="#88d95c"/>
<polygon points="362.3,159.4 381.6,164.6 385.3,166.2 366.0,161.3" fill="#83d85c"/>
<polygon points="366.0,161.3 385.3,166.2 388.9,167.9 369.7,163.3" fill="#7ed65c"/>
<polygon points="369.7,163.3 388.9,167.9 392.6,169.5 373.3,165.3" fill="#79d55c"/>
<polygon points="373.3,165.3 392.6,169.5 396.3,171.2 377.0,167.3" fill="#74d45c"/>
<polygon points="377.0,167.3 396.3,171.2 399.9,172.8 380.7,169.3" fill="#6fd35c"/>
<polygon points="380.7,169.3 399.9,172.8 403.6,174.4 384.3,171.2" fill="#6bd25c"/>
<polygon points="384.3,171.2 403.6,174.4 407.3,176.1 388.0,173.2" fill="#66d25c"/>
<polygon points="388.0,173.2 407.3,176.1 410.9,177.7 391.7,175.2" fill="#62d15c"/>
<polygon points="391.7,175.2 410.9,177.7 414.6,179.4 395.4,177.2" fill="#5dd05c"/>
<polygon points="395.4,177.2 414.6,179.4 418.3,181.0 399.0,179.2" fill="#5cd060"/>
<polygon points="399.0,179.2 418.3,181.0 421.9,182.6 402.7,181.2" fill="#5cd064"/>
<polygon points="402.7,181.2 421.9,182.6 425.6,184.3 406.4,183.1" fill="#5ccf69"/>
<polygon points="406.4,183.1 425.6,184.3 429.3,185.9 410.0,185.1" fill="#5ccf6e"/>
<polygon points="410.0,185.1 429.3,185.9 432.9,187.6 413.7,187.1" fill="#5cd073"/>
<polygon points="413.7,187.1 432.9,187.6 436.6,189.2 417.4,189.1" fill="#5cd078"/>
<polygon points="417.4,189.1 436.6,189.2 440.3,190.8 421.0,191.1" fill="#5cd07d"/>
<polygon points="421.0,191.1 440.3,190.8 443.9,192.5 424.7,193.1" fill="#5cd182"/>
<polygon points="424.7,193.1 443.9,192.5 447.6,194.1 428.4,195.0" fill="#5cd187"/>
<polygon points="428.4,195.0 447.6,194.1 451.3,195.7 432.0,197.0" fill="#5cd28c"/>
<polygon points="432.0,197.0 451.3,195.7 454.9,197.4 435.7,199.0" fill="#5cd392"/>
<polygon points="435.7,199.0 454.9,197.4 458.6,199.0 439.4,201.0" fill="#5cd497"/>
<polygon points="439.4,201.0 458.6,199.0 462.3,200.7 443.0,203.0" fill="#5cd59d"/>
<polygon points="443.0,203.0 462.3,200.7 465.9,202.3 446.7,205.0" fill="#5cd6a2"/>
<polygon points="446.7,205.0 465.9,202.3 469.6,203.9 450.4,206.9" fill="#5cd7a8"/>
<polygon points="450.4,206.9 469.6,203.9 473.3,205.6 454.0,208.9" fill="#5cd8ae"/>
<polygon points="454.0,208.9 473.3,205.6 476.9,207.2 457.7,210.9" fill="#5cdab4"/>
<polygon points="355.9,153.1 375.2,160.8 378.8,162.1 359.6,154.8" fill="#9dde5c"/>
<polygon points="359.6,154.8 378.8,162.1 382.5,163.4 363.3,156.4" fill="#98dd5c"/>
<polygon points="363.3,156.4 382.5,163.4 386.2,164.7 366.9,158.0" fill="#93db5c"/>
<polygon points="366.9,158.0 386.2,164.7 389.8,166.0 370.6,159.7" fill="#8ed95c"/>
<polygon points="370.6,159.7 389.8,166.0 393.5,167.3 374.3,161.3" fill="#89d85c"/>
<polygon points="374.3,161.3 393.5,167.3 397.2,168.6 377.9,163.0" fill="#84d65c"/>
<polygon points="377.9,163.0 397.2,168.6 400.8,169.8 381.6,164.6" fill="#80d45c"/>
<polygon points="381.6,164.6 400.8,169.8 404.5,171.1 385.3,166.2" fill="#7bd35c"/>
<polygon points="385.3,166.2 404.5,171.1 408.2,172.4 388.9,167.9" fill="#77d25c"/>
<polygon points="388.9,167.9 408.2,172.4 411.8,173.7 392.6,169.5" fill="#73d05c"/>
<polygon points="392.6,169.5 411.8,173.7 415.5,175.0 396.3,171.2" fill="#6fcf5c"/>
<polygon points="396.3,171.2 415.5,175.0 419.2,176.3 399.9,172.8" fill="#6bce5c"/>
<polygon points="399.9,172.8 419.2,176.3 422.8,177.6 403.6,174.4" fill="#67cd5c"/>
<polygon points="403.6,174.4 422.8,177.6 426.5,178.9 407.3,176.1" fill="#63cc5c"/>
<polygon points="407.3,176.1 426.5,178.9 430.2,180.2 410.9,177.7" fill="#5fcb5c"/>
<polygon points="410.9,177.7 430.2,180.2 433.8,181.5 414.6,179.4" fill="#5ccb5d"/>
<polygon points="414.6,179.4 433.8,181.5 437.5,182.8 418.3,181.0" fill="#5cca61"/>
<polygon points="418.3,181.0 437.5,182.8 441.2,184.1 421.9,182.6" fill="#5cca65"/>
<polygon points="421.9,182.6 441.2,184.1 444.8,185.4 425.6,184.3" fill="#5cca69"/>
<polygon points="425.6,184.3 444.8,185.4 448.5,186.7 429.3,185.9" fill="#5cca6d"/>
<polygon points="429.3,185.9 448.5,186.7 452.2,188.0 432.9,187.6" fill="#5cca71"/>
<polygon points="432.9,187.6 452.2,188.0 455.8,189.3 436.6,189.2" fill="#5cca75"/>
<polygon points="436.6,189.2 455.8,189.3 459.5,190.6 440.3,190.8" fill="#5cca79"/>
<polygon points="440.3,190.8 459.5,190.6 463.2,191.9 443.9,192.5" fill="#5ccb7d"/>
<polygon points="443.9,192.5 463.2,191.9 466.8,193.2 447.6,194.1" fill="#5ccc82"/>
<polygon points="447.6,194.1 466.8,193.2 470.5,194.5 451.3,195.7" fill="#5ccc86"/>
<polygon points="451.3,195.7 470.5,194.5 474.2,195.8 454.9,197.4" fill="#5ccd8b"/>
<polygon points="454.9,197.4 474.2,195.8 477.8,197.1 458.6,199.0" fill="#5ccf8f"/>
<polygon points="458.6,199.0 477.8,197.1 481.5,198.4 462.3,200.7" fill="#5cd094"/>
<polygon points="462.3,200.7 481.5,198.4 485.2,199.7 465.9,202.3" fill="#5cd199"/>
<polygon points="465.9,202.3 485.2,199.7 488.8,201.0 469.6,203.9" fill="#5cd29e"/>
<polygon points="469.6,203.9 488.8,201.0 492.5,202.3 473.3,205.6" fill="#5cd4a3"/>
<polygon points="473.3,205.6 492.5,202.3 496.1,203.6 476.9,207.2" fill="#5cd5a9"/>
<polygon points="393.5,167.3 412.7,173.2 416.4,174.1 397.2,168.6" fill="#7cd25c"/>
<polygon points="397.2,168.6 416.4,174.1 420.1,175.1 400.8,169.8" fill="#78d05c"/>
<polygon points="400.8,169.8 420.1,175.1 423.7,176.0 404.5,171.1" fill="#74ce5c"/>
<polygon points="404.5,171.1 423.7,176.0 427.4,177.0 408.2,172.4" fill="#71cd5c"/>
<polygon points="408.2,172.4 427.4,177.0 431.1,178.0 411.8,173.7" fill="#6dcb5c"/>
<polygon points="411.8,173.7 431.1,178.0 434.7,178.9 415.5,175.0" fill="#6aca5c"/>
<polygon points="415.5,175.0 434.7,178.9 438.4,179.9 419.2,176.3" fill="#66c95c"/>
<polygon points="419.2,176.3 438.4,179.9 442.1,180.8 422.8,177.6" fill="#63c75c"/>
<polygon points="422.8,177.6 442.1,180.8 445.7,181.8 426.5,178.9" fill="#60c65c"/>
<polygon points="426.5,178.9 445.7,181.8 449.4,182.7 430.2,180.2" fill="#5dc55c"/>
<polygon points="430.2,180.2 449.4,182.7 453.1,183.7 433.8,181.5" fill="#5cc55e"/>
<polygon points="433.8,181.5 453.1,183.7 456.7,184.6 437.5,182.8" fill="#5cc462"/>
<polygon points="437.5,182.8 456.7,184.6 460.4,185.6 441.2,184.1" fill="#5cc465"/>
<polygon points="441.2,184.1 460.4,185.6 464.1,186.5 444.8,185.4" fill="#5cc368"/>
<polygon points="444.8,185.4 464.1,186.5 467.7,187.5 448.5,186.7" fill="#5cc36b"/>
<polygon points="448.5,186.7 467.7,187.5 471.4,188.4 452.2,188.0" fill="#5cc46f"/>
<polygon points="452.2,188.0 471.4,188.4 475.1,189.4 455.8,189.3" fill="#5cc472"/>
<polygon points="455.8,189.3 475.1,189.4 478.7,190.3 459.5,190.6" fill="#5cc475"/>
<polygon points="459.5,190.6 478.7,190.3 482.4,191.3 463.2,191.9" fill="#5cc579"/>
<polygon points="463.2,191.9 482.4,191.3 486.0,192.2 466.8,193.2" fill="#5cc67d"/>
<polygon points="466.8,193.2 486.0,192.2 489.7,193.2 470.5,194.5" fill="#5cc780"/>
<polygon points="470.5,194.5 489.7,193.2 493.4,194.2 474.2,195.8" fill="#5cc884"/>
<polygon points="474.2,195.8 493.4,194.2 497.0,195.1 477.8,197.1" fill="#5cc988"/>
<polygon points="477.8,197.1 497.0,195.1 500.7,196.1 481.5,198.4" fill="#5ccb8c"/>
<polygon points="481.5,198.4 500.7,196.1 504.4,197.0 485.2,199.7" fill="#5ccc90"/>
<polygon points="485.2,199.7 504.4,197.0 508.0,198.0 488.8,201.0" fill="#5cce95"/>
<polygon points="488.8,201.0 508.0,198.0 511.7,198.9 492.5,202.3" fill="#5ccf99"/>
<polygon points="492.5,202.3 511.7,198.9 515.4,199.9 496.1,203.6" fill="#5cd19e"/>
<polygon points="431.1,178.0 450.3,182.2 454.0,182.8 434.7,178.9" fill="#65c55c"/>
<polygon points="434.7,178.9 454.0,182.8 457.6,183.4 438.4,179.9" fill="#63c35c"/>
<polygon points="438.4,179.9 457.6,183.4 461.3,184.0 442.1,180.8" fill="#60c25c"/>
<polygon points="442.1,180.8 461.3,184.0 465.0,184.6 445.7,181.8" fill="#5ec15c"/>
<polygon points="445.7,181.8 465.0,184.6 468.6,185.2 449.4,182.7" fill="#5cc05d"/>
<polygon points="449.4,182.7 468.6,185.2 472.3,185.8 453.1,183.7" fill="#5cbf60"/>
<polygon points="453.1,183.7 472.3,185.8 476.0,186.4 456.7,184.6" fill="#5cbe62"/>
<polygon points="456.7,184.6 476.0,186.4 479.6,187.1 460.4,185.6" fill="#5cbd65"/>
<polygon points="460.4,185.6 479.6,187.1 483.3,187.7 464.1,186.5" fill="#5cbd67"/>
<polygon points="464.1,186.5 483.3,187.7 487.0,188.3 467.7,187.5" fill="#5cbd6a"/>
<polygon points="467.7,187.5 487.0,188.3 490.6,188.9 471.4,188.4" fill="#5cbd6d"/>
<polygon points="471.4,188.4 490.6,188.9 494.3,189.5 475.1,189.4" fill="#5cbe6f"/>
<polygon points="475.1,189.4 494.3,189.5 498.0,190.1 478.7,190.3" fill="#5cbe72"/>
<polygon points="478.7,190.3 498.0,190.1 501.6,190.7 482.4,191.3" fill="#5cbf75"/>
<polygon points="482.4,191.3 501.6,190.7 505.3,191.3 486.0,192.2" fill="#5cc078"/>
<polygon points="486.0,192.2 505.3,191.3 508.9,191.9 489.7,193.2" fill="#5cc17b"/>
<polygon points="489.7,193.2 508.9,191.9 512.6,192.5 493.4,194.2" fill="#5cc37e"/>
<polygon points="493.4,194.2 512.6,192.5 516.3,193.1 497.0,195.1" fill="#5cc481"/>
<polygon points="497.0,195.1 516.3,193.1 519.9,193.8 500.7,196.1" fill="#5cc685"/>
<polygon points="500.7,196.1 519.9,193.8 523.6,194.4 504.4,197.0" fill="#5cc788"/>
<polygon points="504.4,197.0 523.6,194.4 527.3,195.0 508.0,198.0" fill="#5cc98c"/>
<polygon points="508.0,198.0 527.3,195.0 530.9,195.6 511.7,198.9" fill="#5ccb90"/>
<polygon points="511.7,198.9 530.9,195.6 534.6,196.2 515.4,199.9" fill="#5ccd93"/>
<polygon points="472.3,185.8 491.5,188.0 495.2,188.3 476.0,186.4" fill="#5cb863"/>
<polygon points="476.0,186.4 495.2,188.3 498.9,188.5 479.6,187.1" fill="#5cb765"/>
<polygon points="479.6,187.1 498.9,188.5 502.5,188.8 483.3,187.7" fill="#5cb767"/>
<polygon points="483.3,187.7 502.5,188.8 506.2,189.1 487.0,188.3" fill="#5cb769"/>
<polygon points="487.0,188.3 506.2,189.1 509.9,189.3 490.6,188.9" fill="#5cb76b"/>
<polygon points="490.6,188.9 509.9,189.3 513.5,189.6 494.3,189.5" fill="#5cb76d"/>
<polygon points="494.3,189.5 513.5,189.6 517.2,189.9 498.0,190.1" fill="#5cb86f"/>
<polygon points="498.0,190.1 517.2,189.9 520.8,190.1 501.6,190.7" fill="#5cb971"/>
<polygon points="501.6,190.7 520.8,190.1 524.5,190.4 505.3,191.3" fill="#5cba73"/>
<polygon points="505.3,191.3 524.5,190.4 528.2,190.7 508.9,191.9" fill="#5cbc76"/>
<polygon points="508.9,191.9 528.2,190.7 531.8,190.9 512.6,192.5" fill="#5cbd78"/>
<polygon points="512.6,192.5 531.8,190.9 535.5,191.2 516.3,193.1" fill="#5cbf7b"/>
<polygon points="516.3,193.1 535.5,191.2 539.2,191.5 519.9,193.8" fill="#5cc17e"/>
<polygon points="519.9,193.8 539.2,191.5 542.8,191.7 523.6,194.4" fill="#5cc381"/>
<polygon points="523.6,194.4 542.8,191.7 546.5,192.0 527.3,195.0" fill="#5cc584"/>
<polygon points="527.3,195.0 546.5,192.0 550.2,192.3 530.9,195.6" fill="#5cc787"/>
<polygon points="530.9,195.6 550.2,192.3 553.8,192.5 534.6,196.2" fill="#5cc98a"/>
<polygon points="509.9,189.3 529.1,189.8 532.7,189.7 513.5,189.6" fill="#5cb16a"/>
<polygon points="513.5,189.6 532.7,189.7 536.4,189.6 517.2,189.9" fill="#5cb26c"/>
<polygon points="517.2,189.9 536.4,189.6 540.1,189.5 520.8,190.1" fill="#5cb36e"/>
<polygon points="520.8,190.1 540.1,189.5 543.7,189.5 524.5,190.4" fill="#5cb56f"/>
<polygon points="524.5,190.4 543.7,189.5 547.4,189.4 528.2,190.7" fill="#5cb671"/>
<polygon points="528.2,190.7 547.4,189.4 551.1,189.3 531.8,190.9" fill="#5cb873"/>
<polygon points="531.8,190.9 551.1,189.3 554.7,189.2 535.5,191.2" fill="#5cba75"/>
<polygon points="535.5,191.2 554.7,189.2 558.4,189.2 539.2,191.5" fill="#5cbc77"/>
<polygon points="539.2,191.5 558.4,189.2 562.1,189.1 542.8,191.7" fill="#5cbe7a"/>
<polygon points="542.8,191.7 562.1,189.1 565.7,189.0 546.5,192.0" fill="#5cc17c"/>
<polygon points="546.5,192.0 565.7,189.0 569.4,188.9 550.2,192.3" fill="#5cc37f"/>
<polygon points="550.2,192.3 569.4,188.9 573.1,188.9 553.8,192.5" fill="#5cc581"/>
<polygon points="547.4,189.4 566.6,188.1 570.3,187.7 551.1,189.3" fill="#5cb46f"/>
<polygon points="551.1,189.3 570.3,187.7 574.0,187.3 554.7,189.2" fill="#5cb670"/>
<polygon points="554.7,189.2 574.0,187.3 577.6,186.9 558.4,189.2" fill="#5cb872"/>
<polygon points="558.4,189.2 577.6,186.9 581.3,186.4 562.1,189.1" fill="#5cbb73"/>
<polygon points="562.1,189.1 581.3,186.4 584.9,186.0 565.7,189.0" fill="#5cbd75"/>
<polygon points="565.7,189.0 584.9,186.0 588.6,185.6 569.4,188.9" fill="#5cc077"/>
<polygon points="569.4,188.9 588.6,185.6 592.3,185.2 573.1,188.9" fill="#5cc279"/>
<polygon points="584.9,186.0 604.2,183.0 607.8,182.3 588.6,185.6" fill="#5cbe70"/>
<polygon points="588.6,185.6 607.8,182.3 611.5,181.5 592.3,185.2" fill="#5cc071"/>
</g>
</g>
<g clip-path="url(#cp)"><use href="#sf" filter="url(#bl)"/></g>
<g shape-rendering="crispEdges">
<path fill="#7a9900" d="M333 142h2v2h-2z"/><path fill="#709900" d="M337 144h2v2h-2z"/><path fill="#669900" d="M340 146h2v2h-2zM344 147h2v2h-2zM352 152h2v2h-2z"/><path fill="#5c9900" d="M356 153h2v2h-2zM359 155h2v2h-2z"/><path fill="#529900" d="M363 156h2v2h-2zM367 157h2v2h-2zM370 158h2v2h-2zM371 162h2v2h-2zM375 163h2v2h-2z"/><path fill="#479900" d="M374 160h2v2h-2zM378 161h2v2h-2zM379 164h2v2h-2zM382 165h2v2h-2zM386 166h2v2h-2z"/><path fill="#3d9900" d="M381 162h2v2h-2zM390 166h2v2h-2zM393 167h2v2h-2zM391 171h2v2h-2zM394 172h2v2h-2zM398 173h2v2h-2z"/><path fill="#339900" d="M397 168h2v2h-2zM401 169h2v2h-2zM404 170h2v2h-2zM402 173h2v2h-2zM405 174h2v2h-2zM409 174h2v2h-2zM410 181h2v2h-2zM414 181h2v2h-2z"/><path fill="#299900" d="M408 171h2v2h-2zM412 172h2v2h-2zM413 175h2v2h-2zM416 176h2v2h-2zM420 176h2v2h-2zM424 177h2v2h-2zM417 182h2v2h-2zM421 182h2v2h-2zM425 182h2v2h-2z"/><path fill="#1f9900" d="M415 173h2v2h-2zM419 174h2v2h-2zM427 178h2v2h-2zM431 178h2v2h-2zM435 179h2v2h-2zM428 182h2v2h-2zM432 183h2v2h-2zM436 183h2v2h-2zM439 183h2v2h-2zM429 191h2v2h-2zM433 191h2v2h-2zM436 191h2v2h-2zM440 191h2v2h-2z"/><path fill="#149900" d="M438 179h2v2h-2zM442 180h2v2h-2zM446 181h2v2h-2zM443 184h2v2h-2zM447 184h2v2h-2zM450 184h2v2h-2zM454 184h2v2h-2zM444 191h2v2h-2zM447 190h2v2h-2zM451 190h2v2h-2zM455 190h2v2h-2zM458 190h2v2h-2z"/><path fill="#0a9900" d="M449 181h2v2h-2zM453 182h2v2h-2zM457 182h2v2h-2zM458 185h2v2h-2zM461 185h2v2h-2zM465 185h2v2h-2zM469 185h2v2h-2zM462 190h2v2h-2zM466 190h2v2h-2zM469 190h2v2h-2zM473 190h2v2h-2zM477 190h2v2h-2zM448 201h2v2h-2zM452 200h2v2h-2zM456 200h2v2h-2zM459 199h2v2h-2zM463 199h2v2h-2zM467 198h2v2h-2zM470 198h2v2h-2zM474 198h2v2h-2z"/><path fill="#009900" d="M472 186h2v2h-2zM476 186h2v2h-2zM480 186h2v2h-2zM483 186h2v2h-2zM480 190h2v2h-2zM484 190h2v2h-2zM488 190h2v2h-2zM491 190h2v2h-2zM495 189h2v2h-2zM478 197h2v2h-2zM481 197h2v2h-2zM485 196h2v2h-2zM489 196h2v2h-2zM492 195h2v2h-2zM496 195h2v2h-2zM500 195h2v2h-2z"/><path fill="#00990a" d="M487 187h2v2h-2zM491 187h2v2h-2zM494 187h2v2h-2zM499 189h2v2h-2zM502 189h2v2h-2zM506 189h2v2h-2zM510 189h2v2h-2zM513 189h2v2h-2zM503 194h2v2h-2zM507 194h2v2h-2zM511 193h2v2h-2zM514 193h2v2h-2zM518 193h2v2h-2zM522 192h2v2h-2zM525 192h2v2h-2zM529 191h2v2h-2z"/><path fill="#009914" d="M498 188h2v2h-2zM517 189h2v2h-2zM521 189h2v2h-2zM524 189h2v2h-2zM528 189h2v2h-2zM533 191h2v2h-2zM536 190h2v2h-2zM540 190h2v2h-2zM544 190h2v2h-2zM547 189h2v2h-2zM551 189h2v2h-2zM555 188h2v2h-2z"/><path fill="#00991f" d="M532 189h2v2h-2zM535 189h2v2h-2zM558 188h2v2h-2zM562 188h2v2h-2zM566 187h2v2h-2zM569 187h2v2h-2zM573 186h2v2h-2z"/>
<path fill="#ff0000" d="M79 10h2v2h-2zM83 16h2v2h-2zM86 22h2v2h-2zM90 28h2v2h-2zM94 34h2v2h-2zM97 40h2v2h-2zM101 47h2v2h-2zM98 20h2v2h-2zM102 26h2v2h-2zM106 32h2v2h-2zM109 37h2v2h-2zM113 43h2v2h-2zM117 49h2v2h-2zM118 30h2v2h-2zM121 36h2v2h-2zM125 41h2v2h-2zM129 46h2v2h-2zM132 52h2v2h-2zM137 40h2v2h-2zM140 45h2v2h-2zM144 50h2v2h-2zM148 55h2v2h-2zM156 50h2v2h-2zM160 55h2v2h-2zM163 60h2v2h-2zM175 60h2v2h-2z"/><path fill="#ff1100" d="M105 53h2v2h-2zM120 55h2v2h-2zM136 57h2v2h-2zM151 60h2v2h-2zM179 65h2v2h-2z"/><path fill="#ff3300" d="M108 59h2v2h-2zM124 60h2v2h-2zM140 63h2v2h-2zM155 66h2v2h-2zM171 69h2v2h-2zM198 74h2v2h-2z"/><path fill="#ff5500" d="M112 65h2v2h-2zM128 66h2v2h-2zM143 68h2v2h-2zM159 71h2v2h-2zM174 74h2v2h-2zM190 78h2v2h-2zM202 78h2v2h-2z"/><path fill="#ff7700" d="M116 71h2v2h-2zM131 72h2v2h-2zM178 79h2v2h-2zM194 82h2v2h-2zM209 86h2v2h-2zM221 88h2v2h-2zM233 90h2v2h-2z"/><path fill="#ff9900" d="M119 77h2v2h-2zM135 78h2v2h-2zM213 91h2v2h-2zM240 97h2v2h-2zM252 100h2v2h-2z"/><path fill="#ffbb00" d="M123 83h2v2h-2zM189 93h2v2h-2zM205 95h2v2h-2zM232 99h2v2h-2zM260 106h2v2h-2z"/><path fill="#ffdd00" d="M127 89h2v2h-2zM177 96h2v2h-2zM193 97h2v2h-2zM208 100h2v2h-2zM224 103h2v2h-2zM251 107h2v2h-2zM263 109h2v2h-2zM275 113h2v2h-2z"/><path fill="#ffff00" d="M130 95h2v2h-2zM165 100h2v2h-2zM181 101h2v2h-2zM196 102h2v2h-2zM212 104h2v2h-2zM228 107h2v2h-2zM243 110h2v2h-2zM259 114h2v2h-2zM271 116h2v2h-2zM283 119h2v2h-2zM294 123h2v2h-2z"/><path fill="#eeff00" d="M134 102h2v2h-2zM150 101h2v2h-2zM185 106h2v2h-2zM200 107h2v2h-2zM216 108h2v2h-2zM231 111h2v2h-2zM247 114h2v2h-2zM262 117h2v2h-2zM274 119h2v2h-2zM286 121h2v2h-2zM290 124h2v2h-2zM298 125h2v2h-2zM302 128h2v2h-2zM310 131h2v2h-2z"/><path fill="#ccff00" d="M138 108h2v2h-2zM173 111h2v2h-2zM207 116h2v2h-2zM223 117h2v2h-2zM239 119h2v2h-2zM254 121h2v2h-2zM270 124h2v2h-2zM285 128h2v2h-2zM297 129h2v2h-2zM309 132h2v2h-2zM313 135h2v2h-2zM321 137h2v2h-2z"/><path fill="#bbff00" d="M141 114h2v2h-2zM157 112h2v2h-2zM176 117h2v2h-2zM192 116h2v2h-2zM211 121h2v2h-2zM227 122h2v2h-2zM242 123h2v2h-2zM258 125h2v2h-2zM273 127h2v2h-2zM289 131h2v2h-2zM301 132h2v2h-2zM305 135h2v2h-2zM316 137h2v2h-2zM325 139h2v2h-2zM328 141h2v2h-2z"/><path fill="#99ff00" d="M145 120h2v2h-2zM164 124h2v2h-2zM199 126h2v2h-2zM215 126h2v2h-2zM234 130h2v2h-2zM250 131h2v2h-2zM265 132h2v2h-2zM281 134h2v2h-2zM284 137h2v2h-2zM296 137h2v2h-2zM300 140h2v2h-2zM312 140h2v2h-2zM327 144h2v2h-2zM339 146h2v2h-2zM348 149h2v2h-2zM351 150h2v2h-2z"/><path fill="#88ff00" d="M149 126h2v2h-2zM184 128h2v2h-2zM203 131h2v2h-2zM218 131h2v2h-2zM238 135h2v2h-2zM253 135h2v2h-2zM269 136h2v2h-2zM288 141h2v2h-2zM304 143h2v2h-2zM316 143h2v2h-2zM319 145h2v2h-2zM331 146h2v2h-2zM335 148h2v2h-2zM343 148h2v2h-2zM347 150h2v2h-2zM355 152h2v2h-2zM359 154h2v2h-2z"/><path fill="#66ff00" d="M152 132h2v2h-2zM172 135h2v2h-2zM191 138h2v2h-2zM207 136h2v2h-2zM226 140h2v2h-2zM245 144h2v2h-2zM261 143h2v2h-2zM280 147h2v2h-2zM295 147h2v2h-2zM311 149h2v2h-2zM327 151h2v2h-2zM330 153h2v2h-2zM342 153h2v2h-2zM346 155h2v2h-2zM358 156h2v2h-2zM370 159h2v2h-2zM373 160h2v2h-2zM385 164h2v2h-2z"/><path fill="#55ff00" d="M156 138h2v2h-2zM175 141h2v2h-2zM210 142h2v2h-2zM229 145h2v2h-2zM264 147h2v2h-2zM283 151h2v2h-2zM299 151h2v2h-2zM315 152h2v2h-2zM318 155h2v2h-2zM334 156h2v2h-2zM349 158h2v2h-2zM361 158h2v2h-2zM365 160h2v2h-2zM377 162h2v2h-2zM381 164h2v2h-2zM389 165h2v2h-2zM392 166h2v2h-2z"/><path fill="#44ff00" d="M160 144h2v2h-2zM195 144h2v2h-2zM214 147h2v2h-2zM233 149h2v2h-2zM249 148h2v2h-2zM268 151h2v2h-2zM287 154h2v2h-2zM303 154h2v2h-2zM322 158h2v2h-2zM338 159h2v2h-2zM353 160h2v2h-2zM369 162h2v2h-2zM372 164h2v2h-2zM384 165h2v2h-2zM388 167h2v2h-2zM396 168h2v2h-2zM400 169h2v2h-2z"/><path fill="#22ff00" d="M164 150h2v2h-2zM183 152h2v2h-2zM202 155h2v2h-2zM221 157h2v2h-2zM256 157h2v2h-2zM275 159h2v2h-2zM295 162h2v2h-2zM310 161h2v2h-2zM314 164h2v2h-2zM329 164h2v2h-2zM349 167h2v2h-2zM364 167h2v2h-2zM380 168h2v2h-2zM383 170h2v2h-2zM395 170h2v2h-2zM399 172h2v2h-2zM411 173h2v2h-2zM414 174h2v2h-2zM426 176h2v2h-2zM430 177h2v2h-2z"/><path fill="#11ff00" d="M167 156h2v2h-2zM186 158h2v2h-2zM240 159h2v2h-2zM260 161h2v2h-2zM279 163h2v2h-2zM298 165h2v2h-2zM317 168h2v2h-2zM333 167h2v2h-2zM337 170h2v2h-2zM352 169h2v2h-2zM368 169h2v2h-2zM371 172h2v2h-2zM387 172h2v2h-2zM391 174h2v2h-2zM403 173h2v2h-2zM406 175h2v2h-2zM418 175h2v2h-2zM422 177h2v2h-2zM425 178h2v2h-2zM434 178h2v2h-2zM437 179h2v2h-2zM441 180h2v2h-2z"/><path fill="#00ff11" d="M171 162h2v2h-2zM190 164h2v2h-2zM209 165h2v2h-2zM229 167h2v2h-2zM248 168h2v2h-2zM267 170h2v2h-2zM286 171h2v2h-2zM306 173h2v2h-2zM325 174h2v2h-2zM344 176h2v2h-2zM363 177h2v2h-2zM379 176h2v2h-2zM382 179h2v2h-2zM398 178h2v2h-2zM402 180h2v2h-2zM417 180h2v2h-2zM421 182h2v2h-2zM436 182h2v2h-2zM440 183h2v2h-2zM452 183h2v2h-2zM456 184h2v2h-2zM471 185h2v2h-2zM475 185h2v2h-2z"/><path fill="#00ff22" d="M175 169h2v2h-2zM194 170h2v2h-2zM213 171h2v2h-2zM232 172h2v2h-2zM251 173h2v2h-2zM271 174h2v2h-2zM290 175h2v2h-2zM309 177h2v2h-2zM328 178h2v2h-2zM348 179h2v2h-2zM367 180h2v2h-2zM386 181h2v2h-2zM405 182h2v2h-2zM425 183h2v2h-2zM444 184h2v2h-2zM459 185h2v2h-2zM463 186h2v2h-2zM467 186h2v2h-2zM479 186h2v2h-2zM482 187h2v2h-2zM486 187h2v2h-2zM502 188h2v2h-2zM505 188h2v2h-2zM509 188h2v2h-2z"/><path fill="#00ff44" d="M178 175h2v2h-2zM197 175h2v2h-2zM217 176h2v2h-2zM236 177h2v2h-2zM255 178h2v2h-2zM297 183h2v2h-2zM317 184h2v2h-2zM336 184h2v2h-2zM355 185h2v2h-2zM374 185h2v2h-2zM393 186h2v2h-2zM397 188h2v2h-2zM416 188h2v2h-2zM436 188h2v2h-2zM439 190h2v2h-2zM455 188h2v2h-2zM458 190h2v2h-2zM478 189h2v2h-2zM481 190h2v2h-2zM501 190h2v2h-2zM504 190h2v2h-2zM508 191h2v2h-2zM524 189h2v2h-2zM527 190h2v2h-2zM531 190h2v2h-2zM550 188h2v2h-2zM554 188h2v2h-2zM557 188h2v2h-2zM561 188h2v2h-2zM565 188h2v2h-2zM584 185h2v2h-2zM588 185h2v2h-2zM591 184h2v2h-2z"/><path fill="#00ff66" d="M182 181h2v2h-2zM243 187h2v2h-2zM263 187h2v2h-2zM282 187h2v2h-2zM301 187h2v2h-2zM324 191h2v2h-2zM343 191h2v2h-2zM362 191h2v2h-2zM385 193h2v2h-2zM404 193h2v2h-2zM427 194h2v2h-2zM447 193h2v2h-2zM450 195h2v2h-2zM469 193h2v2h-2zM473 195h2v2h-2zM496 194h2v2h-2zM500 195h2v2h-2zM519 193h2v2h-2zM523 193h2v2h-2zM526 194h2v2h-2zM549 191h2v2h-2zM553 192h2v2h-2z"/><path fill="#00ff77" d="M186 187h2v2h-2zM205 187h2v2h-2zM224 187h2v2h-2zM266 192h2v2h-2zM285 192h2v2h-2zM305 192h2v2h-2zM328 195h2v2h-2zM347 194h2v2h-2zM366 194h2v2h-2zM389 196h2v2h-2zM408 195h2v2h-2zM412 197h2v2h-2zM431 196h2v2h-2zM435 198h2v2h-2zM454 196h2v2h-2zM458 198h2v2h-2zM477 196h2v2h-2zM480 197h2v2h-2zM503 196h2v2h-2zM507 197h2v2h-2zM530 195h2v2h-2zM534 195h2v2h-2z"/><path fill="#00ff99" d="M189 193h2v2h-2zM231 198h2v2h-2zM251 197h2v2h-2zM270 197h2v2h-2zM293 201h2v2h-2zM312 200h2v2h-2zM354 201h2v2h-2zM377 203h2v2h-2zM396 201h2v2h-2zM400 204h2v2h-2zM419 202h2v2h-2zM442 202h2v2h-2zM446 204h2v2h-2zM465 201h2v2h-2zM469 203h2v2h-2zM491 201h2v2h-2zM495 203h2v2h-2z"/><path fill="#00ffaa" d="M193 199h2v2h-2zM212 199h2v2h-2zM254 202h2v2h-2zM274 201h2v2h-2zM316 204h2v2h-2zM335 202h2v2h-2zM358 204h2v2h-2zM381 206h2v2h-2zM404 207h2v2h-2zM423 204h2v2h-2zM426 207h2v2h-2zM449 206h2v2h-2zM472 205h2v2h-2zM476 206h2v2h-2z"/><path fill="#00ffcc" d="M197 205h2v2h-2zM239 209h2v2h-2zM258 207h2v2h-2zM281 211h2v2h-2zM300 209h2v2h-2zM323 212h2v2h-2zM342 210h2v2h-2zM365 211h2v2h-2zM388 212h2v2h-2zM411 212h2v2h-2zM434 211h2v2h-2zM437 214h2v2h-2z"/><path fill="#00ffdd" d="M200 211h2v2h-2zM220 210h2v2h-2zM262 213h2v2h-2zM304 214h2v2h-2zM327 216h2v2h-2zM346 213h2v2h-2zM369 215h2v2h-2zM392 215h2v2h-2zM415 215h2v2h-2z"/><path fill="#00ffff" d="M204 217h2v2h-2zM246 220h2v2h-2zM288 220h2v2h-2zM311 222h2v2h-2zM330 220h2v2h-2zM353 221h2v2h-2zM376 221h2v2h-2zM399 221h2v2h-2z"/><path fill="#00eeff" d="M208 224h2v2h-2zM227 222h2v2h-2zM250 225h2v2h-2zM269 223h2v2h-2zM292 225h2v2h-2zM315 227h2v2h-2zM334 224h2v2h-2zM357 225h2v2h-2zM380 225h2v2h-2z"/><path fill="#00ccff" d="M211 230h2v2h-2zM234 233h2v2h-2zM253 230h2v2h-2zM276 233h2v2h-2zM299 235h2v2h-2zM318 231h2v2h-2zM341 232h2v2h-2z"/><path fill="#00bbff" d="M215 236h2v2h-2zM257 236h2v2h-2zM280 238h2v2h-2zM322 236h2v2h-2z"/><path fill="#0099ff" d="M219 242h2v2h-2zM242 245h2v2h-2zM264 247h2v2h-2z"/><path fill="#0088ff" d="M222 248h2v2h-2zM245 250h2v2h-2z"/><path fill="#0077ff" d="M226 254h2v2h-2z"/><path fill="#ffaa00" d="M139 83h2v2h-2zM154 84h2v2h-2zM170 86h2v2h-2zM185 88h2v2h-2zM201 91h2v2h-2zM217 95h2v2h-2zM228 95h2v2h-2zM244 100h2v2h-2zM256 103h2v2h-2z"/><path fill="#ffcc00" d="M142 89h2v2h-2zM158 90h2v2h-2zM173 91h2v2h-2zM220 99h2v2h-2zM236 103h2v2h-2zM248 104h2v2h-2zM272 110h2v2h-2z"/><path fill="#ffee00" d="M146 95h2v2h-2zM162 95h2v2h-2zM239 106h2v2h-2zM255 111h2v2h-2zM267 112h2v2h-2zM279 116h2v2h-2zM291 121h2v2h-2z"/><path fill="#ddff00" d="M153 106h2v2h-2zM169 106h2v2h-2zM188 111h2v2h-2zM204 112h2v2h-2zM219 113h2v2h-2zM235 115h2v2h-2zM250 117h2v2h-2zM266 121h2v2h-2zM278 122h2v2h-2zM282 125h2v2h-2zM294 127h2v2h-2zM305 130h2v2h-2zM314 133h2v2h-2zM317 135h2v2h-2z"/><path fill="#aaff00" d="M161 118h2v2h-2zM180 122h2v2h-2zM196 121h2v2h-2zM230 126h2v2h-2zM246 127h2v2h-2zM261 128h2v2h-2zM277 131h2v2h-2zM293 134h2v2h-2zM308 137h2v2h-2zM320 139h2v2h-2zM324 141h2v2h-2zM332 142h2v2h-2zM336 144h2v2h-2z"/><path fill="#77ff00" d="M168 129h2v2h-2zM187 133h2v2h-2zM222 135h2v2h-2zM241 139h2v2h-2zM257 139h2v2h-2zM272 140h2v2h-2zM276 143h2v2h-2zM292 144h2v2h-2zM307 146h2v2h-2zM323 148h2v2h-2zM338 151h2v2h-2zM350 152h2v2h-2zM354 154h2v2h-2zM362 155h2v2h-2zM366 157h2v2h-2z"/><path fill="#33ff00" d="M179 147h2v2h-2zM198 149h2v2h-2zM218 152h2v2h-2zM237 154h2v2h-2zM252 152h2v2h-2zM272 155h2v2h-2zM291 158h2v2h-2zM306 158h2v2h-2zM326 161h2v2h-2zM341 161h2v2h-2zM345 164h2v2h-2zM357 162h2v2h-2zM360 165h2v2h-2zM376 166h2v2h-2zM392 169h2v2h-2zM403 170h2v2h-2zM407 171h2v2h-2zM423 175h2v2h-2z"/><path fill="#00ff55" d="M201 181h2v2h-2zM220 182h2v2h-2zM240 182h2v2h-2zM259 183h2v2h-2zM278 183h2v2h-2zM320 188h2v2h-2zM339 188h2v2h-2zM359 188h2v2h-2zM378 188h2v2h-2zM382 191h2v2h-2zM401 190h2v2h-2zM420 190h2v2h-2zM424 192h2v2h-2zM443 191h2v2h-2zM462 191h2v2h-2zM466 192h2v2h-2zM485 191h2v2h-2zM489 192h2v2h-2zM492 193h2v2h-2zM512 192h2v2h-2zM515 192h2v2h-2zM535 190h2v2h-2zM538 190h2v2h-2zM542 191h2v2h-2zM545 191h2v2h-2zM568 188h2v2h-2zM572 188h2v2h-2z"/><path fill="#00ff88" d="M208 193h2v2h-2zM228 193h2v2h-2zM247 192h2v2h-2zM289 196h2v2h-2zM308 196h2v2h-2zM331 199h2v2h-2zM350 198h2v2h-2zM370 197h2v2h-2zM373 200h2v2h-2zM393 199h2v2h-2zM415 200h2v2h-2zM438 200h2v2h-2zM461 200h2v2h-2zM484 199h2v2h-2zM488 200h2v2h-2zM511 198h2v2h-2zM514 199h2v2h-2z"/><path fill="#00ffbb" d="M216 204h2v2h-2zM235 203h2v2h-2zM277 206h2v2h-2zM296 205h2v2h-2zM319 208h2v2h-2zM339 206h2v2h-2zM361 208h2v2h-2zM384 209h2v2h-2zM407 209h2v2h-2zM430 209h2v2h-2zM453 208h2v2h-2zM457 210h2v2h-2z"/><path fill="#00ffee" d="M223 216h2v2h-2zM242 214h2v2h-2zM265 218h2v2h-2zM285 216h2v2h-2zM307 218h2v2h-2zM350 217h2v2h-2zM372 218h2v2h-2zM395 218h2v2h-2zM418 217h2v2h-2z"/><path fill="#00ddff" d="M231 227h2v2h-2zM273 228h2v2h-2zM296 230h2v2h-2zM338 228h2v2h-2zM361 228h2v2h-2z"/><path fill="#00aaff" d="M238 239h2v2h-2zM261 241h2v2h-2zM284 243h2v2h-2zM303 239h2v2h-2z"/><path fill="#ff6600" d="M147 73h2v2h-2zM162 76h2v2h-2zM206 82h2v2h-2zM217 84h2v2h-2z"/><path fill="#ff8800" d="M151 79h2v2h-2zM166 81h2v2h-2zM182 83h2v2h-2zM197 87h2v2h-2zM225 91h2v2h-2zM237 94h2v2h-2z"/><path fill="#00ff00" d="M206 160h2v2h-2zM225 162h2v2h-2zM244 164h2v2h-2zM263 165h2v2h-2zM283 167h2v2h-2zM302 169h2v2h-2zM321 171h2v2h-2zM340 173h2v2h-2zM356 172h2v2h-2zM360 175h2v2h-2zM375 174h2v2h-2zM394 176h2v2h-2zM410 177h2v2h-2zM414 178h2v2h-2zM429 179h2v2h-2zM433 181h2v2h-2zM445 181h2v2h-2zM448 182h2v2h-2zM460 183h2v2h-2zM464 184h2v2h-2zM468 184h2v2h-2z"/><path fill="#ff2200" d="M167 64h2v2h-2zM183 69h2v2h-2zM194 70h2v2h-2z"/><path fill="#ff4400" d="M186 73h2v2h-2zM214 80h2v2h-2z"/><path fill="#00ff33" d="M274 179h2v2h-2zM294 179h2v2h-2zM313 180h2v2h-2zM332 181h2v2h-2zM351 182h2v2h-2zM371 183h2v2h-2zM390 183h2v2h-2zM409 184h2v2h-2zM413 186h2v2h-2zM428 185h2v2h-2zM432 187h2v2h-2zM447 186h2v2h-2zM451 187h2v2h-2zM470 187h2v2h-2zM474 188h2v2h-2zM490 188h2v2h-2zM493 188h2v2h-2zM497 189h2v2h-2zM513 189h2v2h-2zM516 189h2v2h-2zM520 189h2v2h-2zM539 189h2v2h-2zM543 188h2v2h-2zM546 188h2v2h-2zM577 186h2v2h-2zM580 185h2v2h-2z"/>
<path fill="#b8e600" d="M329 141h2v2h-2zM899 125h2v2h-2zM914 128h2v2h-2zM930 131h2v2h-2zM946 135h2v2h-2zM980 138h2v2h-2z"/><path fill="#99e600" d="M348 151h2v2h-2zM857 138h2v2h-2zM860 133h2v2h-2zM872 140h2v2h-2zM876 135h2v2h-2zM892 137h2v2h-2zM907 140h2v2h-2zM923 144h2v2h-2zM958 147h2v2h-2z"/><path fill="#8ae600" d="M368 161h2v2h-2zM838 141h2v2h-2zM841 136h2v2h-2zM853 143h2v2h-2zM869 146h2v2h-2zM888 143h2v2h-2zM903 147h2v2h-2zM919 151h2v2h-2zM938 149h2v2h-2zM954 154h2v2h-2zM973 153h2v2h-2z"/><path fill="#6be600" d="M387 171h2v2h-2zM799 148h2v2h-2zM803 144h2v2h-2zM815 149h2v2h-2zM830 151h2v2h-2zM846 154h2v2h-2zM861 157h2v2h-2zM881 155h2v2h-2zM896 159h2v2h-2zM912 164h2v2h-2zM931 163h2v2h-2zM966 168h2v2h-2z"/><path fill="#4ce600" d="M406 181h2v2h-2zM761 155h2v2h-2zM764 151h2v2h-2zM773 159h2v2h-2zM776 155h2v2h-2zM788 161h2v2h-2zM804 163h2v2h-2zM819 166h2v2h-2zM835 169h2v2h-2zM838 164h2v2h-2zM854 168h2v2h-2zM870 173h2v2h-2zM889 172h2v2h-2zM908 171h2v2h-2zM924 177h2v2h-2zM943 176h2v2h-2zM962 176h2v2h-2z"/><path fill="#2ee600" d="M426 191h2v2h-2zM719 164h2v2h-2zM722 161h2v2h-2zM726 158h2v2h-2zM730 167h2v2h-2zM734 164h2v2h-2zM746 169h2v2h-2zM750 165h2v2h-2zM762 171h2v2h-2zM777 173h2v2h-2zM793 176h2v2h-2zM812 175h2v2h-2zM828 180h2v2h-2zM847 179h2v2h-2zM862 184h2v2h-2zM882 184h2v2h-2zM901 184h2v2h-2zM920 184h2v2h-2zM936 191h2v2h-2zM955 191h2v2h-2z"/><path fill="#1fe600" d="M445 201h2v2h-2zM687 166h2v2h-2zM696 170h2v2h-2zM699 167h2v2h-2zM703 165h2v2h-2zM707 162h2v2h-2zM708 173h2v2h-2zM711 170h2v2h-2zM715 167h2v2h-2zM723 174h2v2h-2zM727 171h2v2h-2zM739 176h2v2h-2zM742 172h2v2h-2zM754 178h2v2h-2zM758 174h2v2h-2zM770 181h2v2h-2zM774 177h2v2h-2zM789 181h2v2h-2zM805 185h2v2h-2zM808 180h2v2h-2zM824 185h2v2h-2zM843 185h2v2h-2zM859 190h2v2h-2zM878 190h2v2h-2zM897 191h2v2h-2zM916 191h2v2h-2z"/><path fill="#00e600" d="M464 211h2v2h-2zM468 210h2v2h-2zM471 209h2v2h-2zM475 209h2v2h-2zM646 180h2v2h-2zM650 178h2v2h-2zM654 177h2v2h-2zM657 175h2v2h-2zM661 173h2v2h-2zM665 171h2v2h-2zM658 183h2v2h-2zM662 181h2v2h-2zM665 179h2v2h-2zM669 176h2v2h-2zM670 187h2v2h-2zM674 184h2v2h-2zM677 182h2v2h-2zM681 179h2v2h-2zM686 189h2v2h-2zM689 187h2v2h-2zM693 184h2v2h-2zM705 190h2v2h-2zM708 186h2v2h-2zM724 190h2v2h-2zM740 194h2v2h-2zM743 190h2v2h-2zM759 194h2v2h-2zM763 190h2v2h-2zM778 195h2v2h-2zM797 195h2v2h-2zM817 195h2v2h-2zM832 201h2v2h-2zM836 196h2v2h-2zM851 202h2v2h-2zM871 203h2v2h-2zM890 204h2v2h-2zM909 205h2v2h-2zM928 205h2v2h-2zM948 206h2v2h-2z"/><path fill="#00e60f" d="M479 208h2v2h-2zM482 207h2v2h-2zM486 206h2v2h-2zM490 206h2v2h-2zM493 205h2v2h-2zM497 204h2v2h-2zM501 203h2v2h-2zM504 203h2v2h-2zM508 202h2v2h-2zM512 201h2v2h-2zM515 200h2v2h-2zM519 200h2v2h-2zM523 199h2v2h-2zM526 198h2v2h-2zM530 197h2v2h-2zM534 197h2v2h-2zM537 196h2v2h-2zM612 188h2v2h-2zM616 186h2v2h-2zM620 185h2v2h-2zM623 183h2v2h-2zM627 182h2v2h-2zM631 180h2v2h-2zM634 179h2v2h-2zM638 177h2v2h-2zM642 176h2v2h-2zM645 175h2v2h-2zM649 173h2v2h-2zM624 191h2v2h-2zM628 189h2v2h-2zM632 187h2v2h-2zM635 186h2v2h-2zM639 184h2v2h-2zM643 182h2v2h-2zM640 194h2v2h-2zM643 191h2v2h-2zM647 189h2v2h-2zM651 187h2v2h-2zM654 185h2v2h-2zM659 194h2v2h-2zM663 192h2v2h-2zM666 189h2v2h-2zM678 195h2v2h-2zM682 192h2v2h-2zM698 196h2v2h-2zM701 193h2v2h-2zM717 197h2v2h-2zM720 193h2v2h-2zM736 197h2v2h-2zM755 198h2v2h-2zM774 199h2v2h-2zM794 200h2v2h-2zM813 201h2v2h-2zM828 207h2v2h-2zM848 208h2v2h-2zM867 209h2v2h-2zM886 210h2v2h-2zM905 211h2v2h-2zM925 213h2v2h-2zM944 214h2v2h-2z"/><path fill="#00e61f" d="M541 195h2v2h-2zM545 194h2v2h-2zM548 193h2v2h-2zM552 193h2v2h-2zM556 192h2v2h-2zM559 191h2v2h-2zM563 190h2v2h-2zM567 190h2v2h-2zM570 189h2v2h-2zM574 188h2v2h-2zM578 187h2v2h-2zM581 187h2v2h-2zM585 186h2v2h-2zM589 185h2v2h-2zM592 184h2v2h-2zM596 184h2v2h-2zM483 221h2v2h-2zM487 220h2v2h-2zM491 219h2v2h-2zM494 218h2v2h-2zM498 217h2v2h-2zM502 216h2v2h-2zM505 214h2v2h-2zM509 213h2v2h-2zM513 212h2v2h-2zM516 211h2v2h-2zM520 210h2v2h-2zM524 209h2v2h-2zM527 208h2v2h-2zM531 207h2v2h-2zM535 206h2v2h-2zM538 204h2v2h-2zM542 203h2v2h-2zM546 202h2v2h-2zM549 201h2v2h-2zM553 200h2v2h-2zM556 199h2v2h-2zM560 198h2v2h-2zM564 197h2v2h-2zM567 196h2v2h-2zM571 195h2v2h-2zM575 193h2v2h-2zM578 192h2v2h-2zM582 191h2v2h-2zM586 190h2v2h-2zM589 189h2v2h-2zM593 188h2v2h-2zM597 187h2v2h-2zM600 186h2v2h-2zM604 185h2v2h-2zM608 183h2v2h-2zM611 182h2v2h-2zM615 181h2v2h-2zM619 180h2v2h-2zM622 179h2v2h-2zM626 178h2v2h-2zM630 177h2v2h-2zM572 204h2v2h-2zM576 202h2v2h-2zM579 201h2v2h-2zM583 199h2v2h-2zM587 198h2v2h-2zM590 196h2v2h-2zM594 195h2v2h-2zM598 193h2v2h-2zM601 192h2v2h-2zM605 191h2v2h-2zM609 189h2v2h-2zM602 202h2v2h-2zM606 200h2v2h-2zM610 198h2v2h-2zM613 196h2v2h-2zM617 195h2v2h-2zM621 193h2v2h-2zM625 202h2v2h-2zM629 200h2v2h-2zM632 198h2v2h-2zM636 196h2v2h-2zM648 202h2v2h-2zM652 199h2v2h-2zM655 197h2v2h-2zM667 204h2v2h-2zM671 201h2v2h-2zM675 198h2v2h-2zM690 202h2v2h-2zM694 199h2v2h-2zM709 204h2v2h-2zM713 200h2v2h-2zM729 205h2v2h-2zM732 201h2v2h-2zM748 207h2v2h-2zM752 202h2v2h-2zM767 208h2v2h-2zM771 204h2v2h-2zM786 210h2v2h-2zM790 205h2v2h-2zM806 211h2v2h-2zM809 206h2v2h-2zM825 213h2v2h-2z"/><path fill="#00e62e" d="M600 183h2v2h-2zM603 182h2v2h-2zM607 181h2v2h-2zM610 180h2v2h-2zM532 220h2v2h-2zM535 218h2v2h-2zM539 217h2v2h-2zM543 215h2v2h-2zM546 214h2v2h-2zM550 212h2v2h-2zM554 211h2v2h-2zM557 209h2v2h-2zM561 208h2v2h-2zM565 206h2v2h-2zM568 205h2v2h-2zM580 212h2v2h-2zM584 211h2v2h-2zM588 209h2v2h-2zM591 207h2v2h-2zM595 205h2v2h-2zM599 204h2v2h-2zM611 211h2v2h-2zM614 208h2v2h-2zM618 206h2v2h-2zM622 204h2v2h-2zM637 209h2v2h-2zM641 207h2v2h-2zM644 204h2v2h-2zM660 209h2v2h-2zM664 206h2v2h-2zM683 209h2v2h-2zM687 205h2v2h-2zM702 211h2v2h-2zM706 207h2v2h-2zM721 213h2v2h-2zM725 209h2v2h-2zM744 211h2v2h-2zM763 213h2v2h-2zM783 214h2v2h-2zM802 216h2v2h-2zM821 218h2v2h-2zM844 214h2v2h-2zM863 215h2v2h-2zM883 217h2v2h-2zM902 218h2v2h-2zM921 220h2v2h-2zM940 221h2v2h-2z"/><path fill="#00e63d" d="M502 231h2v2h-2zM506 230h2v2h-2zM510 228h2v2h-2zM513 227h2v2h-2zM517 225h2v2h-2zM521 224h2v2h-2zM524 222h2v2h-2zM528 221h2v2h-2zM558 223h2v2h-2zM562 221h2v2h-2zM566 220h2v2h-2zM569 218h2v2h-2zM573 216h2v2h-2zM577 214h2v2h-2zM596 219h2v2h-2zM600 217h2v2h-2zM603 215h2v2h-2zM607 213h2v2h-2zM626 217h2v2h-2zM630 214h2v2h-2zM633 212h2v2h-2zM649 218h2v2h-2zM653 215h2v2h-2zM656 212h2v2h-2zM672 218h2v2h-2zM676 215h2v2h-2zM679 212h2v2h-2zM695 218h2v2h-2zM698 214h2v2h-2zM718 217h2v2h-2zM737 219h2v2h-2zM741 215h2v2h-2zM760 217h2v2h-2zM779 219h2v2h-2zM798 222h2v2h-2zM818 224h2v2h-2zM840 220h2v2h-2zM860 222h2v2h-2zM879 224h2v2h-2zM898 225h2v2h-2zM917 227h2v2h-2zM937 229h2v2h-2z"/><path fill="#00e65c" d="M522 241h2v2h-2zM525 239h2v2h-2zM529 238h2v2h-2zM533 236h2v2h-2zM567 236h2v2h-2zM570 234h2v2h-2zM574 232h2v2h-2zM578 230h2v2h-2zM604 232h2v2h-2zM608 229h2v2h-2zM611 227h2v2h-2zM631 232h2v2h-2zM634 229h2v2h-2zM638 226h2v2h-2zM657 231h2v2h-2zM661 228h2v2h-2zM684 228h2v2h-2zM707 228h2v2h-2zM726 232h2v2h-2zM730 228h2v2h-2zM749 231h2v2h-2zM772 229h2v2h-2zM791 232h2v2h-2zM810 235h2v2h-2zM833 232h2v2h-2zM852 234h2v2h-2zM872 237h2v2h-2zM933 237h2v2h-2z"/><path fill="#00e64c" d="M536 234h2v2h-2zM540 232h2v2h-2zM544 230h2v2h-2zM547 229h2v2h-2zM551 227h2v2h-2zM555 225h2v2h-2zM581 228h2v2h-2zM585 226h2v2h-2zM589 223h2v2h-2zM592 221h2v2h-2zM615 224h2v2h-2zM619 222h2v2h-2zM622 219h2v2h-2zM642 223h2v2h-2zM645 221h2v2h-2zM665 224h2v2h-2zM668 221h2v2h-2zM687 225h2v2h-2zM691 221h2v2h-2zM710 224h2v2h-2zM714 221h2v2h-2zM733 223h2v2h-2zM753 226h2v2h-2zM756 222h2v2h-2zM775 224h2v2h-2zM795 227h2v2h-2zM814 229h2v2h-2zM837 226h2v2h-2zM856 228h2v2h-2zM875 230h2v2h-2zM894 232h2v2h-2zM914 234h2v2h-2z"/><path fill="#0fe600" d="M668 169h2v2h-2zM673 174h2v2h-2zM676 172h2v2h-2zM680 170h2v2h-2zM684 168h2v2h-2zM685 177h2v2h-2zM688 175h2v2h-2zM692 172h2v2h-2zM697 181h2v2h-2zM700 178h2v2h-2zM704 175h2v2h-2zM712 183h2v2h-2zM716 180h2v2h-2zM719 177h2v2h-2zM728 186h2v2h-2zM731 183h2v2h-2zM735 179h2v2h-2zM747 186h2v2h-2zM751 182h2v2h-2zM766 186h2v2h-2zM782 190h2v2h-2zM785 185h2v2h-2zM801 190h2v2h-2zM820 190h2v2h-2zM839 190h2v2h-2zM855 196h2v2h-2zM874 197h2v2h-2zM894 197h2v2h-2zM913 198h2v2h-2zM932 198h2v2h-2zM951 198h2v2h-2z"/><path fill="#00e67a" d="M541 251h2v2h-2zM545 249h2v2h-2zM548 247h2v2h-2zM579 249h2v2h-2zM582 246h2v2h-2zM586 244h2v2h-2zM612 246h2v2h-2zM616 243h2v2h-2zM620 240h2v2h-2zM643 243h2v2h-2zM646 240h2v2h-2zM669 242h2v2h-2zM673 239h2v2h-2zM692 244h2v2h-2zM696 240h2v2h-2zM719 240h2v2h-2zM742 240h2v2h-2zM761 244h2v2h-2zM784 242h2v2h-2zM826 244h2v2h-2zM845 247h2v2h-2zM868 243h2v2h-2zM887 246h2v2h-2zM906 249h2v2h-2z"/><path fill="#00e66b" d="M552 245h2v2h-2zM556 243h2v2h-2zM559 241h2v2h-2zM563 238h2v2h-2zM590 241h2v2h-2zM593 239h2v2h-2zM597 236h2v2h-2zM601 234h2v2h-2zM623 237h2v2h-2zM627 235h2v2h-2zM650 237h2v2h-2zM654 234h2v2h-2zM677 235h2v2h-2zM680 232h2v2h-2zM699 236h2v2h-2zM703 232h2v2h-2zM722 236h2v2h-2zM745 235h2v2h-2zM764 239h2v2h-2zM768 234h2v2h-2zM787 237h2v2h-2zM807 240h2v2h-2zM829 238h2v2h-2zM849 240h2v2h-2zM891 239h2v2h-2zM910 242h2v2h-2zM929 244h2v2h-2z"/><path fill="#00e699" d="M560 261h2v2h-2zM564 259h2v2h-2zM594 260h2v2h-2zM598 257h2v2h-2zM601 254h2v2h-2zM628 256h2v2h-2zM632 253h2v2h-2zM655 256h2v2h-2zM658 253h2v2h-2zM681 255h2v2h-2zM685 251h2v2h-2zM708 253h2v2h-2zM731 253h2v2h-2zM753 254h2v2h-2zM776 253h2v2h-2zM799 252h2v2h-2zM819 255h2v2h-2zM841 253h2v2h-2zM861 257h2v2h-2zM903 256h2v2h-2zM922 260h2v2h-2z"/><path fill="#00e68a" d="M568 256h2v2h-2zM571 254h2v2h-2zM575 251h2v2h-2zM605 252h2v2h-2zM609 249h2v2h-2zM635 250h2v2h-2zM639 247h2v2h-2zM662 249h2v2h-2zM666 246h2v2h-2zM688 248h2v2h-2zM711 249h2v2h-2zM715 244h2v2h-2zM734 249h2v2h-2zM738 244h2v2h-2zM757 249h2v2h-2zM780 248h2v2h-2zM803 246h2v2h-2zM822 249h2v2h-2zM864 250h2v2h-2zM884 253h2v2h-2zM926 252h2v2h-2z"/><path fill="#00e6b8" d="M580 271h2v2h-2zM583 268h2v2h-2zM613 269h2v2h-2zM617 266h2v2h-2zM644 267h2v2h-2zM670 267h2v2h-2zM674 263h2v2h-2zM697 265h2v2h-2zM720 267h2v2h-2zM723 263h2v2h-2zM746 263h2v2h-2zM769 263h2v2h-2zM792 263h2v2h-2zM811 267h2v2h-2zM834 266h2v2h-2zM853 270h2v2h-2zM876 267h2v2h-2zM895 271h2v2h-2zM918 267h2v2h-2z"/><path fill="#00e6a8" d="M587 266h2v2h-2zM590 263h2v2h-2zM621 262h2v2h-2zM624 259h2v2h-2zM647 263h2v2h-2zM651 260h2v2h-2zM677 259h2v2h-2zM700 261h2v2h-2zM704 257h2v2h-2zM727 258h2v2h-2zM750 258h2v2h-2zM773 258h2v2h-2zM796 257h2v2h-2zM815 261h2v2h-2zM838 259h2v2h-2zM857 263h2v2h-2zM880 260h2v2h-2zM899 264h2v2h-2z"/><path fill="#00e6d6" d="M599 281h2v2h-2zM629 281h2v2h-2zM633 277h2v2h-2zM659 278h2v2h-2zM686 278h2v2h-2zM712 276h2v2h-2zM735 278h2v2h-2zM758 279h2v2h-2zM762 274h2v2h-2zM785 274h2v2h-2zM804 279h2v2h-2zM827 278h2v2h-2zM850 276h2v2h-2zM869 281h2v2h-2zM892 278h2v2h-2zM911 282h2v2h-2z"/><path fill="#00e6c7" d="M602 278h2v2h-2zM606 275h2v2h-2zM610 272h2v2h-2zM636 274h2v2h-2zM640 270h2v2h-2zM663 274h2v2h-2zM667 271h2v2h-2zM689 274h2v2h-2zM693 270h2v2h-2zM716 272h2v2h-2zM739 273h2v2h-2zM743 268h2v2h-2zM765 269h2v2h-2zM788 268h2v2h-2zM808 273h2v2h-2zM830 272h2v2h-2zM873 274h2v2h-2zM915 275h2v2h-2z"/><path fill="#3de600" d="M738 161h2v2h-2zM741 158h2v2h-2zM745 155h2v2h-2zM753 162h2v2h-2zM757 158h2v2h-2zM765 167h2v2h-2zM769 163h2v2h-2zM781 169h2v2h-2zM784 165h2v2h-2zM796 172h2v2h-2zM800 167h2v2h-2zM816 171h2v2h-2zM831 175h2v2h-2zM850 174h2v2h-2zM866 179h2v2h-2zM885 178h2v2h-2zM904 177h2v2h-2zM939 183h2v2h-2zM958 183h2v2h-2z"/><path fill="#00d6e6" d="M618 291h2v2h-2zM645 294h2v2h-2zM648 290h2v2h-2zM675 291h2v2h-2zM678 286h2v2h-2zM701 290h2v2h-2zM728 288h2v2h-2zM751 289h2v2h-2zM774 290h2v2h-2zM797 291h2v2h-2zM819 291h2v2h-2zM842 290h2v2h-2zM865 288h2v2h-2zM885 293h2v2h-2zM907 290h2v2h-2z"/><path fill="#00e6e6" d="M622 288h2v2h-2zM625 284h2v2h-2zM652 286h2v2h-2zM656 282h2v2h-2zM682 282h2v2h-2zM705 285h2v2h-2zM709 281h2v2h-2zM732 283h2v2h-2zM754 284h2v2h-2zM777 285h2v2h-2zM781 279h2v2h-2zM800 285h2v2h-2zM823 284h2v2h-2zM846 283h2v2h-2zM888 285h2v2h-2z"/><path fill="#00c7e6" d="M637 301h2v2h-2zM641 298h2v2h-2zM667 299h2v2h-2zM671 295h2v2h-2zM698 294h2v2h-2zM721 297h2v2h-2zM724 293h2v2h-2zM747 295h2v2h-2zM770 296h2v2h-2zM793 297h2v2h-2zM816 297h2v2h-2zM839 296h2v2h-2zM862 295h2v2h-2zM904 298h2v2h-2z"/><path fill="#5ce600" d="M780 151h2v2h-2zM784 147h2v2h-2zM792 156h2v2h-2zM795 152h2v2h-2zM807 158h2v2h-2zM811 154h2v2h-2zM823 161h2v2h-2zM827 156h2v2h-2zM842 159h2v2h-2zM858 162h2v2h-2zM873 167h2v2h-2zM877 161h2v2h-2zM893 165h2v2h-2zM927 170h2v2h-2zM947 169h2v2h-2z"/><path fill="#00a8e6" d="M656 312h2v2h-2zM660 307h2v2h-2zM687 308h2v2h-2zM713 307h2v2h-2zM736 310h2v2h-2zM740 305h2v2h-2zM763 307h2v2h-2zM786 309h2v2h-2zM809 309h2v2h-2zM831 309h2v2h-2zM854 309h2v2h-2zM877 307h2v2h-2z"/><path fill="#00b8e6" d="M664 303h2v2h-2zM690 303h2v2h-2zM694 299h2v2h-2zM717 302h2v2h-2zM743 300h2v2h-2zM766 302h2v2h-2zM789 303h2v2h-2zM812 303h2v2h-2zM835 303h2v2h-2zM858 302h2v2h-2zM881 300h2v2h-2zM900 305h2v2h-2z"/><path fill="#008ae6" d="M676 322h2v2h-2zM702 322h2v2h-2zM729 321h2v2h-2zM755 318h2v2h-2zM778 320h2v2h-2zM801 322h2v2h-2zM824 322h2v2h-2zM847 323h2v2h-2zM870 322h2v2h-2zM893 320h2v2h-2z"/><path fill="#0099e6" d="M679 317h2v2h-2zM683 312h2v2h-2zM706 317h2v2h-2zM710 312h2v2h-2zM733 316h2v2h-2zM759 313h2v2h-2zM782 314h2v2h-2zM805 316h2v2h-2zM828 316h2v2h-2zM851 316h2v2h-2zM874 315h2v2h-2zM896 313h2v2h-2z"/><path fill="#7ae600" d="M818 145h2v2h-2zM822 140h2v2h-2zM834 146h2v2h-2zM849 148h2v2h-2zM865 151h2v2h-2zM884 149h2v2h-2zM900 153h2v2h-2zM915 158h2v2h-2zM935 156h2v2h-2zM950 162h2v2h-2zM969 160h2v2h-2z"/><path fill="#006be6" d="M695 332h2v2h-2zM722 331h2v2h-2zM744 335h2v2h-2zM748 329h2v2h-2zM771 332h2v2h-2zM794 334h2v2h-2zM820 329h2v2h-2zM843 329h2v2h-2zM866 329h2v2h-2z"/><path fill="#007ae6" d="M699 327h2v2h-2zM725 326h2v2h-2zM752 324h2v2h-2zM775 326h2v2h-2zM798 328h2v2h-2zM889 328h2v2h-2z"/><path fill="#005ce6" d="M714 342h2v2h-2zM718 336h2v2h-2zM741 341h2v2h-2zM767 338h2v2h-2zM790 341h2v2h-2zM817 336h2v2h-2zM840 336h2v2h-2zM863 336h2v2h-2zM886 336h2v2h-2z"/><path fill="#003de6" d="M733 352h2v2h-2zM760 350h2v2h-2zM810 349h2v2h-2zM832 350h2v2h-2zM855 351h2v2h-2zM878 351h2v2h-2z"/><path fill="#004ce6" d="M737 346h2v2h-2zM764 344h2v2h-2zM787 347h2v2h-2zM813 342h2v2h-2zM836 343h2v2h-2zM859 344h2v2h-2zM882 343h2v2h-2z"/><path fill="#a8e600" d="M880 129h2v2h-2zM895 131h2v2h-2zM911 134h2v2h-2zM926 138h2v2h-2zM942 142h2v2h-2zM961 140h2v2h-2zM977 145h2v2h-2z"/><path fill="#001fe6" d="M753 362h2v2h-2zM779 359h2v2h-2zM802 362h2v2h-2zM825 364h2v2h-2z"/><path fill="#002ee6" d="M756 356h2v2h-2zM783 353h2v2h-2zM806 355h2v2h-2zM829 357h2v2h-2zM852 358h2v2h-2zM875 359h2v2h-2z"/><path fill="#0000e6" d="M772 372h2v2h-2zM791 382h2v2h-2zM795 375h2v2h-2zM810 392h2v2h-2zM814 385h2v2h-2zM818 378h2v2h-2zM821 371h2v2h-2zM830 402h2v2h-2zM833 395h2v2h-2zM837 387h2v2h-2zM841 380h2v2h-2zM844 373h2v2h-2zM849 412h2v2h-2zM853 404h2v2h-2zM856 397h2v2h-2zM860 389h2v2h-2zM864 382h2v2h-2zM867 374h2v2h-2z"/><path fill="#000fe6" d="M776 366h2v2h-2zM799 369h2v2h-2zM848 366h2v2h-2zM871 366h2v2h-2z"/><path fill="#c7e600" d="M918 122h2v2h-2zM934 125h2v2h-2zM949 128h2v2h-2zM965 133h2v2h-2zM984 130h2v2h-2z"/><path fill="#d6e600" d="M937 118h2v2h-2zM953 121h2v2h-2zM968 125h2v2h-2z"/><path fill="#e6e600" d="M957 114h2v2h-2zM972 118h2v2h-2zM988 122h2v2h-2z"/><path fill="#e6c700" d="M976 111h2v2h-2z"/><path fill="#e6d600" d="M991 115h2v2h-2z"/><path fill="#e6b800" d="M995 107h2v2h-2z"/>
</g><path d="M491.5 150.8V99" stroke="#20e8f0" stroke-width="1.200"/><path d="M491.5 85l3.500 14.500h-7z" fill="#20e8f0"/><path d="M491.5 150.8L432 147.5" stroke="#10e020" stroke-width="1.200"/><path d="M435 147.5l8-2.500v5zM442 145.7h4v3.600h-4z" fill="#10e020"/><path d="M491.5 150.8L517 142.8" stroke="#f01818" stroke-width="1.300"/><ellipse cx="513.5" cy="143.8" rx="3.200" ry="2.200" fill="#f01818" transform="rotate(-18 513.5 143.8)"/><text x="493.7" y="83" font-family="Liberation Sans,sans-serif" font-weight="bold" font-size="17.500" text-anchor="middle" fill="#28d0d8" stroke="#0a1a0a" stroke-width="2.600" paint-order="stroke" stroke-linejoin="round">Z</text><text x="425" y="153.3" font-family="Liberation Sans,sans-serif" font-weight="bold" font-size="17.500" text-anchor="middle" fill="#14e018" stroke="#0a1a0a" stroke-width="2.600" paint-order="stroke" stroke-linejoin="round">N</text><text x="524.5" y="148.8" font-family="Liberation Sans,sans-serif" font-weight="bold" font-size="17.500" text-anchor="middle" fill="#e81414" stroke="#0a1a0a" stroke-width="2.600" paint-order="stroke" stroke-linejoin="round">E</text></svg>
<div class="b" style="left:180px;top:147px;width:5px;height:426px;background:#9d9b9b;border-left:1px solid #7c7c82;box-sizing:border-box"></div>
<div class="b" style="left:185px;top:147px;width:1px;height:426px;background:#5c9cc0"></div>
<div class="b" style="left:187px;top:147px;width:2px;height:426px;background:#cfe3f8"></div>
<div class="b" style="left:189px;top:147px;width:1px;height:426px;background:#5c9cc0"></div>
<div class="b" style="left:1367px;top:57px;width:1px;height:516px;background:#5c9cc0"></div>
<div class="b" style="left:1368px;top:57px;width:2px;height:516px;background:#cfe3f8"></div>
<svg class="i" style="left:26px;top:140px;" width="14" height="15" viewBox="0 0 14 15" ><path d="M7 0.500L13.500 3v8L7 14.500 0.500 11V3z" fill="#0d72aa" stroke="#2a5f7c" stroke-width=".8"/><path d="M0.500 3L7 5.800 13.500 3 7 0.500z" fill="#6fb4dc"/><path d="M0.500 3L7 5.800v8.700L0.500 11z" fill="#3a96c8"/><path d="M7 5.800L13.500 3v8L7 14.500z" fill="#0d72aa"/><path d="M7 0.500L13.500 3v8L7 14.500 0.500 11V3z" fill="none" stroke="#2a5f7c" stroke-width=".7"/></svg><svg class="i" style="left:26px;top:158px;" width="14" height="15" viewBox="0 0 14 15" ><path d="M7 0.500L13.500 3v8L7 14.500 0.500 11V3z" fill="#0d72aa" stroke="#2a5f7c" stroke-width=".8"/><path d="M0.500 3L7 5.800 13.500 3 7 0.500z" fill="#6fb4dc"/><path d="M0.500 3L7 5.800v8.700L0.500 11z" fill="#3a96c8"/><path d="M7 5.800L13.500 3v8L7 14.500z" fill="#0d72aa"/><path d="M7 0.500L13.500 3v8L7 14.500 0.500 11V3z" fill="none" stroke="#2a5f7c" stroke-width=".7"/></svg><svg class="i" style="left:26px;top:176px;" width="14" height="15" viewBox="0 0 14 15" ><path d="M7 0.500L13.500 3v8L7 14.500 0.500 11V3z" fill="#0d72aa" stroke="#2a5f7c" stroke-width=".8"/><path d="M0.500 3L7 5.800 13.500 3 7 0.500z" fill="#6fb4dc"/><path d="M0.500 3L7 5.800v8.700L0.500 11z" fill="#3a96c8"/><path d="M7 5.800L13.500 3v8L7 14.500z" fill="#0d72aa"/><path d="M7 0.500L13.500 3v8L7 14.500 0.500 11V3z" fill="none" stroke="#2a5f7c" stroke-width=".7"/></svg><svg class="i" style="left:6.3px;top:178.2px;" width="11" height="11" viewBox="0 0 11 11" ><path d="M0 5.500h11M5.500 0v11" stroke="#3c3c3c" stroke-width="1.500"/></svg><svg class="i" style="left:26px;top:194px;" width="14" height="15" viewBox="0 0 14 15" ><path d="M7 0.500L13.500 3v8L7 14.500 0.500 11V3z" fill="#0d72aa" stroke="#2a5f7c" stroke-width=".8"/><path d="M0.500 3L7 5.800 13.500 3 7 0.500z" fill="#6fb4dc"/><path d="M0.500 3L7 5.800v8.700L0.500 11z" fill="#3a96c8"/><path d="M7 5.800L13.500 3v8L7 14.500z" fill="#0d72aa"/><path d="M7 0.500L13.500 3v8L7 14.500 0.500 11V3z" fill="none" stroke="#2a5f7c" stroke-width=".7"/></svg><svg class="i" style="left:6.3px;top:196.2px;" width="11" height="11" viewBox="0 0 11 11" ><path d="M0 5.500h11" stroke="#3c3c3c" stroke-width="1.500"/></svg><svg class="i" style="left:46.5px;top:212.3px;" width="14" height="14" viewBox="0 0 14 14" ><rect x=".5" y=".5" width="13" height="13" fill="#fff" stroke="#8a9aa8" stroke-width="1"/><g fill="#1a78b8"><circle cx="4.300" cy="4.300" r="2"/><circle cx="10" cy="4.700" r="1.700"/><circle cx="7.200" cy="9.800" r="2"/></g></svg><svg class="i" style="left:46.5px;top:230.3px;" width="14" height="14" viewBox="0 0 14 14" ><rect x=".5" y=".5" width="13" height="13" fill="#fff" stroke="#8a9aa8" stroke-width="1"/><path d="M3 3l8 8M11 3l-8 8M3 3h8v8h-8z" stroke="#1a78b8" stroke-width="1.100" fill="none"/><g fill="#1a78b8"><rect x="2" y="2" width="3" height="3"/><rect x="9" y="2" width="3" height="3"/><rect x="2" y="9" width="3" height="3"/><rect x="9" y="9" width="3" height="3"/><rect x="5.500" y="5.500" width="3" height="3"/></g></svg><svg class="i" style="left:46.5px;top:248.3px;" width="14" height="14" viewBox="0 0 14 14" ><rect x=".5" y=".5" width="13" height="13" fill="#fff" stroke="#8a9aa8" stroke-width="1"/><path d="M2.500 11.500C3 7 7 3 11.500 2.500v9z" fill="#8cc8e8" stroke="#1a78b8" stroke-width="1.100"/></svg><svg class="i" style="left:46.5px;top:266.3px;" width="14" height="14" viewBox="0 0 14 14" ><rect x=".5" y=".5" width="13" height="13" fill="#fff" stroke="#8a9aa8" stroke-width="1"/><path d="M2.500 11.500C3 7 7 3 11.500 2.500v9z" fill="#8cc8e8" stroke="#1a78b8" stroke-width="1.100"/></svg><svg class="i" style="left:46.5px;top:284.3px;" width="14" height="14" viewBox="0 0 14 14" ><rect x=".5" y=".5" width="13" height="13" fill="#fff" stroke="#8a9aa8" stroke-width="1"/><g fill="#1a78b8"><circle cx="4.300" cy="4.300" r="2"/><circle cx="10" cy="4.700" r="1.700"/><circle cx="7.200" cy="9.800" r="2"/></g></svg><svg class="i" style="left:46.5px;top:302.3px;" width="14" height="14" viewBox="0 0 14 14" ><rect x=".5" y=".5" width="13" height="13" fill="#fff" stroke="#8a9aa8" stroke-width="1"/><path d="M3 3l8 8M11 3l-8 8M3 3h8v8h-8z" stroke="#1a78b8" stroke-width="1.100" fill="none"/><g fill="#1a78b8"><rect x="2" y="2" width="3" height="3"/><rect x="9" y="2" width="3" height="3"/><rect x="2" y="9" width="3" height="3"/><rect x="9" y="9" width="3" height="3"/><rect x="5.500" y="5.500" width="3" height="3"/></g></svg><svg class="i" style="left:46.5px;top:320.3px;" width="14" height="14" viewBox="0 0 14 14" ><rect x=".5" y=".5" width="13" height="13" fill="#fff" stroke="#8a9aa8" stroke-width="1"/><path d="M2.500 11.500C3 7 7 3 11.500 2.500v9z" fill="#8cc8e8" stroke="#1a78b8" stroke-width="1.100"/></svg><svg class="i" style="left:26px;top:338px;" width="14" height="15" viewBox="0 0 14 15" ><path d="M7 0.500L13.500 3v8L7 14.500 0.500 11V3z" fill="#0d72aa" stroke="#2a5f7c" stroke-width=".8"/><path d="M0.500 3L7 5.800 13.500 3 7 0.500z" fill="#6fb4dc"/><path d="M0.500 3L7 5.800v8.700L0.500 11z" fill="#3a96c8"/><path d="M7 5.800L13.500 3v8L7 14.500z" fill="#0d72aa"/><path d="M7 0.500L13.500 3v8L7 14.500 0.500 11V3z" fill="none" stroke="#2a5f7c" stroke-width=".7"/></svg><svg class="i" style="left:26px;top:356px;" width="14" height="15" viewBox="0 0 14 15" ><path d="M7 0.500L13.500 3v8L7 14.500 0.500 11V3z" fill="#0d72aa" stroke="#2a5f7c" stroke-width=".8"/><path d="M0.500 3L7 5.800 13.500 3 7 0.500z" fill="#6fb4dc"/><path d="M0.500 3L7 5.800v8.700L0.500 11z" fill="#3a96c8"/><path d="M7 5.800L13.500 3v8L7 14.500z" fill="#0d72aa"/><path d="M7 0.500L13.500 3v8L7 14.500 0.500 11V3z" fill="none" stroke="#2a5f7c" stroke-width=".7"/></svg><svg class="i" style="left:26px;top:374px;" width="14" height="15" viewBox="0 0 14 15" ><path d="M7 0.500L13.500 3v8L7 14.500 0.500 11V3z" fill="#0d72aa" stroke="#2a5f7c" stroke-width=".8"/><path d="M0.500 3L7 5.800 13.500 3 7 0.500z" fill="#6fb4dc"/><path d="M0.500 3L7 5.800v8.700L0.500 11z" fill="#3a96c8"/><path d="M7 5.800L13.500 3v8L7 14.500z" fill="#0d72aa"/><path d="M7 0.500L13.500 3v8L7 14.500 0.500 11V3z" fill="none" stroke="#2a5f7c" stroke-width=".7"/></svg><svg class="i" style="left:26px;top:392px;" width="14" height="15" viewBox="0 0 14 15" ><path d="M7 0.500L13.500 3v8L7 14.500 0.500 11V3z" fill="#0d72aa" stroke="#2a5f7c" stroke-width=".8"/><path d="M0.500 3L7 5.800 13.500 3 7 0.500z" fill="#6fb4dc"/><path d="M0.500 3L7 5.800v8.700L0.500 11z" fill="#3a96c8"/><path d="M7 5.800L13.500 3v8L7 14.500z" fill="#0d72aa"/><path d="M7 0.500L13.500 3v8L7 14.500 0.500 11V3z" fill="none" stroke="#2a5f7c" stroke-width=".7"/></svg><svg class="i" style="left:6.3px;top:394.2px;" width="11" height="11" viewBox="0 0 11 11" ><path d="M0 5.500h11M5.500 0v11" stroke="#3c3c3c" stroke-width="1.500"/></svg><svg class="i" style="left:26px;top:410px;" width="14" height="15" viewBox="0 0 14 15" ><path d="M7 0.500L13.500 3v8L7 14.500 0.500 11V3z" fill="#0d72aa" stroke="#2a5f7c" stroke-width=".8"/><path d="M0.500 3L7 5.800 13.500 3 7 0.500z" fill="#6fb4dc"/><path d="M0.500 3L7 5.800v8.700L0.500 11z" fill="#3a96c8"/><path d="M7 5.800L13.500 3v8L7 14.500z" fill="#0d72aa"/><path d="M7 0.500L13.500 3v8L7 14.500 0.500 11V3z" fill="none" stroke="#2a5f7c" stroke-width=".7"/></svg><svg class="i" style="left:26px;top:428px;" width="14" height="15" viewBox="0 0 14 15" ><path d="M7 0.500L13.500 3v8L7 14.500 0.500 11V3z" fill="#0d72aa" stroke="#2a5f7c" stroke-width=".8"/><path d="M0.500 3L7 5.800 13.500 3 7 0.500z" fill="#6fb4dc"/><path d="M0.500 3L7 5.800v8.700L0.500 11z" fill="#3a96c8"/><path d="M7 5.800L13.500 3v8L7 14.500z" fill="#0d72aa"/><path d="M7 0.500L13.500 3v8L7 14.500 0.500 11V3z" fill="none" stroke="#2a5f7c" stroke-width=".7"/></svg><svg class="i" style="left:26px;top:446px;" width="14" height="15" viewBox="0 0 14 15" ><path d="M7 0.500L13.500 3v8L7 14.500 0.500 11V3z" fill="#0d72aa" stroke="#2a5f7c" stroke-width=".8"/><path d="M0.500 3L7 5.800 13.500 3 7 0.500z" fill="#6fb4dc"/><path d="M0.500 3L7 5.800v8.700L0.500 11z" fill="#3a96c8"/><path d="M7 5.800L13.500 3v8L7 14.500z" fill="#0d72aa"/><path d="M7 0.500L13.500 3v8L7 14.500 0.500 11V3z" fill="none" stroke="#2a5f7c" stroke-width=".7"/></svg><svg class="i" style="left:26px;top:464px;" width="14" height="15" viewBox="0 0 14 15" ><path d="M7 0.500L13.500 3v8L7 14.500 0.500 11V3z" fill="#0d72aa" stroke="#2a5f7c" stroke-width=".8"/><path d="M0.500 3L7 5.800 13.500 3 7 0.500z" fill="#6fb4dc"/><path d="M0.500 3L7 5.800v8.700L0.500 11z" fill="#3a96c8"/><path d="M7 5.800L13.500 3v8L7 14.500z" fill="#0d72aa"/><path d="M7 0.500L13.500 3v8L7 14.500 0.500 11V3z" fill="none" stroke="#2a5f7c" stroke-width=".7"/></svg><svg class="i" style="left:26px;top:482px;" width="14" height="15" viewBox="0 0 14 15" ><path d="M7 0.500L13.500 3v8L7 14.500 0.500 11V3z" fill="#0d72aa" stroke="#2a5f7c" stroke-width=".8"/><path d="M0.500 3L7 5.800 13.500 3 7 0.500z" fill="#6fb4dc"/><path d="M0.500 3L7 5.800v8.700L0.500 11z" fill="#3a96c8"/><path d="M7 5.800L13.500 3v8L7 14.500z" fill="#0d72aa"/><path d="M7 0.500L13.500 3v8L7 14.500 0.500 11V3z" fill="none" stroke="#2a5f7c" stroke-width=".7"/></svg><svg class="i" style="left:26px;top:500px;" width="14" height="15" viewBox="0 0 14 15" ><path d="M7 0.500L13.500 3v8L7 14.500 0.500 11V3z" fill="#0d72aa" stroke="#2a5f7c" stroke-width=".8"/><path d="M0.500 3L7 5.800 13.500 3 7 0.500z" fill="#6fb4dc"/><path d="M0.500 3L7 5.800v8.700L0.500 11z" fill="#3a96c8"/><path d="M7 5.800L13.500 3v8L7 14.500z" fill="#0d72aa"/><path d="M7 0.500L13.500 3v8L7 14.500 0.500 11V3z" fill="none" stroke="#2a5f7c" stroke-width=".7"/></svg><svg class="i" style="left:26px;top:518px;" width="14" height="15" viewBox="0 0 14 15" ><path d="M7 0.500L13.500 3v8L7 14.500 0.500 11V3z" fill="#f5c030" stroke="#a08030" stroke-width=".8"/><path d="M0.500 3L7 5.800 13.500 3 7 0.500z" fill="#ffe890"/><path d="M0.500 3L7 5.800v8.700L0.500 11z" fill="#ffd860"/><path d="M7 5.800L13.500 3v8L7 14.500z" fill="#f5c030"/><path d="M7 0.500L13.500 3v8L7 14.500 0.500 11V3z" fill="none" stroke="#a08030" stroke-width=".7"/></svg><svg class="i" style="left:6.3px;top:520.2px;" width="11" height="11" viewBox="0 0 11 11" ><path d="M0 5.500h11M5.500 0v11" stroke="#3c3c3c" stroke-width="1.500"/></svg><svg class="i" style="left:26px;top:536px;" width="14" height="15" viewBox="0 0 14 15" ><path d="M1 5h12l-1.500 9.500h-9z" fill="#d0d0d0" stroke="#999" stroke-width=".6"/><path d="M5 5l.5 9.500M9 5l-.5 9.500" stroke="#eee" stroke-width="1.200"/><circle cx="4" cy="3.500" r="1.600" fill="#d03030"/><circle cx="7" cy="2.800" r="1.600" fill="#3a8fd0"/><circle cx="10" cy="3.500" r="1.600" fill="#40a040"/></svg><svg class="i" style="left:6.3px;top:538.2px;" width="11" height="11" viewBox="0 0 11 11" ><path d="M0 5.500h11M5.500 0v11" stroke="#3c3c3c" stroke-width="1.500"/></svg>
<div class="b" style="left:0px;top:0px;width:1px;height:147px;background:#1c1c1e"></div>
<div class="b" style="left:0px;top:147px;width:2px;height:426px;background:linear-gradient(90deg,#606060,#86868e)"></div>
<div class="b" style="left:1px;top:6px;width:1370px;height:27px;background:#333"></div>
<div class="b" style="left:51px;top:33px;width:1320px;height:22px;background:#dee8f5"></div>
<div class="b" style="left:2px;top:55px;width:1365px;height:2px;background:linear-gradient(#a9bfdb,#c9d8ea)"></div>
<div class="b" style="left:2px;top:57px;width:1364.5px;height:89px;background:linear-gradient(#fcfdff 0%,#f3f6fc 40%,#ecf1fa 100%);border-left:1px solid #dce6f2;box-sizing:border-box"></div>
<div class="b" style="left:2px;top:146px;width:1365px;height:1px;background:#aabfd6"></div>
<div class="b" style="left:1366.5px;top:55.5px;width:4.5px;height:23px;background:#8f8f8f"></div>
<div class="b" style="left:1px;top:6px;width:50px;height:49px;background:#4b9b33"></div>
<svg class="i" style="left:1px;top:6px;" width="50" height="49" viewBox="0 0 50 49" ><g fill="none" stroke="#fff" stroke-width="3.100" stroke-linecap="butt"><path d="M7.500 36C14 25 22 13 30.500 12.500C35 12.300 37.500 16 37.800 21"/><path d="M41.500 36C43.500 29 44 19.500 38.500 19C33 18.500 24 27.500 23.500 32.500C23 36.800 28 36.300 32 33.500C36 30.500 38 25 37.800 20"/></g></svg>
<svg class="i" style="left:486px;top:6px;" width="142" height="27" viewBox="0 0 142 27" ><path d="M0 27C12 27 18 2.500 30 2.500H132c4 0 7 2 7 6.500V27z" fill="#dee8f5"/><path d="M2 26.500C13 25 18.500 2.500 30 2.500H132c4 0 7 2 7 6.500V27" fill="none" stroke="#f6f9fd" stroke-width="1"/></svg>
<div class="b" style="left:514px;top:13px;width:16px;height:16px;background:#ba202a"></div>
<svg class="i" style="left:514px;top:13px;" width="16" height="16" viewBox="0 0 16 16" ><path d="M4.600 11.800L7.700 3.900l4.200 4.700z" fill="none" stroke="#fff" stroke-width="1.400" stroke-linejoin="miter"/></svg>
<svg class="i" style="left:604.5px;top:17px;" width="9" height="8" viewBox="0 0 9 8" ><path d="M1.200 1l6.600 6M7.800 1L1.200 7" stroke="#787878" stroke-width="2.300" stroke-linecap="round"/></svg>
<div class="b" style="left:61.5px;top:34px;width:53.5px;height:23px;background:linear-gradient(#f8fafd,#fdfeff);border:1px solid #b3c7e0;border-bottom:none;border-radius:3px 3px 0 0;box-sizing:border-box"></div>
<div class="b" style="left:637px;top:35px;width:44px;height:20px;background:linear-gradient(#a8d0a4,#cfe4d4 75%,#dde9ee);border-radius:3px 3px 0 0"></div>
<svg class="i" style="left:1229px;top:37px;" width="15" height="15" viewBox="0 0 15 15" ><circle cx="9.500" cy="5.500" r="3.800" fill="none" stroke="#555" stroke-width="1.800"/><path d="M6.800 8.200L1.500 13.500" stroke="#555" stroke-width="2.400"/></svg>
<div class="b" style="left:1247px;top:35.5px;width:100px;height:17px;background:#eaf0f8;border:1px solid #aab4c4;box-sizing:border-box"></div>
<svg class="i" style="left:1349px;top:38px;" width="20" height="13" viewBox="0 0 20 13" ><path d="M0 6.800L7.500 6v1.600z" fill="#333"/><path d="M7.500 2.500h2l2 1.500h4.500l1.500-2.500h1.500v10.500h-1.500L16 9.500h-4.500l-2 1.500h-2z" fill="#d6d6d6" stroke="#505050" stroke-width="1.100"/></svg>
<svg class="i" style="left:58px;top:10px;" width="22" height="22" viewBox="0 0 22 22" ><path d="M0.900 7L8.900 2.200v10.100z" fill="#fff"/><path d="M8.500 6.800H18.300L8.800 17.400" fill="none" stroke="#fff" stroke-width="3.100" stroke-linecap="round" stroke-linejoin="miter"/></svg><svg class="i" style="left:82px;top:10px;" width="22" height="22" viewBox="0 0 22 22" ><path d="M19.100 14.600L10.400 9.900v9.300z" fill="#c6c6c6"/><path d="M12.600 3.400L3.600 14.600H11" fill="none" stroke="#c6c6c6" stroke-width="3.100" stroke-linecap="round" stroke-linejoin="miter"/></svg><svg class="i" style="left:105px;top:10px;" width="24" height="22" viewBox="0 0 24 22" ><g fill="none" stroke="#fff" stroke-width="3"><path d="M7.400 4.700A6.300 6.300 0 0 1 17.400 9.800"/><path d="M14.900 14.900A6.300 6.300 0 0 1 4.700 10.800"/></g><path d="M0.600 11.700h6.800L4 4.800z" fill="#fff"/><path d="M15.200 9.200h6.200L18.300 15.800z" fill="#fff"/></svg><svg class="i" style="left:130px;top:10px;" width="20" height="20" viewBox="0 0 20 20" ><rect width="20" height="20" fill="#045422"/><rect x="5.200" y="1" width="9.600" height="17.700" fill="#4f8a64" stroke="#f0f6f0" stroke-width="1.100"/><rect x="6.8" y="3.3" width="2.300" height="1.300" fill="#e4f0e6"/><rect x="10.2" y="3.3" width="2.300" height="1.300" fill="#e4f0e6"/><rect x="6.8" y="5.9" width="2.300" height="1.300" fill="#e4f0e6"/><rect x="10.2" y="5.9" width="2.300" height="1.300" fill="#e4f0e6"/><rect x="6.8" y="8.7" width="2.300" height="1.300" fill="#e4f0e6"/><rect x="10.2" y="8.7" width="2.300" height="1.300" fill="#e4f0e6"/><rect x="6.8" y="11.4" width="2.300" height="1.300" fill="#e4f0e6"/><rect x="10.2" y="11.4" width="2.300" height="1.300" fill="#e4f0e6"/><rect x="6.8" y="14.2" width="2.300" height="1.300" fill="#e4f0e6"/><rect x="10.2" y="14.2" width="2.300" height="1.300" fill="#e4f0e6"/><circle cx="13.700" cy="13.700" r="3.600" fill="#045422"/><circle cx="13.700" cy="13.700" r="2.500" fill="#d8e8e0" stroke="#fff" stroke-width="1.300"/><path d="M15.700 15.700l3.600 3.300" stroke="#045422" stroke-width="3.400"/><path d="M15.700 15.700l3.400 3.100" stroke="#fff" stroke-width="1.800"/></svg><svg class="i" style="left:154px;top:10px;" width="20" height="20" viewBox="0 0 20 20" ><rect width="20" height="20" fill="#045422"/><rect x="1.200" y="4" width="17.500" height="12" fill="#fff"/><rect x="2.800" y="5.100" width="4.400" height="2.300" fill="#0a6ab0"/><rect x="9" y="5.100" width="8.600" height="2.300" fill="#4aa83a"/><rect x="2.800" y="8.900" width="4.400" height="2.300" fill="#0a6ab0"/><rect x="9" y="8.900" width="8.600" height="2.300" fill="#4aa83a"/><rect x="2.800" y="12.600" width="4.400" height="2.300" fill="#0a6ab0"/><rect x="9" y="12.600" width="8.600" height="2.300" fill="#4aa83a"/></svg><svg class="i" style="left:178px;top:10px;" width="20" height="20" viewBox="0 0 20 20" ><rect width="20" height="20" fill="#045422"/><rect x="1.600" y="1.600" width="14.200" height="13.700" rx="1" fill="none" stroke="#fff" stroke-width="1.400"/><path d="M4.400 5.600h1.700M4.400 9.400h1.700M4.400 12.800h1.700" stroke="#e8d8e0" stroke-width="1.700"/><path d="M7.700 5.600h5.800M7.700 9.400h5.800M7.700 12.800h3" stroke="#fff" stroke-width="1.300"/><circle cx="15.300" cy="15.100" r="5.400" fill="#045422"/><g transform="translate(15.300 15.100)" fill="#fff"><rect x="-1.200" y="-4.400" width="2.400" height="8.800"/><rect x="-1.200" y="-4.400" width="2.400" height="8.800" transform="rotate(60)"/><rect x="-1.200" y="-4.400" width="2.400" height="8.800" transform="rotate(120)"/><circle r="3.300"/></g><circle cx="15.300" cy="15.100" r="1.800" fill="#045422"/></svg><svg class="i" style="left:202px;top:10px;" width="20" height="20" viewBox="0 0 20 20" ><rect width="20" height="20" fill="#045422"/><rect x="4.600" y="4.700" width="11.200" height="11" fill="none" stroke="#fff" stroke-width="1.200"/><path d="M4.600 7.300h11.200" stroke="#fff" stroke-width="1"/><path d="M6.300 9.700h3.400M6.300 11.700h3.400M6.300 13.700h3.400" stroke="#dfeee2" stroke-width="1.200"/><path d="M10.800 9.700h3.400M10.800 11.700h3.400M10.800 13.700h3.400" stroke="#9cc4a8" stroke-width="1.200"/></svg><svg class="i" style="left:226px;top:10px;" width="20" height="20" viewBox="0 0 20 20" ><rect width="20" height="20" fill="#045422"/><path d="M9 2.400h2.300v4.800h2.900L10 12.300 5.700 7.200H9z" fill="#fff"/><path d="M3.400 11.200v4h13.400v-4" fill="none" stroke="#fff" stroke-width="1.900"/></svg><svg class="i" style="left:250px;top:10px;" width="20" height="20" viewBox="0 0 20 20" ><rect width="20" height="20" fill="#045422"/><path d="M2.600 15L8.700 5.200l3.300 5.300 1.900-1.800L17.300 15z" fill="#fff"/><circle cx="13.500" cy="5.600" r="2.100" fill="#fff"/><path d="M12 10.500l2.600 4.500" stroke="#d0c8d0" stroke-width=".7"/></svg><svg class="i" style="left:274px;top:10px;will-change:transform" width="20" height="20" viewBox="0 0 20 20" ><rect width="20" height="20" fill="#045422"/><text x="10" y="15.400" font-family="Liberation Serif,serif" font-size="15.500" font-weight="bold" fill="#fff" text-anchor="middle">A</text></svg><svg class="i" style="left:298px;top:10px;" width="20" height="20" viewBox="0 0 20 20" ><rect width="20" height="20" fill="#045422"/><g fill="#4f8a64" stroke="#e4efe6" stroke-width="1.500"><rect x="6.600" y="2" width="6.600" height="3.600"/><rect x="6.600" y="8.200" width="6.600" height="3.600"/><rect x="6.600" y="14.400" width="6.600" height="3.800"/></g><path d="M5 10.400H3v5.200h2M15.300 4.600h2v4.800h-2" fill="none" stroke="#e4efe6" stroke-width="1.300"/></svg><svg class="i" style="left:322px;top:10px;" width="20" height="20" viewBox="0 0 20 20" ><rect width="20" height="20" fill="#0a6ea8"/><circle cx="10.100" cy="7.100" r="2.100" fill="none" stroke="#fff" stroke-width="1.500"/><path d="M10.100 9.300v6.700" stroke="#fff" stroke-width="2.100"/><path d="M6.800 10.600h6.400" stroke="#fff" stroke-width="1.400"/></svg><svg class="i" style="left:346px;top:10px;" width="20" height="20" viewBox="0 0 20 20" ><rect width="20" height="20" fill="#0a6ea8"/><path d="M4.300 7.800L8.300 4.200 15.200 5.700 16 11.500 12 15.900 5.400 13.700z" fill="#e4e0e0"/><path d="M4.300 7.800L8.300 4.200 15.200 5.700 11.300 9.600z" fill="#f6f3f3"/><path d="M4.300 7.800L11.300 9.600 12 15.900 5.400 13.700z" fill="#e4e0e0"/><path d="M11.300 9.600L15.200 5.700 16 11.500 12 15.900z" fill="#d0cccc"/></svg><svg class="i" style="left:370px;top:10px;" width="20" height="20" viewBox="0 0 20 20" ><rect width="20" height="20" fill="#0a6ea8"/><path d="M4.700 4.900h6.500l4.200 4.600v5.700H4.700z" fill="none" stroke="#fff" stroke-width="1.500"/><path d="M7 7.400v6h6.700z" fill="#cfe4f2" stroke="#e8f2fa" stroke-width=".8"/><path d="M8.300 10.400v1.800h2z" fill="#0a6ea8"/></svg><svg class="i" style="left:394px;top:10px;" width="20" height="20" viewBox="0 0 20 20" ><rect width="20" height="20" fill="#0a6ea8"/><g transform="skewY(-6) translate(0,2)"><rect x="4" y="3" width="3.500" height="4" fill="#d03a2a"/><rect x="8" y="2.500" width="3.500" height="4.500" fill="#f0a030"/><rect x="12" y="2" width="4" height="5" fill="#f6d040"/><rect x="4" y="7.500" width="3.500" height="4" fill="#2a5fa8"/><rect x="8" y="7.500" width="3.500" height="4" fill="#35a0d8"/><rect x="12" y="7.500" width="4" height="4" fill="#9fd0ee"/><rect x="4" y="12" width="3.500" height="4" fill="#2f7f3a"/><rect x="8" y="12" width="3.500" height="4.500" fill="#5db85d"/><rect x="12" y="12" width="4" height="5" fill="#b4dc8c"/></g></svg><svg class="i" style="left:418px;top:10px;" width="20" height="20" viewBox="0 0 20 20" ><rect width="20" height="20" fill="#0a6ea8"/><path d="M2.200 4.900h15.700v4.800h-2.200V7.100H4.400v2.600H2.200z" fill="#fff"/><path d="M5.500 7.100h9.100v5.100L5.800 14.900z" fill="#fff"/><rect x="5.500" y="7.100" width="9.100" height="1.700" fill="#c4c0c0"/></svg><svg class="i" style="left:442px;top:10px;" width="20" height="20" viewBox="0 0 20 20" ><rect width="20" height="20" fill="#0a6ea8"/><path d="M5.200 5.300L9.900 9.600 5.200 13.700" fill="none" stroke="#fff" stroke-width="2.200"/><path d="M9.900 14.300h5.200" stroke="#fff" stroke-width="1.600"/></svg><svg class="i" style="left:466px;top:10px;" width="20" height="20" viewBox="0 0 20 20" ><rect width="20" height="20" fill="#0a6ea8"/><rect x="4.400" y="4.800" width="11.200" height="10.500" fill="none" stroke="#fff" stroke-width="1.300"/><path d="M4.400 5.200h11.200" stroke="#f4e8e8" stroke-width="1.800"/><path d="M6.200 8.300l3.300 1.800-3.300 1.800" fill="none" stroke="#fff" stroke-width="1.300"/><path d="M10 13h4" stroke="#fff" stroke-width="1.300"/></svg>
<svg class="i" style="left:1170px;top:11px;" width="16" height="16" viewBox="0 0 16 16" ><defs><linearGradient id="wg" x1="0" y1="1" x2="1" y2="0"><stop offset="0" stop-color="#999" stop-opacity="0"/><stop offset=".6" stop-color="#aaa" stop-opacity=".8"/><stop offset="1" stop-color="#e8e8e8"/></linearGradient></defs><path d="M3.200 12.500L12.800 3.200" stroke="url(#wg)" stroke-width="1.800"/><path d="M1.400 7.500L7 2.300" stroke="url(#wg)" stroke-width="1.500" opacity=".7"/><path d="M8.100 14L13.800 9" stroke="url(#wg)" stroke-width="1.500" opacity=".7"/><path d="M10.200 2h4v4z" fill="#f4f4f4"/><path d="M5.200 1.600h2.800v2.800zM11.800 8.300h2.800v2.800z" fill="#9a9a9a"/></svg><svg class="i" style="left:1193.4px;top:10.5px;" width="17" height="17" viewBox="0 0 17 17" ><g transform="translate(8.500 8.500)"><g fill="#c2c2c2"><rect x="-2" y="-7.600" width="4" height="15.200" rx="1"/><rect x="-2" y="-7.600" width="4" height="15.200" rx="1" transform="rotate(60)"/><rect x="-2" y="-7.600" width="4" height="15.200" rx="1" transform="rotate(120)"/></g><circle r="5.700" fill="#c2c2c2"/><circle r="3.200" fill="#333"/></g></svg><svg class="i" style="left:1218px;top:13.6px;" width="16" height="10.5" viewBox="0 0 16 10.5" ><rect width="16" height="10.500" fill="#cacaca"/><path d="M0 0h16L8 6z" fill="#a6a6a6"/><path d="M0 0l8 6L16 0" fill="none" stroke="#333" stroke-width="1.200"/></svg><div class="b" style="left:1269px;top:18.5px;width:14px;height:3.5px;background:#c8c8c8"></div><div class="b" style="left:1297px;top:10px;width:14px;height:12px;border:2px solid #c8c8c8;border-top-width:3px;box-sizing:border-box"></div><div class="b" style="left:1318px;top:6px;width:49px;height:21px;background:#e02400"></div><svg class="i" style="left:1335px;top:9px;" width="15" height="15" viewBox="0 0 15 15" ><path d="M1.500 1.500l12 12M13.500 1.500l-12 12" stroke="#f2c4bc" stroke-width="2.600"/></svg>
<div class="b" style="left:30px;top:61px;width:132.5px;height:20px;background:#fff;border:1px solid #abc1de;box-sizing:border-box"></div><div class="b" style="left:30px;top:83px;width:156.5px;height:20px;background:#fff;border:1px solid #abc1de;box-sizing:border-box"></div><svg class="i" style="left:152px;top:69.5px;" width="7" height="4" viewBox="0 0 7 4" ><path d="M0 0h7L3.5 4z" fill="#111"/></svg><svg class="i" style="left:176px;top:91.5px;" width="7" height="4" viewBox="0 0 7 4" ><path d="M0 0h7L3.5 4z" fill="#111"/></svg><div class="b" style="left:12px;top:70px;width:16px;height:2.4px;background:#1b6ca8"></div><div class="b" style="left:33px;top:70px;width:16px;height:2px;background:#6db3dc"></div><div class="b" style="left:12px;top:92px;width:17px;height:2px;background:repeating-linear-gradient(90deg,#5aa4d4 0 1px,transparent 1px 3px)"></div><div class="b" style="left:33px;top:92px;width:16px;height:2px;background:repeating-linear-gradient(90deg,#6aaed6 0 4px,transparent 4px 6px)"></div><div class="b" style="left:194px;top:63px;width:1px;height:75px;background:#b9cde5"></div><div class="b" style="left:288px;top:63px;width:1px;height:75px;background:#b9cde5"></div><div class="b" style="left:354px;top:63px;width:1px;height:75px;background:#b9cde5"></div><div class="b" style="left:464px;top:63px;width:1px;height:75px;background:#b9cde5"></div><div class="b" style="left:954px;top:63px;width:1px;height:75px;background:#b9cde5"></div><div class="b" style="left:1069px;top:63px;width:1px;height:75px;background:#b9cde5"></div><div class="b" style="left:1239px;top:63px;width:1px;height:75px;background:#b9cde5"></div><div class="b" style="left:1336px;top:63px;width:1px;height:75px;background:#b9cde5"></div><svg class="i" style="left:208px;top:65px;" width="12" height="12" viewBox="0 0 12 12" ><path d="M11.500 3.200V.500H.500v11H7.200" fill="none" stroke="#8c8c8c" stroke-width="1"/><path d="M4.300 4.300L9 9" stroke="#2180c0" stroke-width="2.600"/><path d="M12 12V5.800L5.800 12z" fill="#1b6ca8"/></svg><svg class="i" style="left:208px;top:87px;" width="12" height="12" viewBox="0 0 12 12" ><path d="M4.500 .500H.500v11h11V7" fill="none" stroke="#8c8c8c" stroke-width="1"/><path d="M4.500 7.500L9 3" stroke="#2180c0" stroke-width="2.600"/><path d="M12 0v6.200L5.800 0z" fill="#1b6ca8"/></svg><svg class="i" style="left:209.5px;top:108px;" width="13" height="15" viewBox="0 0 13 15" ><g fill="#fff" stroke="#1b6ca8" stroke-width="1.300"><path d="M1 3v9c0 3 11 3 11 0V3"/><ellipse cx="6.500" cy="3" rx="5.500" ry="2.200"/><path d="M1 6c0 3 11 3 11 0M1 9c0 3 11 3 11 0" fill="none"/></g></svg><svg class="i" style="left:271px;top:113.5px;" width="7" height="4" viewBox="0 0 7 4" ><path d="M0 0h7L3.5 4z" fill="#111"/></svg><svg class="i" style="left:301px;top:63px;" width="14" height="16" viewBox="0 0 14 16" ><path d="M3 .500h7l3.500 3.500v11H3z" fill="#fdfdfd" stroke="#a0a0a0"/><path d="M10 .500v3.500h3.500" fill="none" stroke="#a0a0a0"/><path d="M1.500 6l6 7M8 6l-6 7" stroke="#9a9a9a" stroke-width="1.100"/><circle cx="2.200" cy="13.500" r="1.600" fill="#fff" stroke="#9a9a9a"/><circle cx="7.300" cy="13.500" r="1.600" fill="#fff" stroke="#9a9a9a"/></svg><svg class="i" style="left:301px;top:86px;" width="14" height="15" viewBox="0 0 14 15" ><path d="M4.500 .500h5l3.500 3.500v7h-8.500z" fill="#fff" stroke="#9a9a9a"/><path d="M.500 3.500h5l3 3v8h-8z" fill="#fff" stroke="#9a9a9a"/></svg><svg class="i" style="left:301px;top:108px;" width="14" height="15" viewBox="0 0 14 15" ><path d="M.500 1.500h10v12h-10z" fill="#9a9a9a"/><rect x="3" y=".5" width="5" height="2.500" fill="#ccc" stroke="#888" stroke-width=".6"/><path d="M5.500 5.500h5l3 3v6h-8z" fill="#fff" stroke="#8a8a8a"/></svg><svg class="i" style="left:366.5px;top:64px;" width="14" height="14" viewBox="0 0 14 14" ><circle cx="7" cy="7" r="6.800" fill="#8f8f8f"/><path d="M4.200 4.200l5.600 5.600M9.800 4.200l-5.600 5.600" stroke="#fff" stroke-width="2.200"/></svg><svg class="i" style="left:366px;top:85px;" width="16" height="16" viewBox="0 0 16 16" ><path d="M3.500 0v12.500H16M0 3.500h12.500V16" fill="none" stroke="#8c8c8c" stroke-width="2"/><path d="M15 1l-10.500 10.500" stroke="#8c8c8c" stroke-width="1.400"/></svg><svg class="i" style="left:366px;top:107px;" width="17" height="15" viewBox="0 0 17 15" ><path d="M.8 4Q.8 .8 4 1.200L14.500 4Q16.800 5.700 14.500 7.600L4 14Q.8 15 .8 12Z" fill="none" stroke="#1b7ab8" stroke-width="1.300" stroke-dasharray="3.200 1.800"/><path d="M3.400 4.600L14 6.300 2.800 12.500z" fill="#fff" stroke="#d03038" stroke-width="1.300" stroke-linejoin="round"/></svg><div class="b" style="left:492px;top:67px;width:24px;height:24px;background:linear-gradient(#c4c4c4,#5c5c5c)"></div><svg class="i" style="left:523px;top:116px;" width="7" height="4" viewBox="0 0 7 4" ><path d="M0 0h7L3.5 4z" fill="#777"/></svg><div class="b" style="left:540px;top:65px;width:12px;height:12px;background:#bdbdbd"></div><div class="b" style="left:602px;top:61.5px;width:41px;height:19px;background:#e9e9ea;border:1px solid #d0d2d6;box-sizing:border-box"></div><svg class="i" style="left:631px;top:69.5px;" width="7" height="4" viewBox="0 0 7 4" ><path d="M0 0h7L3.5 4z" fill="#999"/></svg><svg class="i" style="left:538px;top:85px;" width="16" height="16" viewBox="0 0 16 16" ><defs><pattern id="chk" width="3" height="3" patternUnits="userSpaceOnUse"><rect width="3" height="3" fill="#fff"/><rect width="1.500" height="1.500" fill="#9a9a9a"/><rect x="1.500" y="1.500" width="1.500" height="1.500" fill="#9a9a9a"/></pattern><radialGradient id="sph" cx=".62" cy=".35" r=".75"><stop offset="0" stop-color="#c8c8c8"/><stop offset=".5" stop-color="#8a8a8a"/><stop offset="1" stop-color="#4a4a4a"/></radialGradient></defs><rect width="16" height="16" fill="url(#chk)"/><circle cx="8" cy="8" r="6.300" fill="url(#sph)"/></svg><div class="b" style="left:602px;top:92px;width:99px;height:2px;background:#d2d2d2;border-top:1px solid #c0c0c0;box-sizing:border-box"></div><div class="b" style="left:604.5px;top:82.5px;width:11px;height:20.5px;background:#f0f0f0;border:1px solid #c4c4c4;box-sizing:border-box;border-radius:1px"></div><svg class="i" style="left:538px;top:108px;" width="16" height="15" viewBox="0 0 16 15" ><path d="M.3 .3L11 5 5.200 7.300 11 9.600 .3 14.500z" fill="#a6a6a6"/><path d="M.3 3.200L5.200 7.300 .3 11.400z" fill="#d4d4d4"/><path d="M5.200 7.300L8.300 3.800 11 5zM5.200 7.300L8.300 10.800 11 9.600z" fill="#c4c4c4"/><path d="M.3 .3L11 5 5.200 7.300 11 9.600 .3 14.500zM.3 3.200L5.200 7.300 .3 11.400" fill="none" stroke="#8c8c8c" stroke-width=".6"/><path d="M13.200 1.200h1.800v2h-1.800zM13.200 6.500h1.800v2h-1.800zM13.200 12h1.800v2h-1.800z" fill="#7a7a7a"/></svg><div class="b" style="left:622px;top:105.5px;width:110.5px;height:19px;background:#e9e9ea;border:1px solid #d0d2d6;box-sizing:border-box"></div><svg class="i" style="left:721px;top:113.5px;" width="7" height="4" viewBox="0 0 7 4" ><path d="M0 0h7L3.5 4z" fill="#999"/></svg><svg class="i" style="left:740px;top:63px;" width="12" height="16" viewBox="0 0 12 16" ><path d="M2.800 1.200v13.200M1 .800h3.600M1 14.800h3.600" stroke="#c8303a" stroke-width="1.100" fill="none"/><path d="M1.300 3.400L2.800 1l1.500 2.400zM1.300 12.200l1.500 2.400 1.500-2.400z" fill="#c8303a"/><rect x="6.200" y=".3" width="4.700" height="4.700" fill="#2f8f3e"/><rect x="6.200" y="9.900" width="4.700" height="4.700" fill="#1b7ab8"/></svg><svg class="i" style="left:739px;top:85px;" width="14" height="16" viewBox="0 0 14 16" ><path d="M0 7.600h14" stroke="#c8303a" stroke-width="1.200"/><path d="M3.500 2v4M3.500 9.500v4" stroke="#c8303a" stroke-width="1.200"/><path d="M1.600 3.800L3.500 1l1.900 2.800zM1.600 11.600l1.900 2.800 1.900-2.800z" fill="#c8303a"/><rect x="7.200" y=".6" width="4.700" height="4.700" fill="#2f8f3e"/><rect x="7.200" y="10.100" width="4.700" height="4.700" fill="#1b7ab8"/></svg><svg class="i" style="left:741px;top:108px;" width="10" height="15" viewBox="0 0 10 15" ><rect x=".5" y=".5" width="9" height="9" fill="#fff" stroke="#9a9a9a"/><rect x="1.300" y="1.300" width="2.200" height="2.200" fill="#d8322a"/><rect x="3.900" y="1.300" width="2.200" height="2.200" fill="#f08a20"/><rect x="6.500" y="1.300" width="2.200" height="2.200" fill="#f8d848"/><rect x="1.300" y="3.900" width="2.200" height="2.200" fill="#1b6ca8"/><rect x="3.900" y="3.900" width="2.200" height="2.200" fill="#8cc4e8"/><rect x="6.500" y="3.900" width="2.200" height="2.200" fill="#e8f0f8"/><rect x="1.300" y="6.500" width="2.200" height="2.200" fill="#1f6a2a"/><rect x="3.900" y="6.500" width="2.200" height="2.200" fill="#3a9a40"/><rect x="6.500" y="6.500" width="2.200" height="2.200" fill="#a8d890"/><text x="5" y="14.600" font-size="5.800" font-weight="bold" font-family="Liberation Sans,sans-serif" fill="#1b7ab8" text-anchor="middle">123</text></svg><svg class="i" style="left:874px;top:67px;" width="24" height="24" viewBox="0 0 24 24" ><defs><linearGradient id="sky" x1="0" y1="0" x2="0" y2="1"><stop offset="0" stop-color="#1a6aa8"/><stop offset="1" stop-color="#6fb4dc"/></linearGradient><linearGradient id="hill" x1="0" y1="0" x2="1" y2="1"><stop offset="0" stop-color="#1f7a2a"/><stop offset="1" stop-color="#4aa040"/></linearGradient></defs><rect width="24" height="24" fill="url(#sky)"/><path d="M0 17l8-8.500 16 9V24H0z" fill="url(#hill)"/><circle cx="18" cy="6" r="3.200" fill="#f5c020"/></svg><svg class="i" style="left:883px;top:115.5px;" width="7" height="4" viewBox="0 0 7 4" ><path d="M0 0h7L3.5 4z" fill="#111"/></svg><svg class="i" style="left:932px;top:64px;" width="12" height="16" viewBox="0 0 12 16" ><path d="M6 2.200L9.800 6 6 9.800 2.200 6Z" fill="#e3a0a6"/><path d="M.6 2.600Q.6 .6 2.600 .6H5.500L11.400 6.500V9.400Q11.400 11.400 9.400 11.400H6.500L.6 5.500Z" fill="none" stroke="#1b7ab8" stroke-width="1.100"/><path d="M11.400 2.600Q11.400 .6 9.400 .6H6.500L.6 6.500V9.400Q.6 11.400 2.600 11.400H5.500L11.400 5.500Z" fill="none" stroke="#c8383c" stroke-width="1.100" stroke-dasharray="5 0"/><path d="M1 13h1.200v2.200H1zM4.200 13.800h1.300v1.300H4.200zM7.100 13.800h1.300v1.300H7.100zM10 13h1.200v2.200H10z" fill="#1b6ca8"/></svg><svg class="i" style="left:968px;top:65px;" width="14" height="14" viewBox="0 0 14 14" ><path d="M11.500 5V.500H.500v11H6" fill="none" stroke="#8c8c8c"/><path d="M.5 1.300h11" stroke="#8c8c8c" stroke-width="2.200"/><path d="M10 6.800v6.600M6.700 10.100h6.600" stroke="#444" stroke-width="2"/></svg><svg class="i" style="left:968px;top:87.5px;" width="13" height="12" viewBox="0 0 13 12" ><rect x=".5" y=".5" width="11.500" height="10.500" fill="#f8f8f8" stroke="#a4a4a4"/><path d="M.5 1.300h11.500" stroke="#a4a4a4" stroke-width="2.200"/><rect x="2.500" y="4.500" width="7.500" height="4.500" fill="none" stroke="#8a8a8a" stroke-dasharray="2 1"/></svg><svg class="i" style="left:967px;top:108px;" width="15" height="15" viewBox="0 0 15 15" ><path d="M4.500 3.500V.500h7.500v6.500H10" fill="none" stroke="#b4b4b4"/><path d="M4.500 1.200h7.500" stroke="#b4b4b4" stroke-width="1.600"/><path d="M.5 4h6.500v6h-6.500z" fill="#fff" stroke="#8c8c8c"/><path d="M.5 4.700h6.500" stroke="#8c8c8c" stroke-width="1.600"/><rect x="6.700" y="6.500" width="7" height="6.800" fill="#fff" stroke="#1b6ca8" stroke-width="1.200"/><path d="M6.700 7.300h7" stroke="#1b6ca8" stroke-width="2"/></svg><svg class="i" style="left:1053.5px;top:112.5px;" width="7" height="4" viewBox="0 0 7 4" ><path d="M0 0h7L3.5 4z" fill="#111"/></svg><svg class="i" style="left:1081px;top:63px;" width="24" height="24" viewBox="0 0 24 24" ><g stroke="#909090" stroke-width="1.600" fill="none"><path d="M.5 .4l4 4M23.500 .4l-4 4M.5 23l4-4M23.500 23l-4-4"/></g><g fill="#909090"><path d="M6.200 6.100H2.600L6.200 2.500zM17.800 6.100h3.600L17.800 2.500zM6.200 17.700H2.600l3.600 3.600zM17.800 17.700h3.600l-3.600 3.600z"/></g><path d="M8.400 8v7.800h7.600M8.400 15.800l4.800-4.600" fill="none" stroke="#1b7ab8" stroke-width="2"/><path d="M5.600 9.200l2.800-3.800 2.800 3.800zM15 13l3.400 2.800-3.400 2.800zM11.200 9.400l4-.4-.4 4z" fill="#1b7ab8"/></svg><svg class="i" style="left:1084px;top:94px;" width="21" height="22" viewBox="0 0 21 22" ><defs><linearGradient id="fh" x1="0" y1="0" x2="1" y2="0"><stop offset="0" stop-color="#c8302a"/><stop offset=".6" stop-color="#c8302a"/><stop offset="1" stop-color="#f08a20"/></linearGradient></defs><path d="M15.600 3A9.400 9.400 0 1 0 16.800 18.200" fill="none" stroke="url(#fh)" stroke-width="1.300"/><path d="M14.800 .8l4.400 3.200-4.800 1.800z" fill="#f08a20"/><path d="M7.700 14.400L12.500 9.800" stroke="#1b7ab8" stroke-width="1.800"/><path d="M11 9l3-.6-.6 3z" fill="#1b7ab8"/><path d="M7.700 14.400v-6" stroke="#1f8a3a" stroke-width="1.800"/><path d="M5.400 9.200l2.300-3.400 2.300 3.400z" fill="#1f8a3a"/><path d="M7 14.400h6.200" stroke="#c8302a" stroke-width="1.800"/><path d="M12.600 12.200l3.400 2.200-3.400 2.200z" fill="#c8302a"/></svg><svg class="i" style="left:1222px;top:103px;" width="7" height="4" viewBox="0 0 7 4" ><path d="M0 0h7L3.5 4z" fill="#111"/></svg><svg class="i" style="left:1259px;top:64px;" width="30" height="30" viewBox="0 0 30 30" ><path d="M1.5 4.5h6M4.5 1.5v6" stroke="#9a9a9a" stroke-width="1"/><path d="M11.5 8.5h6M14.5 5.5v6" stroke="#9a9a9a" stroke-width="1"/><path d="M12.5 19.5h6M15.5 16.5v6" stroke="#9a9a9a" stroke-width="1"/><path d="M5.5 26h6M8.5 23v6" stroke="#9a9a9a" stroke-width="1"/><path d="M22.5 25.5h6M25.5 22.5v6" stroke="#9a9a9a" stroke-width="1"/><circle cx="25" cy="9" r="3.200" fill="#9a9a9a"/><circle cx="5" cy="15.500" r="3.200" fill="#9a9a9a"/></svg><svg class="i" style="left:1288px;top:116px;" width="7" height="4" viewBox="0 0 7 4" ><path d="M0 0h7L3.5 4z" fill="#777"/></svg><svg class="i" style="left:1303.5px;top:62.5px;" width="15" height="17" viewBox="0 0 15 17" ><ellipse cx="7.500" cy="8.500" rx="6.800" ry="7.800" fill="none" stroke="#1b7ab8" stroke-width="1.200" stroke-dasharray="1.600 1.600"/><path d="M3 5.500l5-2 4.500 1.500v6.500L8 14l-5-2.500z" fill="#d0d0d0"/><path d="M8 7.500l4.500-2.500v6.500L8 14z" fill="#6a6a6a"/><path d="M3 5.500L8 7.500v6.500l-5-2.500z" fill="#a8a8a8"/></svg><svg class="i" style="left:1321.5px;top:68px;" width="7" height="4" viewBox="0 0 7 4" ><path d="M0 0h7L3.5 4z" fill="#111"/></svg><svg class="i" style="left:1304px;top:85.5px;" width="15" height="15" viewBox="0 0 15 15" ><rect x=".7" y=".7" width="13.600" height="13.600" fill="none" stroke="#8a8a8a" stroke-width="1.200" stroke-dasharray="3 2"/><path d="M7.500 3v9M3.600 5.200l7.800 4.600M11.400 5.200L3.600 9.800" stroke="#1b7ab8" stroke-width="1.800"/></svg><svg class="i" style="left:1304px;top:108.5px;" width="14" height="13" viewBox="0 0 14 13" ><path d="M5 1h8v7h-2.500V3.500H5z" fill="#8f8f8f"/><rect x="1" y="5" width="7.500" height="7" fill="none" stroke="#1b7ab8" stroke-width="1.300" stroke-dasharray="2 1.500"/></svg>
<div style="position:absolute;left:0;top:0;width:1371px;height:573px;will-change:transform"><span class="t" style="left:72.5px;top:38.0px;color:#000;font-size:12px;letter-spacing:-0.34px">Home</span><span class="t" style="left:130.0px;top:38.0px;color:#000;font-size:12px;letter-spacing:-0.06px">Position and Filter</span><span class="t" style="left:252.0px;top:38.0px;color:#000;font-size:12px;letter-spacing:-0.41px">Create</span><span class="t" style="left:312.0px;top:38.0px;color:#000;font-size:12px;letter-spacing:-0.23px">Edit</span><span class="t" style="left:358.0px;top:38.0px;color:#000;font-size:12px;letter-spacing:-0.17px">Query</span><span class="t" style="left:416.0px;top:38.0px;color:#000;font-size:12px;letter-spacing:-0.14px">Geotechnical</span><span class="t" style="left:510.0px;top:38.0px;color:#000;font-size:12px;letter-spacing:-0.68px">Labs</span><span class="t" style="left:560.0px;top:38.0px;color:#000;font-size:12px;letter-spacing:-0.06px">Workbench</span><span class="t" style="left:646.0px;top:38.0px;color:#000;font-size:12px;letter-spacing:-0.27px">View</span><span class="t" style="left:1193.0px;top:38.0px;color:#000;font-size:12px;letter-spacing:-0.23px">Help</span><span class="t" style="left:1253.0px;top:38.0px;color:#8a8a8a;font-size:12px;font-style:italic;letter-spacing:-0.64px">Search (F3)</span><span class="t" style="left:534.0px;top:13.0px;color:#000;font-size:12.5px;letter-spacing:-0.29px">PointStudio</span><span class="t" style="left:645.5px;top:12.5px;color:#dcdcdc;font-size:13.5px;font-weight:bold;letter-spacing:-0.11px">PointStudio 9.0.0.12926 - Python SDK.maptekdb</span><span class="t" style="left:58.0px;top:64.0px;color:#1c1c1c;font-size:12px;letter-spacing:-0.29px">1px Thickness</span><span class="t" style="left:58.0px;top:86.0px;color:#1c1c1c;font-size:12px;letter-spacing:-0.47px">Dashed</span><span class="t" style="left:86.0px;top:128.0px;color:#4a80c0;font-size:12px;letter-spacing:-0.42px">Style</span><span class="t" style="left:224.5px;top:63.0px;color:#1c1c1c;font-size:12px;letter-spacing:0.30px">Import</span><span class="t" style="left:224.5px;top:85.0px;color:#1c1c1c;font-size:12px;letter-spacing:-0.24px">Export</span><span class="t" style="left:226.5px;top:107.0px;color:#1c1c1c;font-size:12px;letter-spacing:-0.23px">Project</span><span class="t" style="left:230.5px;top:128.0px;color:#4a80c0;font-size:12px;letter-spacing:-0.45px">Data</span><span class="t" style="left:318.0px;top:63.0px;color:#7d7d7d;font-size:12px;letter-spacing:-0.59px">Cut</span><span class="t" style="left:318.0px;top:85.0px;color:#7d7d7d;font-size:12px;letter-spacing:-0.34px">Copy</span><span class="t" style="left:318.5px;top:107.0px;color:#7d7d7d;font-size:12px;letter-spacing:-0.80px">Paste</span><span class="t" style="left:297.0px;top:128.0px;color:#4a80c0;font-size:12px;letter-spacing:-0.05px">Clipboard</span><span class="t" style="left:384.5px;top:63.0px;color:#7d7d7d;font-size:12px;letter-spacing:-0.34px">Delete</span><span class="t" style="left:384.5px;top:85.0px;color:#7d7d7d;font-size:12px;letter-spacing:-0.51px">Crop</span><span class="t" style="left:384.5px;top:107.0px;color:#1c1c1c;font-size:12px;letter-spacing:-0.16px">Polygon Crop</span><span class="t" style="left:398.0px;top:128.0px;color:#4a80c0;font-size:12px;letter-spacing:-0.34px">Crop</span><span class="t" style="left:486.0px;top:97.0px;color:#666;font-size:12px;letter-spacing:-0.07px">Colour</span><span class="t" style="left:478.5px;top:110.0px;color:#666;font-size:12px;letter-spacing:-0.71px">Scheme</span><span class="t" style="left:558.5px;top:64.0px;color:#7d7d7d;font-size:12px;letter-spacing:-0.09px">Uniform</span><span class="t" style="left:557.0px;top:86.0px;color:#7d7d7d;font-size:12px;letter-spacing:-0.11px">Opacity</span><span class="t" style="left:558.5px;top:108.0px;color:#7d7d7d;font-size:12px;letter-spacing:-0.30px">Appearance</span><span class="t" style="left:694.0px;top:128.0px;color:#4a80c0;font-size:12px;letter-spacing:-0.07px">Colour</span><span class="t" style="left:756.0px;top:63.0px;color:#1c1c1c;font-size:12px;letter-spacing:-0.31px">Graded</span><span class="t" style="left:756.0px;top:85.0px;color:#1c1c1c;font-size:12px;letter-spacing:-0.23px">Threshold</span><span class="t" style="left:756.0px;top:107.0px;color:#1c1c1c;font-size:12px;letter-spacing:-0.12px">Numeric Legend</span><span class="t" style="left:851.5px;top:97.0px;color:#1c1c1c;font-size:12px;letter-spacing:-0.07px">Photographic</span><span class="t" style="left:985.0px;top:63.0px;color:#1c1c1c;font-size:12px;letter-spacing:-0.23px">New View</span><span class="t" style="left:985.0px;top:85.0px;color:#7d7d7d;font-size:12px;letter-spacing:-0.23px">View Selection</span><span class="t" style="left:985.0px;top:107.0px;color:#1c1c1c;font-size:12px;letter-spacing:-0.52px">Saved Views</span><span class="t" style="left:1002.0px;top:128.0px;color:#4a80c0;font-size:12px;letter-spacing:-0.60px">View</span><span class="t" style="left:1107.5px;top:68.0px;color:#1c1c1c;font-size:12px;letter-spacing:-0.11px">Set Centre of Rotation</span><span class="t" style="left:1109.5px;top:97.0px;color:#1c1c1c;font-size:12px;letter-spacing:-0.28px">Freehand Transform</span><span class="t" style="left:1121.5px;top:128.0px;color:#4a80c0;font-size:12px;letter-spacing:0.13px">Manipulation</span><span class="t" style="left:1258.5px;top:97.0px;color:#666;font-size:12px;letter-spacing:-0.25px">Smart</span><span class="t" style="left:1253.0px;top:110.0px;color:#666;font-size:12px;letter-spacing:-0.27px">Select</span><span class="t" style="left:1265.0px;top:128.0px;color:#4a80c0;font-size:12px;letter-spacing:-0.17px">Selection</span><span class="t" style="left:47.5px;top:140.0px;color:#000;font-size:12px;letter-spacing:-0.34px;clip-path:inset(7px 0 0 0)">images</span><span class="t" style="left:47.5px;top:158.0px;color:#000;font-size:12px;letter-spacing:-0.27px">survey</span><span class="t" style="left:47.5px;top:176.0px;color:#000;font-size:12px;letter-spacing:-0.68px">cad</span><span class="t" style="left:47.5px;top:194.0px;color:#000;font-size:12px;letter-spacing:-0.45px">surfaces</span><span class="t" style="left:67.4px;top:212.0px;color:#000;font-size:12px;letter-spacing:0.04px">pit_model (points)</span><span class="t" style="left:67.4px;top:230.0px;color:#000;font-size:12px;letter-spacing:-0.06px">pit_model (wirefra...</span><span class="t" style="left:67.4px;top:248.0px;color:#000;font-size:12px;letter-spacing:0.01px">pit_model</span><span class="t" style="left:67.4px;top:266.0px;color:#000;font-size:12px;letter-spacing:0.04px">pit_model divided</span><span class="t" style="left:67.0px;top:284.0px;color:#000;font-size:12px;font-weight:bold;letter-spacing:-0.32px">hyperbolic parabol...</span><span class="t" style="left:67.0px;top:302.0px;color:#000;font-size:12px;font-weight:bold;letter-spacing:-0.32px">hyperbolic parabol...</span><span class="t" style="left:67.0px;top:320.0px;color:#000;font-size:12px;font-weight:bold;letter-spacing:-0.32px">hyperbolic parabol...</span><span class="t" style="left:47.5px;top:338.0px;color:#000;font-size:12px;letter-spacing:-0.00px">contours</span><span class="t" style="left:47.5px;top:356.0px;color:#000;font-size:12px;letter-spacing:-0.34px">legends</span><span class="t" style="left:47.5px;top:374.0px;color:#000;font-size:12px;letter-spacing:0.05px">geotechnical</span><span class="t" style="left:47.5px;top:392.0px;color:#000;font-size:12px;letter-spacing:-0.17px">scrapbook</span><span class="t" style="left:47.5px;top:410.0px;color:#000;font-size:12px;letter-spacing:-0.03px">geography</span><span class="t" style="left:47.5px;top:428.0px;color:#000;font-size:12px;letter-spacing:-0.04px">drillholes</span><span class="t" style="left:47.5px;top:446.0px;color:#000;font-size:12px;letter-spacing:-0.34px">seismic</span><span class="t" style="left:47.5px;top:464.0px;color:#000;font-size:12px;letter-spacing:0.04px">geomodel</span><span class="t" style="left:47.5px;top:482.0px;color:#000;font-size:12px;letter-spacing:-0.23px">geophysics</span><span class="t" style="left:47.5px;top:500.0px;color:#000;font-size:12px;letter-spacing:0.03px">blockmodels</span><span class="t" style="left:47.5px;top:518.0px;color:#000;font-size:12px;letter-spacing:0.43px">import</span><span class="t" style="left:47.5px;top:536.0px;color:#000;font-size:12px;letter-spacing:-0.31px">Recycle bin</span></div>
</body></html>
